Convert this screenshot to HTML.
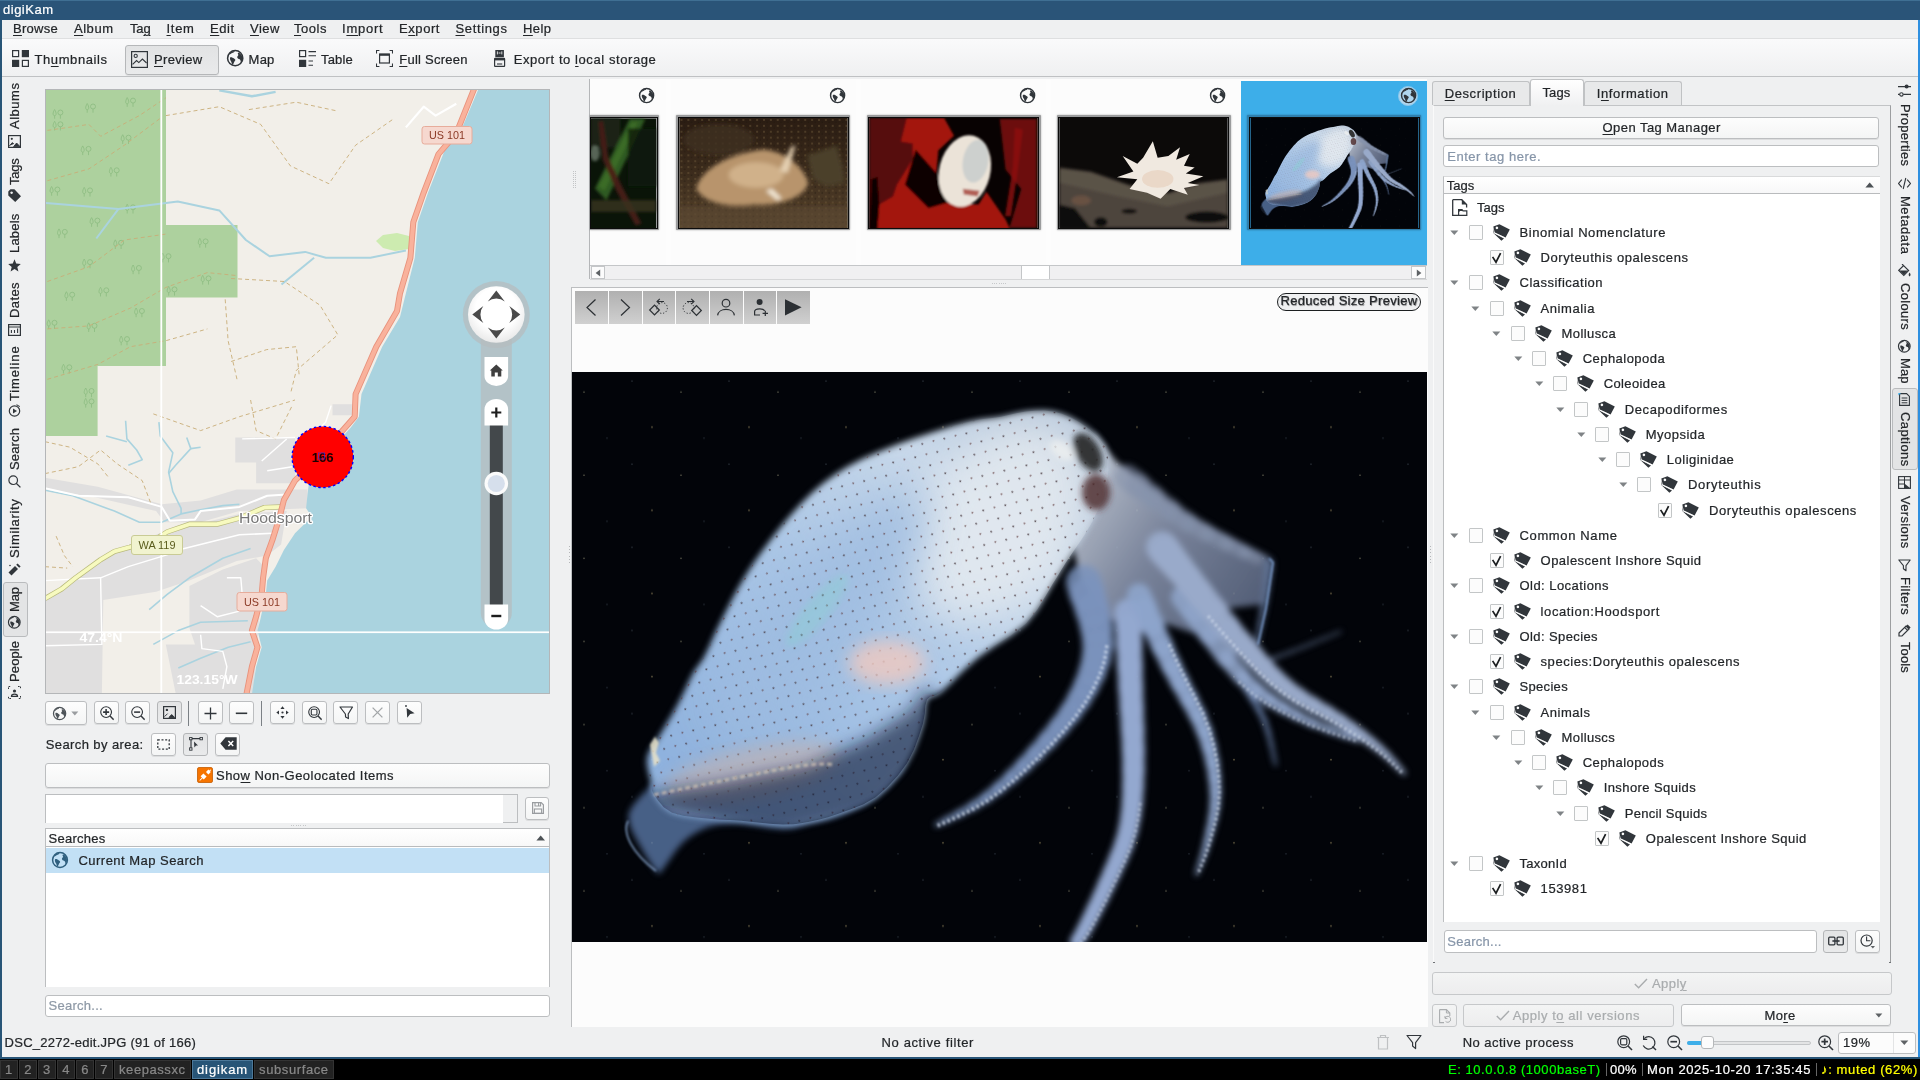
<!DOCTYPE html>
<html><head><meta charset="utf-8"><title>digiKam</title>
<style>
html,body{margin:0;padding:0;}
body{width:1920px;height:1080px;overflow:hidden;background:#eff0f1;position:relative;font-family:"Liberation Sans", sans-serif;}
.a{position:absolute;display:block;}
.t{position:absolute;white-space:pre;font-family:"Liberation Sans", sans-serif;-webkit-text-stroke:0.22px currentColor;}
#root{position:absolute;left:0;top:0;width:1920px;height:1080px;will-change:transform;transform:translateZ(0);}
u{text-decoration:underline;text-underline-offset:1.5px;text-decoration-thickness:1px;}
</style></head><body><div id="root">
<div class="a" style="left:0px;top:0px;width:1920px;height:20px;background:#2a5478;"></div>
<div class="a" style="left:0px;top:0px;width:1920px;height:1px;background:#3f6f93;"></div>
<div class="t" style="left:3.00px;top:1.00px;font-size:13px;line-height:17.000px;letter-spacing:0.504px;color:#ffffff;">digiKam</div>
<div class="a" style="left:0px;top:20px;width:2px;height:1039px;background:#285577;"></div>
<div class="a" style="left:1918px;top:20px;width:2px;height:1039px;background:#2e8fe0;"></div>
<div class="a" style="left:0px;top:1057px;width:1920px;height:2px;background:#285577;"></div>
<div class="a" style="left:2px;top:20px;width:1916px;height:18.5px;background:#eff0f1;"></div>
<div class="t" style="left:13.00px;top:20.00px;font-size:13px;line-height:17.000px;letter-spacing:0.273px;color:#232629;"><u>B</u>rowse</div>
<div class="t" style="left:74.00px;top:20.00px;font-size:13px;line-height:17.000px;letter-spacing:0.528px;color:#232629;"><u>A</u>lbum</div>
<div class="t" style="left:130.00px;top:20.00px;font-size:13px;line-height:17.000px;letter-spacing:-0.156px;color:#232629;">Ta<u>g</u></div>
<div class="t" style="left:166.50px;top:20.00px;font-size:13px;line-height:17.000px;letter-spacing:0.701px;color:#232629;"><u>I</u>tem</div>
<div class="t" style="left:210.00px;top:20.00px;font-size:13px;line-height:17.000px;letter-spacing:0.598px;color:#232629;"><u>E</u>dit</div>
<div class="t" style="left:250.00px;top:20.00px;font-size:13px;line-height:17.000px;letter-spacing:0.512px;color:#232629;"><u>V</u>iew</div>
<div class="t" style="left:294.00px;top:20.00px;font-size:13px;line-height:17.000px;letter-spacing:0.528px;color:#232629;"><u>T</u>ools</div>
<div class="t" style="left:342.00px;top:20.00px;font-size:13px;line-height:17.000px;letter-spacing:0.776px;color:#232629;">I<u>m</u>port</div>
<div class="t" style="left:399.00px;top:20.00px;font-size:13px;line-height:17.000px;letter-spacing:0.570px;color:#232629;">E<u>x</u>port</div>
<div class="t" style="left:455.50px;top:20.00px;font-size:13px;line-height:17.000px;letter-spacing:0.627px;color:#232629;"><u>S</u>ettings</div>
<div class="t" style="left:523.00px;top:20.00px;font-size:13px;line-height:17.000px;letter-spacing:0.438px;color:#232629;"><u>H</u>elp</div>
<div class="a" style="left:2px;top:38.5px;width:1916px;height:38px;background:linear-gradient(#fafafb,#eff0f1);"></div>
<div class="a" style="left:2px;top:38px;width:1916px;height:1px;background:#dedfe0;"></div>
<div class="a" style="left:2px;top:76px;width:1916px;height:1px;background:#bfc1c3;"></div>
<svg class="a" style="left:12px;top:50px;" width="17" height="17" viewBox="0 0 17 17"><rect x="0.6" y="0.6" width="6" height="6" fill="none" stroke="#31363b" stroke-width="1.2"/>
<rect x="9.8" y="0" width="7.2" height="7.2" fill="#31363b"/>
<rect x="0" y="9.8" width="7.2" height="7.2" fill="#31363b"/>
<rect x="10.4" y="10.4" width="6" height="6" fill="none" stroke="#31363b" stroke-width="1.2"/></svg>
<div class="t" style="left:34.50px;top:51.00px;font-size:13px;line-height:17.000px;letter-spacing:0.580px;color:#232629;">Th<u>u</u>mbnails</div>
<div class="a" style="left:125px;top:44.5px;width:93.5px;height:30px;box-sizing:border-box;border:1px solid #b5b7b9;border-radius:3px;background:linear-gradient(#e2e3e4,#e9eaeb);box-shadow:0 1px 0 rgba(0,0,0,0.06);"></div>
<svg class="a" style="left:131px;top:50.5px;" width="17" height="17" viewBox="0 0 17 17"><g transform="scale(1.0)"><rect x="0.6" y="0.6" width="15.8" height="15.8" fill="none" stroke="#31363b" stroke-width="1.2"/>
<circle cx="4.7" cy="4.9" r="1.6" fill="none" stroke="#31363b" stroke-width="1.1"/>
<path d="M1.6,13.4 L5.6,9.6 L7.8,11.6 L11.4,8 L15.6,12" fill="none" stroke="#31363b" stroke-width="1.1"/></g></svg>
<div class="t" style="left:154.00px;top:51.00px;font-size:13px;line-height:17.000px;letter-spacing:0.321px;color:#232629;"><u>P</u>review</div>
<svg class="a" style="left:224.5px;top:48.2px;" width="20.4" height="20.4" viewBox="0 0 20.4 20.4"><g transform="translate(10.2,10.2) scale(0.9879518072289155)"><circle cx="0" cy="0" r="7.7" fill="none" stroke="#31363b" stroke-width="1.55"/>
<path d="M-5.2,-0.6 C-4.2,-1.4 -2.6,-0.6 -1.2,0.4 C0.4,1.2 0.6,2.2 -0.6,3.2 C-1.4,4.4 -1.6,6 -2.6,7 C-3.4,6.4 -3.4,4.8 -4,3.6 C-4.8,2.6 -5.6,1.2 -5.2,-0.6 Z" fill="#31363b"/>
<path d="M3,-5.6 C4.4,-5.8 5.4,-4.4 6.8,-2.6 C7.8,0.4 7.2,3.4 5.6,5.4 C5.8,3.6 5.6,2 4.6,1 C3.2,0.8 2,0 2,-1.2 C2.2,-2.4 3.4,-2.6 3.2,-3.6 C2.6,-4.4 2.4,-5 3,-5.6 Z" fill="#31363b"/>
<path d="M-5.8,-4.6 C-4.4,-6.4 -2.4,-7.4 -0.4,-7.4 L-1.2,-6 C-2.8,-5.6 -4.4,-4.6 -5.8,-3.4 Z" fill="#31363b"/></g></svg>
<div class="t" style="left:248.60px;top:51.00px;font-size:13px;line-height:17.000px;letter-spacing:0.234px;color:#232629;">Map</div>
<svg class="a" style="left:299px;top:50px;" width="17" height="17" viewBox="0 0 17 17"><rect x="0.6" y="0.6" width="6" height="6" fill="none" stroke="#31363b" stroke-width="1.2"/>
<rect x="0" y="9.8" width="7.2" height="7.2" fill="#31363b"/>
<path d="M9.5,1.6 H17 M9.5,5.7 H17 M9.5,11 H14 M9.5,15.2 H14" stroke="#31363b" stroke-width="1.1"/></svg>
<div class="t" style="left:321.00px;top:51.00px;font-size:13px;line-height:17.000px;letter-spacing:0.184px;color:#232629;">Table</div>
<svg class="a" style="left:376px;top:50px;" width="17" height="17" viewBox="0 0 17 17"><path d="M0.5,3.4 V0.5 H3.4 M13.6,0.5 H16.5 V3.4 M16.5,13.6 V16.5 H13.6 M3.4,16.5 H0.5 V13.6" fill="none" stroke="#31363b" stroke-width="1.1"/>
<rect x="3.6" y="4.2" width="9.8" height="8.8" fill="none" stroke="#31363b" stroke-width="1.2"/>
<rect x="3.2" y="3.6" width="10.6" height="2.2" fill="#31363b"/></svg>
<div class="t" style="left:399.20px;top:51.00px;font-size:13px;line-height:17.000px;letter-spacing:0.259px;color:#232629;"><u>F</u>ull Screen</div>
<svg class="a" style="left:493.6px;top:50px;" width="12" height="17" viewBox="0 0 12 17"><rect x="1.3" y="0" width="8.6" height="7.2" fill="#31363b"/>
<path d="M3.4,1.4 V4.4 M7.8,1.4 V4.4 M4.6,3 H6.6" stroke="#eff0f1" stroke-width="0.9"/>
<rect x="0.6" y="8.4" width="10" height="8" fill="none" stroke="#31363b" stroke-width="1.2" rx="0.5"/>
<rect x="0.6" y="8.4" width="10" height="2" fill="#31363b"/>
<path d="M3,14 H8.2" stroke="#31363b" stroke-width="1.1"/></svg>
<div class="t" style="left:513.70px;top:51.00px;font-size:13px;line-height:17.000px;letter-spacing:0.576px;color:#232629;">Export to <u>l</u>ocal storage</div>
<div class="t" style="left:4.60px;top:1034.00px;font-size:13px;line-height:17.000px;letter-spacing:0.245px;color:#232629;">DSC_2272-edit.JPG (91 of 166)</div>
<div class="t" style="left:881.50px;top:1034.00px;font-size:13px;line-height:17.000px;letter-spacing:0.633px;color:#232629;">No active filter</div>
<div class="t" style="left:1462.70px;top:1034.00px;font-size:13px;line-height:17.000px;letter-spacing:0.469px;color:#232629;">No active process</div>
<svg class="a" style="left:1376px;top:1034px;" width="14" height="16" viewBox="0 0 14 16"><path d="M1,3.5 H13 M4.5,3.5 V1.5 H9.5 V3.5 M2.5,3.5 V15 H11.5 V3.5" fill="none" stroke="#bfc1c3" stroke-width="1.2"/></svg>
<svg class="a" style="left:1406px;top:1034px;" width="16" height="16" viewBox="0 0 16 16"><path d="M1,1.5 H15 L9.6,8.6 V14.6 L6.6,12 V8.6 Z" fill="none" stroke="#31363b" stroke-width="1.2" stroke-linejoin="round"/></svg>
<svg class="a" style="left:1616.5px;top:1035px;" width="16" height="16" viewBox="0 0 16 16"><circle cx="6.7" cy="6.7" r="5.9" fill="none" stroke="#31363b" stroke-width="1.2"/><path d="M11,11 L15,15" stroke="#31363b" stroke-width="1.6"/><rect x="3.6" y="3.6" width="6.2" height="6.2" rx="1.2" fill="none" stroke="#31363b" stroke-width="1.2"/></svg>
<svg class="a" style="left:1641px;top:1035px;" width="16" height="16" viewBox="0 0 16 16"><path d="M3.2,3.6 A6.2,6.2 0 1,1 2.2,10.6" fill="none" stroke="#31363b" stroke-width="1.2"/><path d="M2.6,0.8 V4.4 H6.2" fill="none" stroke="#31363b" stroke-width="1.2"/><path d="M11.4,11.4 L15,15" stroke="#31363b" stroke-width="1.4"/></svg>
<svg class="a" style="left:1667px;top:1035px;" width="16" height="16" viewBox="0 0 16 16"><circle cx="6.7" cy="6.7" r="5.9" fill="none" stroke="#31363b" stroke-width="1.2"/><path d="M11,11 L15,15" stroke="#31363b" stroke-width="1.6"/><path d="M3.4,6.7 H10" stroke="#31363b" stroke-width="1.7"/></svg>
<div class="a" style="left:1687px;top:1040.5px;width:124px;height:4px;box-sizing:border-box;border:1px solid #c3c5c7;border-radius:2px;background:#e3e4e5;"></div>
<div class="a" style="left:1687px;top:1040.5px;width:16px;height:4px;border-radius:2px;background:#3daee9;"></div>
<div class="a" style="left:1701px;top:1036px;width:13px;height:13px;box-sizing:border-box;border:1px solid #b6b8ba;border-radius:3px;background:#fcfcfc;"></div>
<svg class="a" style="left:1818px;top:1035px;" width="16" height="16" viewBox="0 0 16 16"><circle cx="6.7" cy="6.7" r="5.9" fill="none" stroke="#31363b" stroke-width="1.2"/><path d="M11,11 L15,15" stroke="#31363b" stroke-width="1.6"/><path d="M3.4,6.7 H10 M6.7,3.4 V10" stroke="#31363b" stroke-width="1.7"/></svg>
<div class="a" style="left:1838px;top:1031.5px;width:78px;height:22px;box-sizing:border-box;border:1px solid #bcbec0;border-radius:3px;background:#fcfcfc;"></div>
<div class="a" style="left:1893px;top:1032.5px;width:1px;height:20px;background:#e3e4e5;"></div>
<div class="t" style="left:1843.00px;top:1034.00px;font-size:13px;line-height:17.000px;letter-spacing:0.490px;color:#232629;">19%</div>
<svg class="a" style="left:1900px;top:1040px;" width="9" height="6" viewBox="0 0 9 6"><path d="M0.3,0.4 L8.3,0.4 L4.3,5 Z" fill="#5e6265"/></svg>
<div class="a" style="left:0px;top:1059px;width:1920px;height:21px;background:#000000;"></div>
<div class="a" style="left:0px;top:1060px;width:17.7px;height:19px;box-sizing:border-box;border:1px solid #333333;background:#222222;"></div>
<div class="t" style="left:5.03px;top:1061.00px;font-size:13px;line-height:17.000px;letter-spacing:0.000px;color:#888888;">1</div>
<div class="a" style="left:19px;top:1060px;width:17.9px;height:19px;box-sizing:border-box;border:1px solid #333333;background:#222222;"></div>
<div class="t" style="left:24.13px;top:1061.00px;font-size:13px;line-height:17.000px;letter-spacing:0.000px;color:#888888;">2</div>
<div class="a" style="left:38px;top:1060px;width:17.8px;height:19px;box-sizing:border-box;border:1px solid #333333;background:#222222;"></div>
<div class="t" style="left:43.08px;top:1061.00px;font-size:13px;line-height:17.000px;letter-spacing:0.000px;color:#888888;">3</div>
<div class="a" style="left:57.3px;top:1060px;width:17.5px;height:19px;box-sizing:border-box;border:1px solid #333333;background:#222222;"></div>
<div class="t" style="left:62.23px;top:1061.00px;font-size:13px;line-height:17.000px;letter-spacing:0.000px;color:#888888;">4</div>
<div class="a" style="left:76.25px;top:1060px;width:17.5px;height:19px;box-sizing:border-box;border:1px solid #333333;background:#222222;"></div>
<div class="t" style="left:81.18px;top:1061.00px;font-size:13px;line-height:17.000px;letter-spacing:0.000px;color:#888888;">6</div>
<div class="a" style="left:95px;top:1060px;width:18px;height:19px;box-sizing:border-box;border:1px solid #333333;background:#222222;"></div>
<div class="t" style="left:100.18px;top:1061.00px;font-size:13px;line-height:17.000px;letter-spacing:0.000px;color:#888888;">7</div>
<div class="a" style="left:114px;top:1060px;width:76.6px;height:19px;box-sizing:border-box;border:1px solid #333333;background:#222222;"></div>
<div class="t" style="left:119.05px;top:1061.00px;font-size:13px;line-height:17.000px;letter-spacing:0.564px;color:#888888;">keepassxc</div>
<div class="a" style="left:192px;top:1060px;width:61px;height:19px;box-sizing:border-box;border:1px solid #4c7899;background:#285577;"></div>
<div class="t" style="left:197.00px;top:1061.00px;font-size:13px;line-height:17.000px;letter-spacing:0.886px;color:#ffffff;">digikam</div>
<div class="a" style="left:254px;top:1060px;width:79.75px;height:19px;box-sizing:border-box;border:1px solid #333333;background:#222222;"></div>
<div class="t" style="left:259.12px;top:1061.00px;font-size:13px;line-height:17.000px;letter-spacing:0.591px;color:#888888;">subsurface</div>
<div class="t" style="left:1448.00px;top:1061.00px;font-size:13px;line-height:17.000px;letter-spacing:0.539px;color:#00ff00;">E: 10.0.0.8 (1000baseT)</div>
<div class="a" style="left:1605.5px;top:1063px;width:1px;height:13px;background:#666666;"></div>
<div class="t" style="left:1610.00px;top:1061.00px;font-size:13px;line-height:17.000px;letter-spacing:0.323px;color:#ffffff;">00%</div>
<div class="a" style="left:1642px;top:1063px;width:1px;height:13px;background:#666666;"></div>
<div class="t" style="left:1647.00px;top:1061.00px;font-size:13px;line-height:17.000px;letter-spacing:0.625px;color:#ffffff;">Mon 2025-10-20 17:35:45</div>
<div class="a" style="left:1816.3px;top:1063px;width:1px;height:13px;background:#666666;"></div>
<div class="t" style="left:1821.00px;top:1061.00px;font-size:13px;line-height:17.000px;letter-spacing:0.632px;color:#ffff00;">♪: muted (62%)</div>
<div class="a" style="left:3px;top:582px;width:25px;height:54.5px;box-sizing:border-box;border:1px solid #b9bbbd;border-radius:3px;background:#e3e4e5;"></div>
<div class="t" style="left:7.73px;top:128.50px;transform-origin:0 0;transform:rotate(-90deg);font-size:13px;line-height:14.937px;letter-spacing:0.523px;color:#232629">Albums</div>
<svg class="a" style="left:7.5px;top:135px;" width="13" height="13" viewBox="0 0 13 13"><rect x="0.6" y="0.6" width="11.8" height="11.8" fill="none" stroke="#31363b" stroke-width="1.2"/><circle cx="3.8" cy="3.8" r="1.1" fill="#31363b"/><path d="M1.4,10.8 L4.4,7.6 L5.8,9 M5.6,11.6 L8.6,8 L12,11.6 Z" fill="#31363b" stroke="#31363b" stroke-width="0.9"/></svg>
<div class="t" style="left:7.73px;top:184.60px;transform-origin:0 0;transform:rotate(-90deg);font-size:13px;line-height:14.937px;letter-spacing:-0.217px;color:#232629">Tags</div>
<svg class="a" style="left:7.5px;top:189px;" width="13" height="13" viewBox="0 0 13 13"><path d="M0.3,6.4 L0.3,2.4 L2.4,0.3 L6.4,0.3 L13,7.2 L7.2,13 Z M3.6,2.4 a1.3,1.3 0 1,0 0.01,0Z" fill="#31363b" fill-rule="evenodd"/></svg>
<div class="t" style="left:7.73px;top:253.00px;transform-origin:0 0;transform:rotate(-90deg);font-size:13px;line-height:14.937px;letter-spacing:0.198px;color:#232629">Labels</div>
<svg class="a" style="left:7.5px;top:258.5px;" width="13" height="13" viewBox="0 0 13 13"><path d="M6.5,0.3 L8.2,4.6 L12.8,4.9 L9.3,7.9 L10.4,12.4 L6.5,10 L2.6,12.4 L3.7,7.9 L0.2,4.9 L4.8,4.6 Z" fill="#31363b"/></svg>
<div class="t" style="left:7.73px;top:317.60px;transform-origin:0 0;transform:rotate(-90deg);font-size:13px;line-height:14.937px;letter-spacing:0.406px;color:#232629">Dates</div>
<svg class="a" style="left:7.5px;top:322.5px;" width="13" height="13" viewBox="0 0 13 13"><rect x="0.6" y="1.6" width="11.8" height="10.8" fill="none" stroke="#31363b" stroke-width="1.2"/><path d="M0.6,4 H12.4 M3.4,7 V10 M6.5,7 V10 M9.6,5.6 V10" stroke="#31363b" stroke-width="1.1"/></svg>
<div class="t" style="left:7.73px;top:400.50px;transform-origin:0 0;transform:rotate(-90deg);font-size:13px;line-height:14.937px;letter-spacing:0.855px;color:#232629">Timeline</div>
<svg class="a" style="left:7.5px;top:404px;" width="13" height="13" viewBox="0 0 13 13"><circle cx="6.5" cy="7" r="5.2" fill="none" stroke="#31363b" stroke-width="1.2"/><path d="M5,4.6 L9,7 L5,9.4 Z" fill="#31363b"/><path d="M8.5,0.6 L11.8,2.6" stroke="#31363b" stroke-width="1.1"/></svg>
<div class="t" style="left:7.73px;top:469.60px;transform-origin:0 0;transform:rotate(-90deg);font-size:13px;line-height:14.937px;letter-spacing:0.149px;color:#232629">Search</div>
<svg class="a" style="left:7.5px;top:474.5px;" width="13" height="13" viewBox="0 0 13 13"><circle cx="5.2" cy="5.2" r="4.3" fill="none" stroke="#31363b" stroke-width="1.2"/><path d="M8.2,8.2 L12.4,12.4" stroke="#31363b" stroke-width="1.3"/></svg>
<div class="t" style="left:7.73px;top:557.50px;transform-origin:0 0;transform:rotate(-90deg);font-size:13px;line-height:14.937px;letter-spacing:0.677px;color:#232629">Similarity</div>
<svg class="a" style="left:7.5px;top:562.5px;" width="13" height="13" viewBox="0 0 13 13"><path d="M0.5,9.5 L7,3 L10,6 L3.5,12.5 Z" fill="#31363b"/><path d="M8.2,1.8 L9.6,0.4 L12.6,3.4 L11.2,4.8 Z" fill="#31363b"/><circle cx="2" cy="2.5" r="0.8" fill="#31363b"/></svg>
<div class="t" style="left:7.73px;top:611.60px;transform-origin:0 0;transform:rotate(-90deg);font-size:13px;line-height:14.937px;letter-spacing:-0.099px;color:#232629">Map</div>
<svg class="a" style="left:5.9px;top:614.2px;" width="16.6" height="16.6" viewBox="0 0 16.6 16.6"><g transform="translate(8.3,8.3) scale(0.7590361445783131)"><circle cx="0" cy="0" r="7.7" fill="none" stroke="#31363b" stroke-width="1.55"/>
<path d="M-5.2,-0.6 C-4.2,-1.4 -2.6,-0.6 -1.2,0.4 C0.4,1.2 0.6,2.2 -0.6,3.2 C-1.4,4.4 -1.6,6 -2.6,7 C-3.4,6.4 -3.4,4.8 -4,3.6 C-4.8,2.6 -5.6,1.2 -5.2,-0.6 Z" fill="#31363b"/>
<path d="M3,-5.6 C4.4,-5.8 5.4,-4.4 6.8,-2.6 C7.8,0.4 7.2,3.4 5.6,5.4 C5.8,3.6 5.6,2 4.6,1 C3.2,0.8 2,0 2,-1.2 C2.2,-2.4 3.4,-2.6 3.2,-3.6 C2.6,-4.4 2.4,-5 3,-5.6 Z" fill="#31363b"/>
<path d="M-5.8,-4.6 C-4.4,-6.4 -2.4,-7.4 -0.4,-7.4 L-1.2,-6 C-2.8,-5.6 -4.4,-4.6 -5.8,-3.4 Z" fill="#31363b"/></g></svg>
<div class="t" style="left:7.73px;top:681.80px;transform-origin:0 0;transform:rotate(-90deg);font-size:13px;line-height:14.937px;letter-spacing:0.119px;color:#232629">People</div>
<svg class="a" style="left:7.5px;top:686px;" width="13" height="13" viewBox="0 0 13 13"><path d="M0.5,3 V0.5 H3 M10,0.5 H12.5 V3 M12.5,10 V12.5 H10 M3,12.5 H0.5 V10" fill="none" stroke="#31363b" stroke-width="1" stroke-dasharray="1.6 1"/><circle cx="6.5" cy="5" r="1.6" fill="#31363b"/><path d="M3.4,10.4 C3.4,7.4 9.6,7.4 9.6,10.4 Z" fill="none" stroke="#31363b" stroke-width="1.1"/></svg>
<svg class="a" style="left:45px;top:89px;" width="504" height="604" viewBox="0 0 504 604"><rect x="0" y="0" width="505" height="605" fill="#f2efe9"/><path d="M0,0 H121 V277 H52.6 V347 H0 Z" fill="#add19e"/><rect x="117" y="136" width="75.5" height="72.5" fill="#add19e"/><path d="M331,152 L338,146 L352,144 L364,147 L364,160 L350,162 L338,159 Z" fill="#cdebb0"/><g transform="translate(45.4,19.1)" fill="none" stroke="#8fbd83" stroke-width="0.9"><path d="M-3.2,-4.6 C-5.4,-1 -5,1.6 -3.2,1.6 C-1.4,1.6 -1,-1 -3.2,-4.6 Z M-3.2,1.6 V4.6"/><circle cx="2.6" cy="-1.6" r="2.5"/><path d="M2.6,0.9 V4.6"/></g><g transform="translate(85.4,13.2)" fill="none" stroke="#8fbd83" stroke-width="0.9"><path d="M-3.2,-4.6 C-5.4,-1 -5,1.6 -3.2,1.6 C-1.4,1.6 -1,-1 -3.2,-4.6 Z M-3.2,1.6 V4.6"/><circle cx="2.6" cy="-1.6" r="2.5"/><path d="M2.6,0.9 V4.6"/></g><g transform="translate(12.8,36.9)" fill="none" stroke="#8fbd83" stroke-width="0.9"><path d="M-3.2,-4.6 C-5.4,-1 -5,1.6 -3.2,1.6 C-1.4,1.6 -1,-1 -3.2,-4.6 Z M-3.2,1.6 V4.6"/><circle cx="2.6" cy="-1.6" r="2.5"/><path d="M2.6,0.9 V4.6"/></g><g transform="translate(80.9,50.3)" fill="none" stroke="#8fbd83" stroke-width="0.9"><path d="M-3.2,-4.6 C-5.4,-1 -5,1.6 -3.2,1.6 C-1.4,1.6 -1,-1 -3.2,-4.6 Z M-3.2,1.6 V4.6"/><circle cx="2.6" cy="-1.6" r="2.5"/><path d="M2.6,0.9 V4.6"/></g><g transform="translate(40.9,61.5)" fill="none" stroke="#8fbd83" stroke-width="0.9"><path d="M-3.2,-4.6 C-5.4,-1 -5,1.6 -3.2,1.6 C-1.4,1.6 -1,-1 -3.2,-4.6 Z M-3.2,1.6 V4.6"/><circle cx="2.6" cy="-1.6" r="2.5"/><path d="M2.6,0.9 V4.6"/></g><g transform="translate(69.1,82.9)" fill="none" stroke="#8fbd83" stroke-width="0.9"><path d="M-3.2,-4.6 C-5.4,-1 -5,1.6 -3.2,1.6 C-1.4,1.6 -1,-1 -3.2,-4.6 Z M-3.2,1.6 V4.6"/><circle cx="2.6" cy="-1.6" r="2.5"/><path d="M2.6,0.9 V4.6"/></g><g transform="translate(9.8,102.1)" fill="none" stroke="#8fbd83" stroke-width="0.9"><path d="M-3.2,-4.6 C-5.4,-1 -5,1.6 -3.2,1.6 C-1.4,1.6 -1,-1 -3.2,-4.6 Z M-3.2,1.6 V4.6"/><circle cx="2.6" cy="-1.6" r="2.5"/><path d="M2.6,0.9 V4.6"/></g><g transform="translate(42.4,103.0)" fill="none" stroke="#8fbd83" stroke-width="0.9"><path d="M-3.2,-4.6 C-5.4,-1 -5,1.6 -3.2,1.6 C-1.4,1.6 -1,-1 -3.2,-4.6 Z M-3.2,1.6 V4.6"/><circle cx="2.6" cy="-1.6" r="2.5"/><path d="M2.6,0.9 V4.6"/></g><g transform="translate(85.4,119.9)" fill="none" stroke="#8fbd83" stroke-width="0.9"><path d="M-3.2,-4.6 C-5.4,-1 -5,1.6 -3.2,1.6 C-1.4,1.6 -1,-1 -3.2,-4.6 Z M-3.2,1.6 V4.6"/><circle cx="2.6" cy="-1.6" r="2.5"/><path d="M2.6,0.9 V4.6"/></g><g transform="translate(49.8,133.2)" fill="none" stroke="#8fbd83" stroke-width="0.9"><path d="M-3.2,-4.6 C-5.4,-1 -5,1.6 -3.2,1.6 C-1.4,1.6 -1,-1 -3.2,-4.6 Z M-3.2,1.6 V4.6"/><circle cx="2.6" cy="-1.6" r="2.5"/><path d="M2.6,0.9 V4.6"/></g><g transform="translate(17.2,144.5)" fill="none" stroke="#8fbd83" stroke-width="0.9"><path d="M-3.2,-4.6 C-5.4,-1 -5,1.6 -3.2,1.6 C-1.4,1.6 -1,-1 -3.2,-4.6 Z M-3.2,1.6 V4.6"/><circle cx="2.6" cy="-1.6" r="2.5"/><path d="M2.6,0.9 V4.6"/></g><g transform="translate(73.5,155.4)" fill="none" stroke="#8fbd83" stroke-width="0.9"><path d="M-3.2,-4.6 C-5.4,-1 -5,1.6 -3.2,1.6 C-1.4,1.6 -1,-1 -3.2,-4.6 Z M-3.2,1.6 V4.6"/><circle cx="2.6" cy="-1.6" r="2.5"/><path d="M2.6,0.9 V4.6"/></g><g transform="translate(158.0,154.0)" fill="none" stroke="#8fbd83" stroke-width="0.9"><path d="M-3.2,-4.6 C-5.4,-1 -5,1.6 -3.2,1.6 C-1.4,1.6 -1,-1 -3.2,-4.6 Z M-3.2,1.6 V4.6"/><circle cx="2.6" cy="-1.6" r="2.5"/><path d="M2.6,0.9 V4.6"/></g><g transform="translate(120.9,168.8)" fill="none" stroke="#8fbd83" stroke-width="0.9"><path d="M-3.2,-4.6 C-5.4,-1 -5,1.6 -3.2,1.6 C-1.4,1.6 -1,-1 -3.2,-4.6 Z M-3.2,1.6 V4.6"/><circle cx="2.6" cy="-1.6" r="2.5"/><path d="M2.6,0.9 V4.6"/></g><g transform="translate(42.4,174.7)" fill="none" stroke="#8fbd83" stroke-width="0.9"><path d="M-3.2,-4.6 C-5.4,-1 -5,1.6 -3.2,1.6 C-1.4,1.6 -1,-1 -3.2,-4.6 Z M-3.2,1.6 V4.6"/><circle cx="2.6" cy="-1.6" r="2.5"/><path d="M2.6,0.9 V4.6"/></g><g transform="translate(91.3,180.6)" fill="none" stroke="#8fbd83" stroke-width="0.9"><path d="M-3.2,-4.6 C-5.4,-1 -5,1.6 -3.2,1.6 C-1.4,1.6 -1,-1 -3.2,-4.6 Z M-3.2,1.6 V4.6"/><circle cx="2.6" cy="-1.6" r="2.5"/><path d="M2.6,0.9 V4.6"/></g><g transform="translate(160.9,191.0)" fill="none" stroke="#8fbd83" stroke-width="0.9"><path d="M-3.2,-4.6 C-5.4,-1 -5,1.6 -3.2,1.6 C-1.4,1.6 -1,-1 -3.2,-4.6 Z M-3.2,1.6 V4.6"/><circle cx="2.6" cy="-1.6" r="2.5"/><path d="M2.6,0.9 V4.6"/></g><g transform="translate(24.6,207.3)" fill="none" stroke="#8fbd83" stroke-width="0.9"><path d="M-3.2,-4.6 C-5.4,-1 -5,1.6 -3.2,1.6 C-1.4,1.6 -1,-1 -3.2,-4.6 Z M-3.2,1.6 V4.6"/><circle cx="2.6" cy="-1.6" r="2.5"/><path d="M2.6,0.9 V4.6"/></g><g transform="translate(58.7,202.9)" fill="none" stroke="#8fbd83" stroke-width="0.9"><path d="M-3.2,-4.6 C-5.4,-1 -5,1.6 -3.2,1.6 C-1.4,1.6 -1,-1 -3.2,-4.6 Z M-3.2,1.6 V4.6"/><circle cx="2.6" cy="-1.6" r="2.5"/><path d="M2.6,0.9 V4.6"/></g><g transform="translate(126.9,202.0)" fill="none" stroke="#8fbd83" stroke-width="0.9"><path d="M-3.2,-4.6 C-5.4,-1 -5,1.6 -3.2,1.6 C-1.4,1.6 -1,-1 -3.2,-4.6 Z M-3.2,1.6 V4.6"/><circle cx="2.6" cy="-1.6" r="2.5"/><path d="M2.6,0.9 V4.6"/></g><g transform="translate(94.3,223.6)" fill="none" stroke="#8fbd83" stroke-width="0.9"><path d="M-3.2,-4.6 C-5.4,-1 -5,1.6 -3.2,1.6 C-1.4,1.6 -1,-1 -3.2,-4.6 Z M-3.2,1.6 V4.6"/><circle cx="2.6" cy="-1.6" r="2.5"/><path d="M2.6,0.9 V4.6"/></g><g transform="translate(6.9,235.4)" fill="none" stroke="#8fbd83" stroke-width="0.9"><path d="M-3.2,-4.6 C-5.4,-1 -5,1.6 -3.2,1.6 C-1.4,1.6 -1,-1 -3.2,-4.6 Z M-3.2,1.6 V4.6"/><circle cx="2.6" cy="-1.6" r="2.5"/><path d="M2.6,0.9 V4.6"/></g><g transform="translate(46.9,238.4)" fill="none" stroke="#8fbd83" stroke-width="0.9"><path d="M-3.2,-4.6 C-5.4,-1 -5,1.6 -3.2,1.6 C-1.4,1.6 -1,-1 -3.2,-4.6 Z M-3.2,1.6 V4.6"/><circle cx="2.6" cy="-1.6" r="2.5"/><path d="M2.6,0.9 V4.6"/></g><g transform="translate(79.4,251.7)" fill="none" stroke="#8fbd83" stroke-width="0.9"><path d="M-3.2,-4.6 C-5.4,-1 -5,1.6 -3.2,1.6 C-1.4,1.6 -1,-1 -3.2,-4.6 Z M-3.2,1.6 V4.6"/><circle cx="2.6" cy="-1.6" r="2.5"/><path d="M2.6,0.9 V4.6"/></g><g transform="translate(21.7,279.9)" fill="none" stroke="#8fbd83" stroke-width="0.9"><path d="M-3.2,-4.6 C-5.4,-1 -5,1.6 -3.2,1.6 C-1.4,1.6 -1,-1 -3.2,-4.6 Z M-3.2,1.6 V4.6"/><circle cx="2.6" cy="-1.6" r="2.5"/><path d="M2.6,0.9 V4.6"/></g><g transform="translate(43.9,303.6)" fill="none" stroke="#8fbd83" stroke-width="0.9"><path d="M-3.2,-4.6 C-5.4,-1 -5,1.6 -3.2,1.6 C-1.4,1.6 -1,-1 -3.2,-4.6 Z M-3.2,1.6 V4.6"/><circle cx="2.6" cy="-1.6" r="2.5"/><path d="M2.6,0.9 V4.6"/></g><g transform="translate(12.8,25.1)" fill="none" stroke="#8fbd83" stroke-width="0.9"><path d="M-3.2,-4.6 C-5.4,-1 -5,1.6 -3.2,1.6 C-1.4,1.6 -1,-1 -3.2,-4.6 Z M-3.2,1.6 V4.6"/><circle cx="2.6" cy="-1.6" r="2.5"/><path d="M2.6,0.9 V4.6"/></g><g transform="translate(43.9,314.0)" fill="none" stroke="#8fbd83" stroke-width="0.9"><path d="M-3.2,-4.6 C-5.4,-1 -5,1.6 -3.2,1.6 C-1.4,1.6 -1,-1 -3.2,-4.6 Z M-3.2,1.6 V4.6"/><circle cx="2.6" cy="-1.6" r="2.5"/><path d="M2.6,0.9 V4.6"/></g><polygon points="190.3,348.5 250.0,348.5 250.0,394.3 211.1,394.3 211.1,373.5 190.3,373.5" fill="#e0dfdf"/><polygon points="287.5,315.2 306.9,315.2 306.9,326.3 287.5,326.3" fill="#e0dfdf"/><polygon points="0.0,388.8 52.8,397.7 116.7,415.2 155.6,411.6 191.7,400.4 262.5,400.4 262.5,419.3 194.4,422.1 155.6,433.2 119.4,433.2 111.1,422.1 50.0,408.2 0.0,400.4" fill="#e0dfdf"/><polygon points="84.7,455.4 122.2,441.6 155.6,434.6 194.4,424.9 241.7,422.1 236.1,455.4 222.2,466.6 191.7,472.1 144.4,491.6 111.1,502.7 58.3,511.0 56.9,604.1 0.0,604.1 0.0,511.0 30.6,491.6 55.6,472.1" fill="#e0dfdf"/><polygon points="144.4,497.1 177.8,480.4 211.1,469.3 219.4,477.7 213.9,533.2 208.3,604.1 130.6,604.1 120.8,555.4 150.0,555.4 144.4,538.8" fill="#e0dfdf"/><polygon points="433.5,-0.1 417.2,38.4 399.4,62.1 383.1,103.6 372.8,133.2 369.8,168.8 360.9,204.3 355.0,228.0 337.2,257.7 316.5,305.1 313.9,327.7 305.6,338.8 280.6,366.6 263.9,394.3 262.5,405.4 261.1,419.3 266.7,427.7 250.0,444.3 238.9,461.0 230.6,477.7 222.2,491.6 220.8,505.4 215.3,530.4 212.5,541.6 216.7,558.2 211.1,577.7 206.9,605.4 505,605 505,0" fill="#aad3df"/><polyline points="0.9,114.0 73.5,119.9 132.8,112.5 174.3,121.4 200.9,151.0 224.6,167.3 260.2,162.9 280.9,168.8 325.4,168.8 360.9,161.4" fill="none" stroke="#aad3df" stroke-width="2" stroke-linejoin="round"/><polyline points="73.5,119.9 51.3,149.5" fill="none" stroke="#aad3df" stroke-width="2" stroke-linejoin="round"/><polyline points="269.1,168.8 236.5,195.4" fill="none" stroke="#aad3df" stroke-width="2" stroke-linejoin="round"/><polyline points="174.3,1.4 206.9,7.3 230.6,2.9" fill="none" stroke="#aad3df" stroke-width="2.4" stroke-linejoin="round"/><polyline points="0.0,401.3 27.8,406.8 69.4,422.1 94.4,433.2 116.7,433.2" fill="none" stroke="#aad3df" stroke-width="1.6" stroke-linejoin="round"/><polyline points="80.6,331.8 81.9,349.9 91.7,361.0 97.2,370.7 83.3,376.3" fill="none" stroke="#aad3df" stroke-width="1.6" stroke-linejoin="round"/><polyline points="61.1,347.1 81.9,352.7" fill="none" stroke="#aad3df" stroke-width="1.6" stroke-linejoin="round"/><polyline points="113.9,333.2 115.3,347.1 127.8,363.8 123.6,383.2 127.8,402.7 136.1,419.3 136.1,424.9" fill="none" stroke="#aad3df" stroke-width="1.6" stroke-linejoin="round"/><polyline points="141.7,348.5 145.8,359.6 130.6,376.3 123.6,384.6" fill="none" stroke="#aad3df" stroke-width="1.6" stroke-linejoin="round"/><polyline points="145.8,359.6 155.6,358.2" fill="none" stroke="#aad3df" stroke-width="1.6" stroke-linejoin="round"/><polyline points="116.7,433.2 136.1,424.9 155.6,420.7 177.8,416.6 194.4,415.2" fill="none" stroke="#aad3df" stroke-width="1.6" stroke-linejoin="round"/><polyline points="104.2,520.7 122.2,505.4 144.4,488.8 177.8,469.3 205.6,459.6" fill="none" stroke="#aad3df" stroke-width="1.6" stroke-linejoin="round"/><polyline points="108.3,555.4 133.3,541.6 155.6,533.2 202.8,531.8" fill="none" stroke="#aad3df" stroke-width="1.6" stroke-linejoin="round"/><polyline points="133.3,579.1 155.6,569.3 183.3,558.2 205.6,552.7" fill="none" stroke="#aad3df" stroke-width="1.6" stroke-linejoin="round"/><polyline points="2.4,41.4 43.9,35.4 55.7,47.3 94.3,26.6 120.9,8.8" fill="none" stroke="#c9ad78" stroke-width="1" stroke-dasharray="4 3" stroke-linejoin="round" opacity="0.9"/><polyline points="2.4,91.7 43.9,79.9 79.4,56.2 115.0,29.5" fill="none" stroke="#c9ad78" stroke-width="1" stroke-dasharray="4 3" stroke-linejoin="round" opacity="0.9"/><polyline points="2.4,192.5 43.9,177.7 79.4,151.0 120.9,145.1" fill="none" stroke="#c9ad78" stroke-width="1" stroke-dasharray="4 3" stroke-linejoin="round" opacity="0.9"/><polyline points="2.4,239.9 43.9,236.9 85.4,219.1 120.9,198.4 162.4,183.6 192.0,186.6" fill="none" stroke="#c9ad78" stroke-width="1" stroke-dasharray="4 3" stroke-linejoin="round" opacity="0.9"/><polyline points="2.4,290.3 52.8,275.4 85.4,257.7 120.9,251.7 162.4,239.9" fill="none" stroke="#c9ad78" stroke-width="1" stroke-dasharray="4 3" stroke-linejoin="round" opacity="0.9"/><polyline points="120.9,26.6 174.3,17.7 215.7,35.4 245.4,76.9 283.9,94.7 310.6,56.2 349.1,29.5" fill="none" stroke="#c9ad78" stroke-width="1" stroke-dasharray="4 3" stroke-linejoin="round" opacity="0.9"/><polyline points="203.9,20.6 251.3,13.2 292.8,22.1" fill="none" stroke="#c9ad78" stroke-width="1" stroke-dasharray="4 3" stroke-linejoin="round" opacity="0.9"/><polyline points="186.1,189.5 239.4,192.5 275.0,216.2 292.8,245.8 251.3,281.4 245.4,305.1" fill="none" stroke="#c9ad78" stroke-width="1" stroke-dasharray="4 3" stroke-linejoin="round" opacity="0.9"/><polyline points="180.2,210.3 183.1,251.7 192.0,290.3" fill="none" stroke="#c9ad78" stroke-width="1" stroke-dasharray="4 3" stroke-linejoin="round" opacity="0.9"/><polyline points="186.1,272.5 221.7,260.6 251.3,257.7 254.3,287.3" fill="none" stroke="#c9ad78" stroke-width="1" stroke-dasharray="4 3" stroke-linejoin="round" opacity="0.9"/><polyline points="108.3,324.9 155.6,341.6 194.4,327.7 250.0,311.0" fill="none" stroke="#c9ad78" stroke-width="1" stroke-dasharray="4 3" stroke-linejoin="round" opacity="0.9"/><polyline points="0.0,384.6 33.3,377.7 55.6,361.0 72.2,374.9 97.2,391.6 105.6,413.8" fill="none" stroke="#c9ad78" stroke-width="1" stroke-dasharray="4 3" stroke-linejoin="round" opacity="0.9"/><polyline points="0.0,352.7 25.0,358.2 52.8,374.9 63.9,388.8" fill="none" stroke="#c9ad78" stroke-width="1" stroke-dasharray="4 3" stroke-linejoin="round" opacity="0.9"/><polyline points="205.6,311.0 211.1,341.6 230.6,349.9 247.2,316.6" fill="none" stroke="#c9ad78" stroke-width="1" stroke-dasharray="4 3" stroke-linejoin="round" opacity="0.9"/><polyline points="11.1,447.1 19.4,466.6 27.8,477.7" fill="none" stroke="#c9ad78" stroke-width="1" stroke-dasharray="4 3" stroke-linejoin="round" opacity="0.9"/><polyline points="0.0,477.7 22.2,479.1" fill="none" stroke="#c9ad78" stroke-width="1" stroke-dasharray="4 3" stroke-linejoin="round" opacity="0.9"/><polyline points="0.0,399.3 33.3,406.8 83.3,408.2 116.7,417.9 125.0,431.8 150.0,430.4 155.6,422.1 194.4,417.9 222.2,406.8 241.7,405.4" fill="none" stroke="#ffffff" stroke-width="2" stroke-linejoin="round"/><polyline points="133.3,461.0 194.4,445.7 227.8,444.3" fill="none" stroke="#ffffff" stroke-width="1.6" stroke-linejoin="round"/><polyline points="0.0,491.6 55.6,488.8 83.3,477.7 133.3,462.4" fill="none" stroke="#ffffff" stroke-width="1.4" stroke-linejoin="round"/><polyline points="55.6,488.8 56.9,555.4 0.0,556.8" fill="none" stroke="#ffffff" stroke-width="1.4" stroke-linejoin="round"/><polyline points="197.2,349.9 250.0,348.5" fill="none" stroke="#ffffff" stroke-width="1.4" stroke-linejoin="round"/><polyline points="216.7,372.1 241.7,349.9" fill="none" stroke="#ffffff" stroke-width="1.4" stroke-linejoin="round"/><polyline points="222.2,381.8 247.2,377.7" fill="none" stroke="#ffffff" stroke-width="1.4" stroke-linejoin="round"/><polyline points="181.9,488.8 195.8,488.8 197.2,505.4" fill="none" stroke="#ffffff" stroke-width="1.4" stroke-linejoin="round"/><polyline points="155.6,516.6 172.2,527.7 194.4,522.1" fill="none" stroke="#ffffff" stroke-width="1.4" stroke-linejoin="round"/><polyline points="155.6,545.7 156.9,559.6 177.8,562.4 181.9,577.7 177.8,599.9" fill="none" stroke="#ffffff" stroke-width="1.4" stroke-linejoin="round"/><polyline points="286.1,316.6 280.6,333.2 266.7,347.1" fill="none" stroke="#ffffff" stroke-width="1.4" stroke-linejoin="round"/><polyline points="360.9,38.4 378.7,17.7 390.6,26.6 411.3,14.7" fill="none" stroke="#ffffff" stroke-width="2.2" stroke-linejoin="round"/><polyline points="0.0,509.6 16.7,499.9 30.6,488.8 55.6,470.7 69.4,462.4 84.7,458.2 111.1,449.9 122.2,442.9 144.4,435.2 172.2,435.2 194.4,429.1 219.4,418.5 236.1,417.9" fill="none" stroke="#b9ba7c" stroke-width="5.2" stroke-linejoin="round"/><polyline points="0.0,509.6 16.7,499.9 30.6,488.8 55.6,470.7 69.4,462.4 84.7,458.2 111.1,449.9 122.2,442.9 144.4,435.2 172.2,435.2 194.4,429.1 219.4,418.5 236.1,417.9" fill="none" stroke="#f7fabf" stroke-width="3.8" stroke-linejoin="round"/><polyline points="429.1,-0.1 411.3,44.3 393.5,65.1 378.7,103.6 368.3,133.2 365.4,168.8 355.0,204.3 352.0,222.1 331.3,257.7 310.6,305.1 309.7,327.7 300.0,338.8 277.8,363.8 250.0,391.6 238.9,411.0 234.7,427.7 227.8,449.9 220.8,469.3 218.1,488.8 216.7,505.4 211.1,527.7 206.9,541.6 212.5,558.2 206.9,577.7 201.4,605.4" fill="none" stroke="#e8927c" stroke-width="6" stroke-linejoin="round"/><polyline points="429.1,-0.1 411.3,44.3 393.5,65.1 378.7,103.6 368.3,133.2 365.4,168.8 355.0,204.3 352.0,222.1 331.3,257.7 310.6,305.1 309.7,327.7 300.0,338.8 277.8,363.8 250.0,391.6 238.9,411.0 234.7,427.7 227.8,449.9 220.8,469.3 218.1,488.8 216.7,505.4 211.1,527.7 206.9,541.6 212.5,558.2 206.9,577.7 201.4,605.4" fill="none" stroke="#f9b29c" stroke-width="4.2" stroke-linejoin="round"/><rect x="115.4" y="0" width="1.8" height="605" fill="#ffffff"/><rect x="0" y="542.4" width="505" height="1.7" fill="#ffffff"/><rect x="377" y="37.5" width="50" height="17.5" rx="2.5" fill="#f6d8cf" stroke="#e7ac9b" stroke-width="1"/><text x="402.0" y="50.25" text-anchor="middle" font-family="Liberation Sans" font-size="11.5" fill="#8c3a26" textLength="36" lengthAdjust="spacingAndGlyphs">US 101</text><rect x="192" y="503.5" width="50" height="18.5" rx="2.5" fill="#f6d8cf" stroke="#e7ac9b" stroke-width="1"/><text x="217.0" y="516.75" text-anchor="middle" font-family="Liberation Sans" font-size="11.5" fill="#8c3a26" textLength="36" lengthAdjust="spacingAndGlyphs">US 101</text><rect x="86.5" y="446.5" width="51" height="19" rx="2.5" fill="#f1f3cf" stroke="#c9cb95" stroke-width="1"/><text x="112.0" y="460.0" text-anchor="middle" font-family="Liberation Sans" font-size="11.5" fill="#5a5c1c" textLength="37" lengthAdjust="spacingAndGlyphs">WA 119</text><text x="194" y="433.5" font-family="Liberation Sans" font-size="15.5" fill="#777777" stroke="#ffffff" stroke-width="2.6" paint-order="stroke" stroke-linejoin="round" textLength="73" lengthAdjust="spacingAndGlyphs">Hoodsport</text><text x="34.5" y="552.5" font-family="Liberation Sans" font-weight="bold" font-size="12" fill="#ffffff" textLength="43" lengthAdjust="spacingAndGlyphs">47.4°N</text><text x="131.5" y="594.5" font-family="Liberation Sans" font-weight="bold" font-size="12" fill="#ffffff" textLength="61" lengthAdjust="spacingAndGlyphs">123.15°W</text><circle cx="277.7" cy="368" r="30.6" fill="#ff0000" stroke="#0000ff" stroke-width="1.4" stroke-dasharray="2.5 2.5"/><text x="277.7" y="372.5" text-anchor="middle" font-family="Liberation Sans" font-weight="bold" font-size="13" fill="#1a0000" textLength="22" lengthAdjust="spacingAndGlyphs">166</text><rect x="273.5" y="364" width="6" height="6" fill="none" stroke="#3030e0" stroke-width="1" opacity="0.7"/><rect x="435.8" y="225" width="31" height="313" rx="14" fill="#b5bcbf" opacity="0.75"/><circle cx="451.3" cy="225.5" r="33.5" fill="#b5bcbf" opacity="0.75"/><defs><radialGradient id="cg" cx="0.5" cy="0.4" r="0.6"><stop offset="0.6" stop-color="#ffffff"/><stop offset="1" stop-color="#e9e9e9"/></radialGradient></defs><circle cx="451.3" cy="225.5" r="28.3" fill="url(#cg)"/><path d="M451.3,201.5 l-8.5,11 a14,14 0 0,1 17,0 Z" fill="#4a4a4a"/><path d="M451.3,249.5 l-8.5,-11 a14,14 0 0,0 17,0 Z" fill="#4a4a4a"/><path d="M427.3,225.5 l11,-8.5 a14,14 0 0,0 0,17 Z" fill="#4a4a4a"/><path d="M475.3,225.5 l-11,-8.5 a14,14 0 0,1 0,17 Z" fill="#4a4a4a"/><path d="M439.5,268 h23.6 v19 a11.8,10 0 0,1 -23.6,0 Z" fill="#ffffff"/><path d="M444.8,281.5 L451.3,275.5 L457.8,281.5 L456.3,281.5 L456.3,287.5 L452.8,287.5 L452.8,283.5 L449.8,283.5 L449.8,287.5 L446.3,287.5 L446.3,281.5 Z" fill="#3f3f3f"/><rect x="444.8" y="333" width="13" height="186" fill="#43484b"/><path d="M439.5,336.5 v-16 a11.8,10.5 0 0,1 23.6,0 v16 Z" fill="#ffffff"/><path d="M446.3,323.5 h10 M451.3,318.5 v10" stroke="#1d1d1d" stroke-width="2.2"/><path d="M439.5,515.5 h23.6 v14.5 a11.8,10.5 0 0,1 -23.6,0 Z" fill="#ffffff"/><path d="M446.3,527 h10" stroke="#1d1d1d" stroke-width="2.4"/><circle cx="451.3" cy="394.5" r="11.8" fill="#fbfbfb"/><circle cx="451.3" cy="394.5" r="8.6" fill="#d6dfec"/></svg>
<div class="a" style="left:44.5px;top:88.5px;width:505px;height:605px;box-sizing:border-box;border:1px solid #b4b6b8;"></div>
<div class="a" style="left:45.2px;top:701.4px;width:41.5px;height:24px;border:1px solid #bcbec0;border-radius:3px;background:linear-gradient(#fdfdfd,#f4f5f5);box-shadow:0 1px 0 rgba(0,0,0,0.08);box-sizing:border-box;"></div>
<svg class="a" style="left:51.2px;top:704.6px;" width="17.2" height="17.2" viewBox="0 0 17.2 17.2"><g transform="translate(8.6,8.6) scale(0.7951807228915662)"><circle cx="0" cy="0" r="7.7" fill="none" stroke="#4d5358" stroke-width="1.55"/>
<path d="M-5.2,-0.6 C-4.2,-1.4 -2.6,-0.6 -1.2,0.4 C0.4,1.2 0.6,2.2 -0.6,3.2 C-1.4,4.4 -1.6,6 -2.6,7 C-3.4,6.4 -3.4,4.8 -4,3.6 C-4.8,2.6 -5.6,1.2 -5.2,-0.6 Z" fill="#4d5358"/>
<path d="M3,-5.6 C4.4,-5.8 5.4,-4.4 6.8,-2.6 C7.8,0.4 7.2,3.4 5.6,5.4 C5.8,3.6 5.6,2 4.6,1 C3.2,0.8 2,0 2,-1.2 C2.2,-2.4 3.4,-2.6 3.2,-3.6 C2.6,-4.4 2.4,-5 3,-5.6 Z" fill="#4d5358"/>
<path d="M-5.8,-4.6 C-4.4,-6.4 -2.4,-7.4 -0.4,-7.4 L-1.2,-6 C-2.8,-5.6 -4.4,-4.6 -5.8,-3.4 Z" fill="#4d5358"/></g></svg>
<svg class="a" style="left:70.5px;top:710.5px;" width="8" height="6" viewBox="0 0 8 6"><path d="M0.3,0.6 L7.3,0.6 L3.8,4.6 Z" fill="#9a9da0"/></svg>
<div class="a" style="left:94.2px;top:701.4px;width:24.6px;height:23px;border:1px solid #bcbec0;border-radius:3px;background:linear-gradient(#fdfdfd,#f4f5f5);box-shadow:0 1px 0 rgba(0,0,0,0.08);box-sizing:border-box;"></div>
<svg class="a" style="left:99.5px;top:706px;" width="14.6" height="14.6" viewBox="0 0 16 16"><circle cx="6.7" cy="6.7" r="5.9" fill="none" stroke="#31363b" stroke-width="1.2"/><path d="M11,11 L15,15" stroke="#31363b" stroke-width="1.6"/><path d="M3.4,6.7 H10 M6.7,3.4 V10" stroke="#31363b" stroke-width="1.7"/></svg>
<div class="a" style="left:125.2px;top:701.4px;width:24.6px;height:23px;border:1px solid #bcbec0;border-radius:3px;background:linear-gradient(#fdfdfd,#f4f5f5);box-shadow:0 1px 0 rgba(0,0,0,0.08);box-sizing:border-box;"></div>
<svg class="a" style="left:130.5px;top:706px;" width="14.6" height="14.6" viewBox="0 0 16 16"><circle cx="6.7" cy="6.7" r="5.9" fill="none" stroke="#31363b" stroke-width="1.2"/><path d="M11,11 L15,15" stroke="#31363b" stroke-width="1.6"/><path d="M3.4,6.7 H10" stroke="#31363b" stroke-width="1.7"/></svg>
<div class="a" style="left:157.2px;top:701.4px;width:24.6px;height:23px;border:1px solid #b3b5b7;border-radius:3px;background:linear-gradient(#e3e4e5,#e9eaeb);box-sizing:border-box;"></div>
<svg class="a" style="left:163px;top:706.3px;" width="13" height="13" viewBox="0 0 13 13"><rect x="0.6" y="0.6" width="11.8" height="11.8" fill="none" stroke="#31363b" stroke-width="1.2"/><circle cx="3.9" cy="3.9" r="1.2" fill="#31363b"/><path d="M1.6,10.6 L4.6,7.6 M6,11.4 L8.6,8.6 L11.6,11.4 Z" fill="#31363b" stroke="#31363b" stroke-width="1"/></svg>
<div class="a" style="left:188.2px;top:701px;width:1px;height:24.7px;background:#7b8085;"></div>
<div class="a" style="left:198.1px;top:701.4px;width:24.6px;height:23px;border:1px solid #bcbec0;border-radius:3px;background:linear-gradient(#fdfdfd,#f4f5f5);box-shadow:0 1px 0 rgba(0,0,0,0.08);box-sizing:border-box;"></div>
<svg class="a" style="left:204px;top:706.5px;" width="13" height="13" viewBox="0 0 13 13"><path d="M0.5,6.5 H12.5 M6.5,0.5 V12.5" stroke="#31363b" stroke-width="1.3"/></svg>
<div class="a" style="left:229.4px;top:701.4px;width:24.6px;height:23px;border:1px solid #bcbec0;border-radius:3px;background:linear-gradient(#fdfdfd,#f4f5f5);box-shadow:0 1px 0 rgba(0,0,0,0.08);box-sizing:border-box;"></div>
<svg class="a" style="left:235.3px;top:706.5px;" width="13" height="13" viewBox="0 0 13 13"><path d="M0.8,6.3 H12.2" stroke="#31363b" stroke-width="1.6"/></svg>
<div class="a" style="left:261.1px;top:701px;width:1px;height:24.7px;background:#7b8085;"></div>
<div class="a" style="left:270.2px;top:701.4px;width:24.6px;height:23px;border:1px solid #bcbec0;border-radius:3px;background:linear-gradient(#fdfdfd,#f4f5f5);box-shadow:0 1px 0 rgba(0,0,0,0.08);box-sizing:border-box;"></div>
<svg class="a" style="left:276px;top:706.2px;" width="13" height="13" viewBox="0 0 13 13"><path d="M6.5,0.3 L8.6,3 H4.4 Z M6.5,12.7 L8.6,10 H4.4 Z M0.3,6.5 L3,4.4 V8.6 Z M12.7,6.5 L10,4.4 V8.6 Z" fill="#31363b"/><circle cx="6.5" cy="6.5" r="1.1" fill="#31363b"/></svg>
<div class="a" style="left:302.2px;top:701.4px;width:24.6px;height:23px;border:1px solid #bcbec0;border-radius:3px;background:linear-gradient(#fdfdfd,#f4f5f5);box-shadow:0 1px 0 rgba(0,0,0,0.08);box-sizing:border-box;"></div>
<svg class="a" style="left:307.5px;top:706px;" width="14.6" height="14.6" viewBox="0 0 16 16"><circle cx="6.7" cy="6.7" r="5.9" fill="none" stroke="#31363b" stroke-width="1.2"/><path d="M11,11 L15,15" stroke="#31363b" stroke-width="1.6"/><rect x="3.6" y="3.6" width="6.2" height="6.2" rx="1.2" fill="none" stroke="#31363b" stroke-width="1.2"/></svg>
<div class="a" style="left:333.2px;top:701.4px;width:24.6px;height:23px;border:1px solid #bcbec0;border-radius:3px;background:linear-gradient(#fdfdfd,#f4f5f5);box-shadow:0 1px 0 rgba(0,0,0,0.08);box-sizing:border-box;"></div>
<svg class="a" style="left:338.5px;top:705.5px;" width="15" height="14" viewBox="0 0 15 14"><path d="M1,1 H13.5 L9.2,8 L9.4,12.6 L6.6,11 L6.4,8 Z" fill="none" stroke="#31363b" stroke-width="1.2" stroke-linejoin="round"/></svg>
<div class="a" style="left:365.3px;top:701.4px;width:24.6px;height:23px;border:1px solid #bcbec0;border-radius:3px;background:linear-gradient(#fdfdfd,#f4f5f5);box-shadow:0 1px 0 rgba(0,0,0,0.08);box-sizing:border-box;"></div>
<svg class="a" style="left:372px;top:707px;" width="11" height="11" viewBox="0 0 11 11"><path d="M0.6,0.6 L10.4,10.4 M10.4,0.6 L0.6,10.4" stroke="#a3a6a8" stroke-width="1.3"/></svg>
<div class="a" style="left:397.3px;top:701.4px;width:24.6px;height:23px;border:1px solid #bcbec0;border-radius:3px;background:linear-gradient(#fdfdfd,#f4f5f5);box-shadow:0 1px 0 rgba(0,0,0,0.08);box-sizing:border-box;"></div>
<svg class="a" style="left:405px;top:705px;" width="11" height="14" viewBox="0 0 11 14"><path d="M1.6,3 L9.6,8.2 L5.2,9 L2.2,12.8 Z" fill="#31363b"/><circle cx="1" cy="1" r="0.9" fill="#31363b"/></svg>
<div class="t" style="left:45.70px;top:736.00px;font-size:13px;line-height:17.000px;letter-spacing:0.408px;color:#232629;">Search by area:</div>
<div class="a" style="left:151.3px;top:732.5px;width:24.5px;height:23px;border:1px solid #bcbec0;border-radius:3px;background:linear-gradient(#fdfdfd,#f4f5f5);box-shadow:0 1px 0 rgba(0,0,0,0.08);box-sizing:border-box;"></div>
<svg class="a" style="left:157px;top:738.5px;" width="13" height="11" viewBox="0 0 13 11"><rect x="0.8" y="0.8" width="11.4" height="9.4" fill="none" stroke="#31363b" stroke-width="1.3" stroke-dasharray="2 1.7"/></svg>
<div class="a" style="left:183.2px;top:732.5px;width:24.5px;height:23px;border:1px solid #b3b5b7;border-radius:3px;background:linear-gradient(#e3e4e5,#e9eaeb);box-sizing:border-box;"></div>
<svg class="a" style="left:188.5px;top:737px;" width="14" height="14" viewBox="0 0 14 14"><path d="M2,1.6 H12 M2,1.6 V12" stroke="#31363b" stroke-width="1.1" fill="none"/><rect x="0.6" y="0.4" width="2.4" height="2.4" fill="#e6e7e8" stroke="#31363b" stroke-width="0.9"/><rect x="11" y="0.4" width="2.4" height="2.4" fill="#e6e7e8" stroke="#31363b" stroke-width="0.9"/><rect x="0.6" y="10.8" width="2.4" height="2.4" fill="#e6e7e8" stroke="#31363b" stroke-width="0.9"/><path d="M5,4.4 L9,8.4 L7,8.6 L5.4,10.4 Z" fill="#31363b"/></svg>
<div class="a" style="left:215.3px;top:732.5px;width:24.5px;height:23px;border:1px solid #bcbec0;border-radius:3px;background:linear-gradient(#fdfdfd,#f4f5f5);box-shadow:0 1px 0 rgba(0,0,0,0.08);box-sizing:border-box;"></div>
<svg class="a" style="left:219.5px;top:737.3px;" width="17" height="13" viewBox="0 0 17 13"><path d="M0.3,6.5 L5.6,0.3 H16.7 V12.7 H5.6 Z" fill="#31363b"/><path d="M8.4,4 L13.2,9 M13.2,4 L8.4,9" stroke="#ffffff" stroke-width="1.5"/></svg>
<div class="a" style="left:45px;top:763px;width:504.5px;height:24.5px;border:1px solid #bcbec0;border-radius:3px;background:linear-gradient(#fdfdfd,#f4f5f5);box-shadow:0 1px 0 rgba(0,0,0,0.08);box-sizing:border-box;"></div>
<svg class="a" style="left:197.2px;top:767.3px;" width="16" height="16" viewBox="0 0 16 16"><rect x="0.5" y="0.5" width="15" height="15" rx="1.5" fill="#f67400" stroke="#c45c00" stroke-width="0.8"/><path d="M2.4,13.2 L5,10.6 L3.6,9.2 L6.4,6.4 L9.6,9.6 L6.8,12.4 L5.6,11.2 L3,13.8 Z M9,5 L11.4,2.6 L12.4,3.6 L13.6,2.4 L14.2,3 L13,4.2 L13.8,5 L11.4,7.4 Z" fill="#ffffff"/></svg>
<div class="t" style="left:216.00px;top:767.00px;font-size:13px;line-height:17.000px;letter-spacing:0.472px;color:#232629;">Sho<u>w</u> Non-Geolocated Items</div>
<div class="a" style="left:45px;top:794.3px;width:473px;height:29px;box-sizing:border-box;border:1px solid #bcbec0;border-bottom:none;background:#ffffff;"></div>
<div class="a" style="left:503px;top:795.3px;width:14px;height:27.5px;background:#eff0f1;"></div>
<div class="a" style="left:503px;top:822.3px;width:15px;height:1px;background:#bcbec0;"></div>
<div class="a" style="left:525.4px;top:796.5px;width:24.1px;height:23.3px;border:1px solid #bcbec0;border-radius:3px;background:linear-gradient(#fdfdfd,#f4f5f5);box-shadow:0 1px 0 rgba(0,0,0,0.08);box-sizing:border-box;"></div>
<svg class="a" style="left:531.5px;top:802px;" width="12" height="12" viewBox="0 0 12 12"><path d="M0.6,0.6 H9.2 L11.4,2.8 V11.4 H0.6 Z" fill="none" stroke="#9a9da0" stroke-width="1.2"/><path d="M3,0.6 V4 H8.6 V0.6 M6.6,1 V3.4" fill="none" stroke="#9a9da0" stroke-width="1.1"/><rect x="2.4" y="7" width="7.2" height="4.4" fill="none" stroke="#9a9da0" stroke-width="1.1"/></svg>
<div class="a" style="left:290.5px;top:825.4px;width:1px;height:1px;background:#c6c8ca;"></div>
<div class="a" style="left:292.7px;top:825.4px;width:1px;height:1px;background:#c6c8ca;"></div>
<div class="a" style="left:296.0px;top:825.4px;width:1px;height:1px;background:#c6c8ca;"></div>
<div class="a" style="left:298.2px;top:825.4px;width:1px;height:1px;background:#c6c8ca;"></div>
<div class="a" style="left:300.4px;top:825.4px;width:1px;height:1px;background:#c6c8ca;"></div>
<div class="a" style="left:302.6px;top:825.4px;width:1px;height:1px;background:#c6c8ca;"></div>
<div class="a" style="left:304.8px;top:825.4px;width:1px;height:1px;background:#c6c8ca;"></div>
<div class="a" style="left:45px;top:828.4px;width:504.5px;height:158.6px;box-sizing:border-box;border:1px solid #bcbec0;border-bottom:none;background:#ffffff;"></div>
<div class="a" style="left:46px;top:829.4px;width:502.5px;height:17px;background:linear-gradient(#ffffff,#f8f8f8);"></div>
<div class="a" style="left:46px;top:846.3px;width:502.5px;height:1px;background:#b9bbbd;"></div>
<div class="t" style="left:48.50px;top:830.00px;font-size:13px;line-height:17.000px;letter-spacing:0.260px;color:#232629;">Searches</div>
<svg class="a" style="left:536px;top:834.5px;" width="10" height="6" viewBox="0 0 10 6"><path d="M0.4,5.4 L4.7,0.6 L9,5.4 Z" fill="#4d5256"/></svg>
<div class="a" style="left:46px;top:848px;width:502.5px;height:25px;background:#c2e0f5;"></div>
<svg class="a" style="left:50.3px;top:850.3px;" width="20" height="20" viewBox="0 0 20 20"><g transform="translate(10,10) scale(0.9638554216867469)"><circle cx="0" cy="0" r="7.7" fill="none" stroke="#2f5f7e" stroke-width="1.55"/>
<path d="M-5.2,-0.6 C-4.2,-1.4 -2.6,-0.6 -1.2,0.4 C0.4,1.2 0.6,2.2 -0.6,3.2 C-1.4,4.4 -1.6,6 -2.6,7 C-3.4,6.4 -3.4,4.8 -4,3.6 C-4.8,2.6 -5.6,1.2 -5.2,-0.6 Z" fill="#2f5f7e"/>
<path d="M3,-5.6 C4.4,-5.8 5.4,-4.4 6.8,-2.6 C7.8,0.4 7.2,3.4 5.6,5.4 C5.8,3.6 5.6,2 4.6,1 C3.2,0.8 2,0 2,-1.2 C2.2,-2.4 3.4,-2.6 3.2,-3.6 C2.6,-4.4 2.4,-5 3,-5.6 Z" fill="#2f5f7e"/>
<path d="M-5.8,-4.6 C-4.4,-6.4 -2.4,-7.4 -0.4,-7.4 L-1.2,-6 C-2.8,-5.6 -4.4,-4.6 -5.8,-3.4 Z" fill="#2f5f7e"/></g></svg>
<div class="t" style="left:78.50px;top:852.00px;font-size:13px;line-height:17.000px;letter-spacing:0.469px;color:#232629;">Current Map Search</div>
<div class="a" style="left:45px;top:994.8px;width:504.5px;height:22px;box-sizing:border-box;border:1px solid #bcbec0;border-radius:3px;background:#ffffff;"></div>
<div class="t" style="left:48.50px;top:997.00px;font-size:13px;line-height:17.000px;letter-spacing:0.274px;color:#8e99a6;">Search...</div>
<div class="a" style="left:589px;top:79.3px;width:838px;height:199.7px;box-sizing:border-box;border-left:1px solid #b4b6b8;background:#fcfcfc;"></div>
<div class="a" style="left:666px;top:80px;width:5px;height:185.5px;background:#fdfdfd;"></div>
<div class="a" style="left:856px;top:80px;width:5px;height:185.5px;background:#fdfdfd;"></div>
<div class="a" style="left:1046px;top:80px;width:5px;height:185.5px;background:#fdfdfd;"></div>
<div class="a" style="left:1241.4px;top:80.8px;width:185.2px;height:184.6px;background:#3daee9;"></div>
<div class="a" style="left:590px;top:115.2px;width:69.2px;height:115.2px;background:#9b9c9d;box-shadow:0 0 2px rgba(0,0,0,0.35);border-radius:0 1px 1px 0;"></div>
<svg class="a" style="left:590px;top:116.7px;border:1px solid #0c0c0c;box-sizing:border-box;" width="67.7" height="112.2" viewBox="0 0 67.7 112.2"><defs><filter id="t1b"><feGaussianBlur stdDeviation="1.8"/></filter></defs><rect width="67" height="113" fill="#0a1408"/><g filter="url(#t1b)"><rect x="0" y="0" width="30" height="30" fill="#1a2414"/><path d="M4,72 L40,0 L56,0 L16,84 Z" fill="#2f5a20"/><path d="M8,70 L42,4 L48,4 L14,74 Z" fill="#3f7028" opacity="0.8"/><path d="M8,4 L12,2 L18,40 L32,70 L52,108 L46,110 L26,74 L12,42 Z" fill="#4a1c16" opacity="0.9"/><rect x="0" y="84" width="67" height="12" fill="#3a3420" opacity="0.8"/><rect x="38" y="10" width="29" height="60" fill="#0c1c0c" opacity="0.8"/><ellipse cx="4" cy="36" rx="5" ry="8" fill="#8a9a8a" opacity="0.6"/></g></svg>
<div class="a" style="left:676.2px;top:115.2px;width:174px;height:115.2px;background:#9b9c9d;box-shadow:0 0 2px rgba(0,0,0,0.35);border-radius:1px;"></div>
<svg class="a" style="left:677.7px;top:116.7px;border:1px solid #0c0c0c;box-sizing:border-box;" width="171" height="112.2" viewBox="0 0 171 112.2"><defs><filter id="t2b"><feGaussianBlur stdDeviation="2.2"/></filter><linearGradient id="t2g" x1="0" y1="0" x2="0" y2="1"><stop offset="0" stop-color="#2a1c12"/><stop offset="0.45" stop-color="#3a2a1b"/><stop offset="1" stop-color="#56432c"/></linearGradient><pattern id="t2n" width="7" height="6" patternUnits="userSpaceOnUse"><rect x="1" y="1" width="2" height="2" fill="#6a5638" opacity="0.5"/><rect x="4.5" y="3.5" width="1.6" height="1.6" fill="#20160e" opacity="0.5"/></pattern></defs><rect width="171" height="113" fill="url(#t2g)"/><rect width="171" height="113" fill="url(#t2n)"/><g filter="url(#t2b)"><ellipse cx="40" cy="22" rx="36" ry="16" fill="#3d2f1e" opacity="0.8"/><path d="M17,72 C22,52 50,36 86,32 C106,34 126,48 131,66 C128,80 104,90 76,88 C50,92 24,86 17,72 Z" fill="#b8946c"/><ellipse cx="78" cy="58" rx="28" ry="13" fill="#d6b892" opacity="0.8"/><path d="M102,54 L114,29 L118,28 L110,56 Z" fill="#e6d2b4"/><path d="M88,74 L100,84 L104,82 L94,72 Z" fill="#f4ead8"/><path d="M130,38 L142,34 L160,28 L166,50 L168,66 L150,70 L136,62 Z" fill="#4b4129"/><rect x="0" y="90" width="171" height="23" fill="#5a4730" opacity="0.6"/></g></svg>
<div class="a" style="left:866.5px;top:115.2px;width:174px;height:115.2px;background:#9b9c9d;box-shadow:0 0 2px rgba(0,0,0,0.35);border-radius:1px;"></div>
<svg class="a" style="left:868.0px;top:116.7px;border:1px solid #0c0c0c;box-sizing:border-box;" width="171" height="112.2" viewBox="0 0 171 112.2"><defs><filter id="t3b"><feGaussianBlur stdDeviation="1.3"/></filter></defs><rect width="171" height="113" fill="#080202"/><g filter="url(#t3b)"><rect x="0" y="0" width="60" height="113" fill="#560b08"/><polygon points="132.6,1.0 170.2,1.0 170.2,111.8 142.5,111.8 154.4,72.2 138.5,52.4" fill="#6c0e0a"/><path d="M38,0 L76,0 L86,18 L70,33 L68,58 L80,86 L111,88 L119,75 L139,104 L143,113 L8,113 L10,88 L24,80 L28,68 L44,42 L44,26 L32,24 Z" fill="#a3150b"/><path d="M47,32 L70,58 L80,86 L60,92 L36,68 Z" fill="#0a0202"/><path d="M2,62 L8,60 L10,88 L8,113 L0,113 Z" fill="#0a0202"/><path d="M148,10 L156,12 L150,60 L144,100 L138,100 L146,50 Z" fill="#8f120c" opacity="0.8"/><ellipse cx="97" cy="54" rx="26" ry="37" fill="#ebe3d8" transform="rotate(14 97 54)"/><ellipse cx="108" cy="44" rx="13" ry="22" fill="#cdd0ce" transform="rotate(10 108 44)"/><path d="M95,72 L112,74 L110,80 L96,78 Z" fill="#9a2a20" opacity="0.7"/></g></svg>
<div class="a" style="left:1056.8px;top:115.2px;width:174px;height:115.2px;background:#9b9c9d;box-shadow:0 0 2px rgba(0,0,0,0.35);border-radius:1px;"></div>
<svg class="a" style="left:1058.3px;top:116.7px;border:1px solid #0c0c0c;box-sizing:border-box;" width="171" height="112.2" viewBox="0 0 171 112.2"><defs><filter id="t4b"><feGaussianBlur stdDeviation="1.4"/></filter><filter id="t4c"><feGaussianBlur stdDeviation="0.8"/></filter></defs><rect width="171" height="113" fill="#0c0a09"/><g filter="url(#t4b)"><polygon points="0.0,50.5 31.7,54.4 71.3,68.3 110.8,76.2 140.5,66.3 171.2,62.3 171.2,111.8 0.0,111.8" fill="#4d453c"/><path d="M0,52 L32,56 L72,70 L112,78 L142,68 L171,64 L171,76 L110,90 L60,80 L0,66 Z" fill="#5e554a" opacity="0.8"/><polygon points="0.0,88.1 15.8,92.0 31.7,111.8 0.0,111.8" fill="#0e0b09"/><ellipse cx="150" cy="101" rx="22" ry="6" fill="#0f0c0a"/><ellipse cx="71" cy="95" rx="8" ry="2.6" fill="#0f0c0a"/><ellipse cx="42" cy="106" rx="7" ry="5" fill="#0f0c0a"/><ellipse cx="22" cy="84" rx="10" ry="5" fill="#7a5a48" opacity="0.6"/></g><g filter="url(#t4c)"><polygon points="58.4,60.4 75.2,54.4 64.3,38.6 79.2,46.5 85.1,40.6 95.0,23.8 99.9,40.6 110.8,38.6 122.7,29.7 118.8,42.6 132.6,36.6 126.7,48.5 137.6,50.5 128.6,56.4 146.5,59.4 130.6,66.3 142.5,68.3 126.7,71.3 130.6,78.2 112.8,72.2 102.9,82.1 89.1,76.2 71.3,72.2 79.2,62.3" fill="#f0e9e0"/><ellipse cx="100" cy="62" rx="16" ry="9" fill="#ead8c8"/></g></svg>
<div class="a" style="left:1247.1px;top:115.2px;width:174px;height:115.2px;background:#2f7fae;box-shadow:0 0 2px rgba(0,0,0,0.35);border-radius:1px;"></div>
<svg class="a" style="left:1248.6px;top:116.7px;border:1px solid #0c0c0c;box-sizing:border-box;" width="171" height="112.2" viewBox="0 0 171 112.2"><svg x="0" y="0" width="171" height="113" viewBox="0 0 855 569" preserveAspectRatio="none">
<defs>
<filter id="b1t" x="-10%" y="-10%" width="120%" height="120%"><feGaussianBlur stdDeviation="0.9"/></filter>
<filter id="b3t" x="-10%" y="-10%" width="120%" height="120%"><feGaussianBlur stdDeviation="3"/></filter>
<filter id="b8t" x="-20%" y="-20%" width="140%" height="140%"><feGaussianBlur stdDeviation="8"/></filter>
<filter id="b20t" x="-30%" y="-30%" width="160%" height="160%"><feGaussianBlur stdDeviation="20"/></filter>
<linearGradient id="mgt" x1="0.1" y1="0.9" x2="0.9" y2="0.1"><stop offset="0" stop-color="#8fb2de"/><stop offset="0.45" stop-color="#aac6e6"/><stop offset="0.8" stop-color="#c9d9ea"/><stop offset="1" stop-color="#b9c9dc"/></linearGradient>
<linearGradient id="cgrt" gradientUnits="userSpaceOnUse" x1="515" y1="120" x2="700" y2="240"><stop offset="0" stop-color="#cdd6e5"/><stop offset="0.4" stop-color="#8e9ab4"/><stop offset="1" stop-color="#5d6a86"/></linearGradient>
<pattern id="dotst" width="17" height="15" patternUnits="userSpaceOnUse" patternTransform="rotate(28)"><circle cx="3" cy="4" r="1" fill="#3a2a30" opacity="0.75"/><circle cx="11.5" cy="11" r="0.9" fill="#5a3030" opacity="0.7"/></pattern>
<pattern id="starst" width="97" height="83" patternUnits="userSpaceOnUse"><circle cx="12" cy="20" r="0.8" fill="#8c8a70" opacity="0.7"/><circle cx="60" cy="9" r="0.6" fill="#7a8a9a" opacity="0.6"/><circle cx="80" cy="55" r="0.9" fill="#9a8a60" opacity="0.6"/><circle cx="35" cy="66" r="0.6" fill="#6a7a8a" opacity="0.6"/></pattern>
<clipPath id="mct"><polygon points="428.0,45.0 420.5,45.9 409.4,47.3 396.0,50.0 379.9,54.3 361.4,59.9 343.0,66.0 324.8,72.5 306.6,79.6 290.0,87.0 275.7,94.5 263.0,102.3 251.0,111.0 239.7,120.8 229.2,131.4 219.0,142.5 208.8,154.5 199.0,167.0 190.0,179.0 182.4,189.7 175.7,199.9 169.0,211.0 161.8,224.0 154.6,237.8 148.0,251.0 142.1,263.4 136.8,275.2 132.0,285.0 128.1,291.1 124.8,295.2 121.0,301.0 116.3,310.4 111.1,321.4 105.5,332.5 99.3,343.4 92.8,354.3 87.0,364.0 81.9,371.7 77.6,378.2 75.0,385.0 75.2,393.2 77.1,401.7 79.0,409.0 79.5,414.0 79.9,417.7 82.0,422.0 86.2,428.1 92.0,434.7 100.0,440.0 111.1,443.0 124.3,444.7 137.0,446.0 147.7,446.9 157.8,447.3 169.0,448.0 182.8,449.4 197.8,451.1 211.0,452.0 220.9,451.7 229.1,450.6 237.5,449.0 246.7,447.0 256.2,444.5 266.5,441.0 278.4,436.9 291.2,431.8 303.4,424.8 314.9,414.9 325.8,403.0 335.0,390.5 341.9,377.1 347.1,363.2 351.0,351.0 352.8,341.2 353.3,333.2 355.0,327.0 358.2,324.2 362.6,323.2 369.4,319.3 379.5,309.8 392.1,297.4 406.0,285.0 421.9,273.9 439.1,262.8 454.0,251.0 465.1,237.4 473.8,223.1 481.0,211.0 485.9,203.3 489.2,197.7 494.0,190.0 502.1,178.1 511.7,164.0 520.0,150.0 526.4,136.5 531.7,123.0 535.0,110.0 536.5,97.3 536.1,85.0 533.0,74.0 526.1,64.6 516.6,56.5 507.0,50.0 498.4,45.1 489.7,41.8 481.0,39.6 472.0,38.6 463.0,38.8 454.0,39.6 444.3,41.2 434.7,43.4 428.0,45.0"/></clipPath>
</defs>
<rect width="855" height="569" fill="#020409"/><rect width="855" height="569" fill="url(#starst)"/>
<g filter="url(#b3t)">
<polygon points="520.0,60.0 545.0,90.0 617.0,143.0 697.0,184.0 700.0,192.0 692.0,232.0 655.0,236.0 625.0,262.0 590.0,250.0 565.0,262.0 535.0,245.0 508.0,205.0 500.0,170.0 515.0,120.0" fill="url(#cgrt)" opacity="0.85"/>
<line x1="555.0" y1="105.0" x2="565.8" y2="113.3" stroke="#8693ad" stroke-width="26.0" stroke-linecap="round" opacity="0.55"/><line x1="565.8" y1="113.3" x2="581.2" y2="125.2" stroke="#8693ad" stroke-width="24.0" stroke-linecap="round" opacity="0.55"/><line x1="581.2" y1="125.2" x2="598.8" y2="138.3" stroke="#8693ad" stroke-width="22.0" stroke-linecap="round" opacity="0.55"/><line x1="598.8" y1="138.3" x2="616.0" y2="150.0" stroke="#8693ad" stroke-width="20.0" stroke-linecap="round" opacity="0.55"/><line x1="616.0" y1="150.0" x2="634.3" y2="160.5" stroke="#8693ad" stroke-width="18.0" stroke-linecap="round" opacity="0.55"/><line x1="634.3" y1="160.5" x2="654.3" y2="170.8" stroke="#8693ad" stroke-width="16.0" stroke-linecap="round" opacity="0.55"/><line x1="654.3" y1="170.8" x2="672.4" y2="179.7" stroke="#8693ad" stroke-width="14.0" stroke-linecap="round" opacity="0.55"/><line x1="672.4" y1="179.7" x2="685" y2="186" stroke="#8693ad" stroke-width="12.0" stroke-linecap="round" opacity="0.55"/><line x1="697.0" y1="190.0" x2="696.3" y2="196.8" stroke="#5f7396" stroke-width="9.0" stroke-linecap="round" opacity="0.8"/><line x1="696.3" y1="196.8" x2="695.3" y2="206.4" stroke="#5f7396" stroke-width="8.2" stroke-linecap="round" opacity="0.8"/><line x1="695.3" y1="206.4" x2="694.1" y2="217.4" stroke="#5f7396" stroke-width="7.5" stroke-linecap="round" opacity="0.8"/><line x1="694.1" y1="217.4" x2="692.6" y2="228.3" stroke="#5f7396" stroke-width="6.8" stroke-linecap="round" opacity="0.8"/><line x1="692.6" y1="228.3" x2="690.6" y2="239.9" stroke="#5f7396" stroke-width="6.0" stroke-linecap="round" opacity="0.8"/><line x1="690.6" y1="239.9" x2="688.2" y2="252.5" stroke="#5f7396" stroke-width="5.2" stroke-linecap="round" opacity="0.8"/><line x1="688.2" y1="252.5" x2="686.0" y2="264.0" stroke="#5f7396" stroke-width="4.5" stroke-linecap="round" opacity="0.8"/><line x1="686.0" y1="264.0" x2="684.4" y2="272" stroke="#5f7396" stroke-width="3.8" stroke-linecap="round" opacity="0.8"/><line x1="688.4" y1="290.7" x2="695.9" y2="287.9" stroke="#7f93b8" stroke-width="2.5" stroke-linecap="round" opacity="0.8"/><line x1="695.9" y1="287.9" x2="706.8" y2="283.8" stroke="#7f93b8" stroke-width="2.4" stroke-linecap="round" opacity="0.8"/><line x1="706.8" y1="283.8" x2="718.8" y2="279.3" stroke="#7f93b8" stroke-width="2.2" stroke-linecap="round" opacity="0.8"/><line x1="718.8" y1="279.3" x2="730.0" y2="275.0" stroke="#7f93b8" stroke-width="2.1" stroke-linecap="round" opacity="0.8"/><line x1="730.0" y1="275.0" x2="740.8" y2="270.6" stroke="#7f93b8" stroke-width="2.0" stroke-linecap="round" opacity="0.8"/><line x1="740.8" y1="270.6" x2="752.1" y2="266.0" stroke="#7f93b8" stroke-width="1.9" stroke-linecap="round" opacity="0.8"/><line x1="752.1" y1="266.0" x2="762.1" y2="261.9" stroke="#7f93b8" stroke-width="1.8" stroke-linecap="round" opacity="0.8"/><line x1="762.1" y1="261.9" x2="769" y2="259" stroke="#7f93b8" stroke-width="1.6" stroke-linecap="round" opacity="0.8"/>
<line x1="512.0" y1="210.0" x2="515.3" y2="221.3" stroke="#7b93bd" stroke-width="36.0" stroke-linecap="round" opacity="0.85"/><line x1="515.3" y1="221.3" x2="520.2" y2="237.6" stroke="#7b93bd" stroke-width="34.4" stroke-linecap="round" opacity="0.85"/><line x1="520.2" y1="237.6" x2="524.5" y2="255.6" stroke="#7b93bd" stroke-width="32.7" stroke-linecap="round" opacity="0.85"/><line x1="524.5" y1="255.6" x2="526.0" y2="272.0" stroke="#7b93bd" stroke-width="31.1" stroke-linecap="round" opacity="0.85"/><line x1="526.0" y1="272.0" x2="524.2" y2="286.2" stroke="#7b93bd" stroke-width="29.4" stroke-linecap="round" opacity="0.85"/><line x1="524.2" y1="286.2" x2="520.1" y2="299.8" stroke="#7b93bd" stroke-width="27.8" stroke-linecap="round" opacity="0.85"/><line x1="520.1" y1="299.8" x2="514.3" y2="313.2" stroke="#7b93bd" stroke-width="26.1" stroke-linecap="round" opacity="0.85"/><line x1="514.3" y1="313.2" x2="507.0" y2="326.7" stroke="#7b93bd" stroke-width="24.5" stroke-linecap="round" opacity="0.85"/><line x1="507.0" y1="326.7" x2="497.9" y2="340.5" stroke="#7b93bd" stroke-width="22.8" stroke-linecap="round" opacity="0.85"/><line x1="497.9" y1="340.5" x2="486.9" y2="354.5" stroke="#7b93bd" stroke-width="21.1" stroke-linecap="round" opacity="0.85"/><line x1="486.9" y1="354.5" x2="474.9" y2="368.2" stroke="#7b93bd" stroke-width="19.5" stroke-linecap="round" opacity="0.85"/><line x1="474.9" y1="368.2" x2="463.0" y2="381.0" stroke="#7b93bd" stroke-width="17.8" stroke-linecap="round" opacity="0.85"/><line x1="463.0" y1="381.0" x2="451.1" y2="393.1" stroke="#7b93bd" stroke-width="16.2" stroke-linecap="round" opacity="0.85"/><line x1="451.1" y1="393.1" x2="438.8" y2="404.7" stroke="#7b93bd" stroke-width="14.6" stroke-linecap="round" opacity="0.85"/><line x1="438.8" y1="404.7" x2="426.4" y2="415.4" stroke="#7b93bd" stroke-width="12.9" stroke-linecap="round" opacity="0.85"/><line x1="426.4" y1="415.4" x2="414.0" y2="425.0" stroke="#7b93bd" stroke-width="11.2" stroke-linecap="round" opacity="0.85"/><line x1="414.0" y1="425.0" x2="400.6" y2="433.6" stroke="#7b93bd" stroke-width="9.6" stroke-linecap="round" opacity="0.85"/><line x1="400.6" y1="433.6" x2="386.4" y2="441.2" stroke="#7b93bd" stroke-width="7.9" stroke-linecap="round" opacity="0.85"/><line x1="386.4" y1="441.2" x2="373.8" y2="447.5" stroke="#7b93bd" stroke-width="6.3" stroke-linecap="round" opacity="0.85"/><line x1="373.8" y1="447.5" x2="365" y2="452" stroke="#7b93bd" stroke-width="4.7" stroke-linecap="round" opacity="0.85"/><line x1="556.0" y1="240.0" x2="556.5" y2="253.5" stroke="#94a9d0" stroke-width="27.0" stroke-linecap="round" opacity="0.95"/><line x1="556.5" y1="253.5" x2="557.2" y2="272.7" stroke="#94a9d0" stroke-width="26.4" stroke-linecap="round" opacity="0.95"/><line x1="557.2" y1="272.7" x2="558.0" y2="294.6" stroke="#94a9d0" stroke-width="25.8" stroke-linecap="round" opacity="0.95"/><line x1="558.0" y1="294.6" x2="558.8" y2="315.7" stroke="#94a9d0" stroke-width="25.1" stroke-linecap="round" opacity="0.95"/><line x1="558.8" y1="315.7" x2="559.7" y2="336.3" stroke="#94a9d0" stroke-width="24.5" stroke-linecap="round" opacity="0.95"/><line x1="559.7" y1="336.3" x2="560.7" y2="357.7" stroke="#94a9d0" stroke-width="23.9" stroke-linecap="round" opacity="0.95"/><line x1="560.7" y1="357.7" x2="561.4" y2="378.6" stroke="#94a9d0" stroke-width="23.2" stroke-linecap="round" opacity="0.95"/><line x1="561.4" y1="378.6" x2="561.5" y2="397.7" stroke="#94a9d0" stroke-width="22.6" stroke-linecap="round" opacity="0.95"/><line x1="561.5" y1="397.7" x2="561.1" y2="414.4" stroke="#94a9d0" stroke-width="22.0" stroke-linecap="round" opacity="0.95"/><line x1="561.1" y1="414.4" x2="560.3" y2="429.5" stroke="#94a9d0" stroke-width="21.4" stroke-linecap="round" opacity="0.95"/><line x1="560.3" y1="429.5" x2="558.7" y2="443.7" stroke="#94a9d0" stroke-width="20.8" stroke-linecap="round" opacity="0.95"/><line x1="558.7" y1="443.7" x2="556.0" y2="457.8" stroke="#94a9d0" stroke-width="20.1" stroke-linecap="round" opacity="0.95"/><line x1="556.0" y1="457.8" x2="551.7" y2="472.1" stroke="#94a9d0" stroke-width="19.5" stroke-linecap="round" opacity="0.95"/><line x1="551.7" y1="472.1" x2="546.0" y2="486.1" stroke="#94a9d0" stroke-width="18.9" stroke-linecap="round" opacity="0.95"/><line x1="546.0" y1="486.1" x2="539.9" y2="499.7" stroke="#94a9d0" stroke-width="18.2" stroke-linecap="round" opacity="0.95"/><line x1="539.9" y1="499.7" x2="534.0" y2="512.4" stroke="#94a9d0" stroke-width="17.6" stroke-linecap="round" opacity="0.95"/><line x1="534.0" y1="512.4" x2="528.3" y2="524.8" stroke="#94a9d0" stroke-width="17.0" stroke-linecap="round" opacity="0.95"/><line x1="528.3" y1="524.8" x2="522.3" y2="536.8" stroke="#94a9d0" stroke-width="16.4" stroke-linecap="round" opacity="0.95"/><line x1="522.3" y1="536.8" x2="516.9" y2="547.5" stroke="#94a9d0" stroke-width="15.8" stroke-linecap="round" opacity="0.95"/><line x1="516.9" y1="547.5" x2="512.4" y2="556.0" stroke="#94a9d0" stroke-width="15.1" stroke-linecap="round" opacity="0.95"/><line x1="512.4" y1="556.0" x2="509.2" y2="561.7" stroke="#94a9d0" stroke-width="14.5" stroke-linecap="round" opacity="0.95"/><line x1="509.2" y1="561.7" x2="506.8" y2="565.2" stroke="#94a9d0" stroke-width="13.9" stroke-linecap="round" opacity="0.95"/><line x1="506.8" y1="565.2" x2="505.2" y2="567.4" stroke="#94a9d0" stroke-width="13.2" stroke-linecap="round" opacity="0.95"/><line x1="505.2" y1="567.4" x2="504" y2="569" stroke="#94a9d0" stroke-width="12.6" stroke-linecap="round" opacity="0.95"/><line x1="567.0" y1="223.0" x2="572.9" y2="235.9" stroke="#8ea5cc" stroke-width="24.0" stroke-linecap="round" opacity="0.9"/><line x1="572.9" y1="235.9" x2="581.4" y2="254.4" stroke="#8ea5cc" stroke-width="22.9" stroke-linecap="round" opacity="0.9"/><line x1="581.4" y1="254.4" x2="590.8" y2="275.0" stroke="#8ea5cc" stroke-width="21.8" stroke-linecap="round" opacity="0.9"/><line x1="590.8" y1="275.0" x2="599.8" y2="294.0" stroke="#8ea5cc" stroke-width="20.7" stroke-linecap="round" opacity="0.9"/><line x1="599.8" y1="294.0" x2="608.5" y2="310.9" stroke="#8ea5cc" stroke-width="19.6" stroke-linecap="round" opacity="0.9"/><line x1="608.5" y1="310.9" x2="617.5" y2="327.4" stroke="#8ea5cc" stroke-width="18.5" stroke-linecap="round" opacity="0.9"/><line x1="617.5" y1="327.4" x2="625.9" y2="343.6" stroke="#8ea5cc" stroke-width="17.4" stroke-linecap="round" opacity="0.9"/><line x1="625.9" y1="343.6" x2="632.5" y2="359.4" stroke="#8ea5cc" stroke-width="16.3" stroke-linecap="round" opacity="0.9"/><line x1="632.5" y1="359.4" x2="637.2" y2="375.1" stroke="#8ea5cc" stroke-width="15.2" stroke-linecap="round" opacity="0.9"/><line x1="637.2" y1="375.1" x2="640.6" y2="390.5" stroke="#8ea5cc" stroke-width="14.1" stroke-linecap="round" opacity="0.9"/><line x1="640.6" y1="390.5" x2="642.6" y2="405.4" stroke="#8ea5cc" stroke-width="13.0" stroke-linecap="round" opacity="0.9"/><line x1="642.6" y1="405.4" x2="643.5" y2="419.5" stroke="#8ea5cc" stroke-width="11.9" stroke-linecap="round" opacity="0.9"/><line x1="643.5" y1="419.5" x2="642.9" y2="433.0" stroke="#8ea5cc" stroke-width="10.8" stroke-linecap="round" opacity="0.9"/><line x1="642.9" y1="433.0" x2="640.8" y2="445.8" stroke="#8ea5cc" stroke-width="9.7" stroke-linecap="round" opacity="0.9"/><line x1="640.8" y1="445.8" x2="638.0" y2="457.8" stroke="#8ea5cc" stroke-width="8.6" stroke-linecap="round" opacity="0.9"/><line x1="638.0" y1="457.8" x2="635.3" y2="468.7" stroke="#8ea5cc" stroke-width="7.5" stroke-linecap="round" opacity="0.9"/><line x1="635.3" y1="468.7" x2="632.5" y2="478.8" stroke="#8ea5cc" stroke-width="6.4" stroke-linecap="round" opacity="0.9"/><line x1="632.5" y1="478.8" x2="629.3" y2="488.2" stroke="#8ea5cc" stroke-width="5.3" stroke-linecap="round" opacity="0.9"/><line x1="629.3" y1="488.2" x2="626.4" y2="496.0" stroke="#8ea5cc" stroke-width="4.2" stroke-linecap="round" opacity="0.9"/><line x1="626.4" y1="496.0" x2="624.4" y2="501.5" stroke="#8ea5cc" stroke-width="3.1" stroke-linecap="round" opacity="0.9"/><line x1="670.8" y1="310.0" x2="675.0" y2="316.8" stroke="#6f88b4" stroke-width="7.0" stroke-linecap="round" opacity="0.85"/><line x1="675.0" y1="316.8" x2="681.0" y2="326.5" stroke="#6f88b4" stroke-width="6.4" stroke-linecap="round" opacity="0.85"/><line x1="681.0" y1="326.5" x2="687.4" y2="337.6" stroke="#6f88b4" stroke-width="5.8" stroke-linecap="round" opacity="0.85"/><line x1="687.4" y1="337.6" x2="692.6" y2="348.5" stroke="#6f88b4" stroke-width="5.1" stroke-linecap="round" opacity="0.85"/><line x1="692.6" y1="348.5" x2="696.4" y2="360.1" stroke="#6f88b4" stroke-width="4.5" stroke-linecap="round" opacity="0.85"/><line x1="696.4" y1="360.1" x2="699.5" y2="372.8" stroke="#6f88b4" stroke-width="3.9" stroke-linecap="round" opacity="0.85"/><line x1="699.5" y1="372.8" x2="701.9" y2="384.2" stroke="#6f88b4" stroke-width="3.2" stroke-linecap="round" opacity="0.85"/><line x1="701.9" y1="384.2" x2="703.6" y2="392.2" stroke="#6f88b4" stroke-width="2.6" stroke-linecap="round" opacity="0.85"/><line x1="610.0" y1="225.0" x2="621.1" y2="240.3" stroke="#8ea3c8" stroke-width="22.0" stroke-linecap="round" opacity="0.9"/><line x1="621.1" y1="240.3" x2="637.0" y2="262.5" stroke="#8ea3c8" stroke-width="20.4" stroke-linecap="round" opacity="0.9"/><line x1="637.0" y1="262.5" x2="654.6" y2="285.9" stroke="#8ea3c8" stroke-width="18.8" stroke-linecap="round" opacity="0.9"/><line x1="654.6" y1="285.9" x2="670.8" y2="304.8" stroke="#8ea3c8" stroke-width="17.2" stroke-linecap="round" opacity="0.9"/><line x1="670.8" y1="304.8" x2="684.8" y2="317.6" stroke="#8ea3c8" stroke-width="15.7" stroke-linecap="round" opacity="0.9"/><line x1="684.8" y1="317.6" x2="698.1" y2="327.4" stroke="#8ea3c8" stroke-width="14.1" stroke-linecap="round" opacity="0.9"/><line x1="698.1" y1="327.4" x2="711.5" y2="335.4" stroke="#8ea3c8" stroke-width="12.5" stroke-linecap="round" opacity="0.9"/><line x1="711.5" y1="335.4" x2="725.4" y2="343.0" stroke="#8ea3c8" stroke-width="10.9" stroke-linecap="round" opacity="0.9"/><line x1="725.4" y1="343.0" x2="741.4" y2="350.7" stroke="#8ea3c8" stroke-width="9.3" stroke-linecap="round" opacity="0.9"/><line x1="741.4" y1="350.7" x2="758.9" y2="357.7" stroke="#8ea3c8" stroke-width="7.8" stroke-linecap="round" opacity="0.9"/><line x1="758.9" y1="357.7" x2="774.6" y2="363.5" stroke="#8ea3c8" stroke-width="6.2" stroke-linecap="round" opacity="0.9"/><line x1="774.6" y1="363.5" x2="785.5" y2="367.6" stroke="#8ea3c8" stroke-width="4.6" stroke-linecap="round" opacity="0.9"/><line x1="590.0" y1="175.0" x2="594.0" y2="179.9" stroke="#9aabcb" stroke-width="32.0" stroke-linecap="round" opacity="0.92"/><line x1="594.0" y1="179.9" x2="599.6" y2="186.7" stroke="#9aabcb" stroke-width="30.8" stroke-linecap="round" opacity="0.92"/><line x1="599.6" y1="186.7" x2="606.9" y2="195.5" stroke="#9aabcb" stroke-width="29.6" stroke-linecap="round" opacity="0.92"/><line x1="606.9" y1="195.5" x2="616.0" y2="206.5" stroke="#9aabcb" stroke-width="28.4" stroke-linecap="round" opacity="0.92"/><line x1="616.0" y1="206.5" x2="627.9" y2="221.0" stroke="#9aabcb" stroke-width="27.2" stroke-linecap="round" opacity="0.92"/><line x1="627.9" y1="221.0" x2="642.3" y2="238.5" stroke="#9aabcb" stroke-width="26.0" stroke-linecap="round" opacity="0.92"/><line x1="642.3" y1="238.5" x2="657.2" y2="256.4" stroke="#9aabcb" stroke-width="24.8" stroke-linecap="round" opacity="0.92"/><line x1="657.2" y1="256.4" x2="670.8" y2="272.0" stroke="#9aabcb" stroke-width="23.5" stroke-linecap="round" opacity="0.92"/><line x1="670.8" y1="272.0" x2="682.3" y2="284.7" stroke="#9aabcb" stroke-width="22.3" stroke-linecap="round" opacity="0.92"/><line x1="682.3" y1="284.7" x2="692.7" y2="295.9" stroke="#9aabcb" stroke-width="21.1" stroke-linecap="round" opacity="0.92"/><line x1="692.7" y1="295.9" x2="703.1" y2="306.1" stroke="#9aabcb" stroke-width="19.9" stroke-linecap="round" opacity="0.92"/><line x1="703.1" y1="306.1" x2="714.5" y2="315.7" stroke="#9aabcb" stroke-width="18.7" stroke-linecap="round" opacity="0.92"/><line x1="714.5" y1="315.7" x2="727.7" y2="324.8" stroke="#9aabcb" stroke-width="17.5" stroke-linecap="round" opacity="0.92"/><line x1="727.7" y1="324.8" x2="742.1" y2="333.1" stroke="#9aabcb" stroke-width="16.3" stroke-linecap="round" opacity="0.92"/><line x1="742.1" y1="333.1" x2="756.3" y2="340.9" stroke="#9aabcb" stroke-width="15.1" stroke-linecap="round" opacity="0.92"/><line x1="756.3" y1="340.9" x2="769.0" y2="348.5" stroke="#9aabcb" stroke-width="13.9" stroke-linecap="round" opacity="0.92"/><line x1="769.0" y1="348.5" x2="780.1" y2="355.8" stroke="#9aabcb" stroke-width="12.7" stroke-linecap="round" opacity="0.92"/><line x1="780.1" y1="355.8" x2="790.1" y2="362.7" stroke="#9aabcb" stroke-width="11.5" stroke-linecap="round" opacity="0.92"/><line x1="790.1" y1="362.7" x2="799.1" y2="369.3" stroke="#9aabcb" stroke-width="10.2" stroke-linecap="round" opacity="0.92"/><line x1="799.1" y1="369.3" x2="807.4" y2="375.8" stroke="#9aabcb" stroke-width="9.0" stroke-linecap="round" opacity="0.92"/><line x1="807.4" y1="375.8" x2="815.1" y2="382.7" stroke="#9aabcb" stroke-width="7.8" stroke-linecap="round" opacity="0.92"/><line x1="815.1" y1="382.7" x2="822.1" y2="389.8" stroke="#9aabcb" stroke-width="6.6" stroke-linecap="round" opacity="0.92"/><line x1="822.1" y1="389.8" x2="827.9" y2="396.0" stroke="#9aabcb" stroke-width="5.4" stroke-linecap="round" opacity="0.92"/><line x1="827.9" y1="396.0" x2="832" y2="400.4" stroke="#9aabcb" stroke-width="4.2" stroke-linecap="round" opacity="0.92"/>
<polygon points="82.0,410.0 75.8,416.2 67.3,424.9 60.7,432.8 57.6,438.4 56.4,443.2 56.7,448.6 58.5,454.9 61.7,461.9 66.0,469.7 71.9,480.0 78.8,491.1 84.4,498.7 87.0,501.0 88.3,499.8 91.0,496.0 96.4,488.6 103.2,478.6 110.8,469.7 118.8,463.2 127.6,457.8 137.0,453.9 146.9,451.7 157.4,450.9 169.0,451.0 182.8,452.6 197.8,455.2 211.0,456.5 220.9,455.6 229.1,453.4 237.5,451.0 246.7,449.0 256.2,446.7 266.5,443.3 278.4,438.5 291.2,432.5 303.4,424.8 316.8,412.4 329.6,398.2 335.0,390.5 329.2,394.6 316.0,405.2 300.0,415.0 282.2,421.7 261.7,427.6 240.0,432.0 216.7,434.6 192.2,435.7 170.0,436.0 151.4,435.9 135.0,435.0 120.0,432.0 105.0,425.2 91.4,416.4 82.0,410.0" fill="#5f7fb0" opacity="0.75"/>
</g>
<g filter="url(#b1t)"><polyline points="534.9,273.1 532.5,288.0 527.6,302.6 521.0,316.5 513.0,330.3 503.2,344.3 491.5,358.3 479.0,371.9 466.6,384.5 454.2,396.3 441.5,407.7 428.6,418.1 415.7,427.5 401.9,435.8 387.3,443.0 374.5,448.8 365.5,452.9" fill="none" stroke="#dbe5f4" stroke-width="3.4" stroke-dasharray="2.2 3.2" opacity="0.9"/><polyline points="597.1,272.0 605.8,291.1 614.1,308.0 622.7,324.6 631.0,341.2 637.4,357.6 641.9,373.9 645.1,389.7 646.8,405.0 647.3,419.5 646.4,433.4 643.9,446.4 640.7,458.4 637.6,469.3 634.5,479.4 630.9,488.8 627.7,496.5 625.3,501.8" fill="none" stroke="#dbe5f4" stroke-width="3" stroke-dasharray="2.2 3.2" opacity="0.9"/><polyline points="568.2,430.4 566.3,444.9 563.2,459.6 558.4,474.5 552.3,488.8 545.9,502.4 539.7,515.0 533.7,527.4 527.4,539.4 521.7,550.0 516.9,558.5 513.3,564.2 510.5,567.8 508.7,569.9 507.2,571.4" fill="none" stroke="#dbe5f4" stroke-width="2.6" stroke-dasharray="2.2 3.2" opacity="0.7"/><polyline points="636.2,243.6 651.4,261.3 665.4,276.8 677.3,289.3 688.1,300.4 699.0,310.6 711.1,320.2 724.9,329.3 739.7,337.4 754.1,344.8 766.8,352.0 778.0,358.9 788.2,365.4 797.3,371.6 805.8,377.8 813.6,384.3 820.8,391.0 826.9,396.9 831.3,401.1" fill="none" stroke="#dbe5f4" stroke-width="3" stroke-dasharray="2.2 3.2" opacity="0.8"/><polyline points="666.8,309.2 681.4,321.7 695.5,331.4 709.5,339.0 723.8,346.1 740.2,353.3 758.1,359.8 774.0,365.0 785.1,368.5" fill="none" stroke="#dbe5f4" stroke-width="2.6" stroke-dasharray="2.2 3.2" opacity="0.7"/></g>
<g filter="url(#b3t)"><polygon points="428.0,45.0 420.5,45.9 409.4,47.3 396.0,50.0 379.9,54.3 361.4,59.9 343.0,66.0 324.8,72.5 306.6,79.6 290.0,87.0 275.7,94.5 263.0,102.3 251.0,111.0 239.7,120.8 229.2,131.4 219.0,142.5 208.8,154.5 199.0,167.0 190.0,179.0 182.4,189.7 175.7,199.9 169.0,211.0 161.8,224.0 154.6,237.8 148.0,251.0 142.1,263.4 136.8,275.2 132.0,285.0 128.1,291.1 124.8,295.2 121.0,301.0 116.3,310.4 111.1,321.4 105.5,332.5 99.3,343.4 92.8,354.3 87.0,364.0 81.9,371.7 77.6,378.2 75.0,385.0 75.2,393.2 77.1,401.7 79.0,409.0 79.5,414.0 79.9,417.7 82.0,422.0 86.2,428.1 92.0,434.7 100.0,440.0 111.1,443.0 124.3,444.7 137.0,446.0 147.7,446.9 157.8,447.3 169.0,448.0 182.8,449.4 197.8,451.1 211.0,452.0 220.9,451.7 229.1,450.6 237.5,449.0 246.7,447.0 256.2,444.5 266.5,441.0 278.4,436.9 291.2,431.8 303.4,424.8 314.9,414.9 325.8,403.0 335.0,390.5 341.9,377.1 347.1,363.2 351.0,351.0 352.8,341.2 353.3,333.2 355.0,327.0 358.2,324.2 362.6,323.2 369.4,319.3 379.5,309.8 392.1,297.4 406.0,285.0 421.9,273.9 439.1,262.8 454.0,251.0 465.1,237.4 473.8,223.1 481.0,211.0 485.9,203.3 489.2,197.7 494.0,190.0 502.1,178.1 511.7,164.0 520.0,150.0 526.4,136.5 531.7,123.0 535.0,110.0 536.5,97.3 536.1,85.0 533.0,74.0 526.1,64.6 516.6,56.5 507.0,50.0 498.4,45.1 489.7,41.8 481.0,39.6 472.0,38.6 463.0,38.8 454.0,39.6 444.3,41.2 434.7,43.4 428.0,45.0" fill="url(#mgt)"/></g>
<g clip-path="url(#mct)">
<ellipse cx="430" cy="150" rx="75" ry="110" fill="#e4eaf0" opacity="0.85" filter="url(#b20t)" transform="rotate(35 430 150)"/>
<ellipse cx="250" cy="240" rx="50" ry="150" fill="#9dbbe0" opacity="0.7" filter="url(#b20t)" transform="rotate(40 250 240)"/>
<rect x="60" y="30" width="480" height="440" fill="url(#dotst)"/>
<ellipse cx="245" cy="238" rx="12" ry="46" fill="#79e2c6" opacity="0.22" filter="url(#b3t)" transform="rotate(40 245 238)"/>
<ellipse cx="315" cy="290" rx="38" ry="22" fill="#f0c9c0" opacity="0.8" filter="url(#b8t)"/>
<ellipse cx="180" cy="400" rx="90" ry="25" fill="#c9b0a8" opacity="0.55" filter="url(#b8t)" transform="rotate(-12 180 400)"/>
<polygon points="75,421 152,410 234,394 294,367 337.6,339 354,316 372,330 350,395 300,440 206,462 80,436" fill="#0b1730" opacity="0.6" filter="url(#b8t)"/>
</g>
<g filter="url(#b3t)">
<ellipse cx="516" cy="80" rx="12" ry="21" fill="#262322" opacity="0.9" transform="rotate(-30 516 80)"/>
<ellipse cx="524" cy="120" rx="14" ry="18" fill="#4a2526" opacity="0.8"/>
<ellipse cx="490" cy="78" rx="14" ry="8" fill="#eef0f0" opacity="0.8" transform="rotate(35 490 78)"/>
</g>
<g filter="url(#b1t)"><path d="M78,372 l5,-8 l4,6 l-3,10 l4,8 l-6,6 Z" fill="#e8e2c8" opacity="0.85"/><path d="M82,422 C110,416 150,408 200,398 C230,392 250,390 262,392" fill="none" stroke="#d9c9b8" stroke-width="3" stroke-dasharray="5 3" opacity="0.7"/><path d="M56,448 C50,460 60,480 84,498" fill="none" stroke="#9fc0ee" stroke-width="1.6" opacity="0.8"/><path d="M697,186 L701,190 L694,236 L686,272" fill="none" stroke="#8fb6ee" stroke-width="1.6" opacity="0.9"/></g></svg></svg>
<svg class="a" style="left:637.4px;top:86.0px;" width="19.2" height="19.2" viewBox="0 0 19.2 19.2"><g transform="translate(9.6,9.6) scale(0.9156626506024095)"><circle cx="0" cy="0" r="7.7" fill="none" stroke="#31363b" stroke-width="1.55"/>
<path d="M-5.2,-0.6 C-4.2,-1.4 -2.6,-0.6 -1.2,0.4 C0.4,1.2 0.6,2.2 -0.6,3.2 C-1.4,4.4 -1.6,6 -2.6,7 C-3.4,6.4 -3.4,4.8 -4,3.6 C-4.8,2.6 -5.6,1.2 -5.2,-0.6 Z" fill="#31363b"/>
<path d="M3,-5.6 C4.4,-5.8 5.4,-4.4 6.8,-2.6 C7.8,0.4 7.2,3.4 5.6,5.4 C5.8,3.6 5.6,2 4.6,1 C3.2,0.8 2,0 2,-1.2 C2.2,-2.4 3.4,-2.6 3.2,-3.6 C2.6,-4.4 2.4,-5 3,-5.6 Z" fill="#31363b"/>
<path d="M-5.8,-4.6 C-4.4,-6.4 -2.4,-7.4 -0.4,-7.4 L-1.2,-6 C-2.8,-5.6 -4.4,-4.6 -5.8,-3.4 Z" fill="#31363b"/></g></svg>
<svg class="a" style="left:827.7px;top:86.0px;" width="19.2" height="19.2" viewBox="0 0 19.2 19.2"><g transform="translate(9.6,9.6) scale(0.9156626506024095)"><circle cx="0" cy="0" r="7.7" fill="none" stroke="#31363b" stroke-width="1.55"/>
<path d="M-5.2,-0.6 C-4.2,-1.4 -2.6,-0.6 -1.2,0.4 C0.4,1.2 0.6,2.2 -0.6,3.2 C-1.4,4.4 -1.6,6 -2.6,7 C-3.4,6.4 -3.4,4.8 -4,3.6 C-4.8,2.6 -5.6,1.2 -5.2,-0.6 Z" fill="#31363b"/>
<path d="M3,-5.6 C4.4,-5.8 5.4,-4.4 6.8,-2.6 C7.8,0.4 7.2,3.4 5.6,5.4 C5.8,3.6 5.6,2 4.6,1 C3.2,0.8 2,0 2,-1.2 C2.2,-2.4 3.4,-2.6 3.2,-3.6 C2.6,-4.4 2.4,-5 3,-5.6 Z" fill="#31363b"/>
<path d="M-5.8,-4.6 C-4.4,-6.4 -2.4,-7.4 -0.4,-7.4 L-1.2,-6 C-2.8,-5.6 -4.4,-4.6 -5.8,-3.4 Z" fill="#31363b"/></g></svg>
<svg class="a" style="left:1018.0px;top:86.0px;" width="19.2" height="19.2" viewBox="0 0 19.2 19.2"><g transform="translate(9.6,9.6) scale(0.9156626506024095)"><circle cx="0" cy="0" r="7.7" fill="none" stroke="#31363b" stroke-width="1.55"/>
<path d="M-5.2,-0.6 C-4.2,-1.4 -2.6,-0.6 -1.2,0.4 C0.4,1.2 0.6,2.2 -0.6,3.2 C-1.4,4.4 -1.6,6 -2.6,7 C-3.4,6.4 -3.4,4.8 -4,3.6 C-4.8,2.6 -5.6,1.2 -5.2,-0.6 Z" fill="#31363b"/>
<path d="M3,-5.6 C4.4,-5.8 5.4,-4.4 6.8,-2.6 C7.8,0.4 7.2,3.4 5.6,5.4 C5.8,3.6 5.6,2 4.6,1 C3.2,0.8 2,0 2,-1.2 C2.2,-2.4 3.4,-2.6 3.2,-3.6 C2.6,-4.4 2.4,-5 3,-5.6 Z" fill="#31363b"/>
<path d="M-5.8,-4.6 C-4.4,-6.4 -2.4,-7.4 -0.4,-7.4 L-1.2,-6 C-2.8,-5.6 -4.4,-4.6 -5.8,-3.4 Z" fill="#31363b"/></g></svg>
<svg class="a" style="left:1208.3px;top:86.0px;" width="19.2" height="19.2" viewBox="0 0 19.2 19.2"><g transform="translate(9.6,9.6) scale(0.9156626506024095)"><circle cx="0" cy="0" r="7.7" fill="none" stroke="#31363b" stroke-width="1.55"/>
<path d="M-5.2,-0.6 C-4.2,-1.4 -2.6,-0.6 -1.2,0.4 C0.4,1.2 0.6,2.2 -0.6,3.2 C-1.4,4.4 -1.6,6 -2.6,7 C-3.4,6.4 -3.4,4.8 -4,3.6 C-4.8,2.6 -5.6,1.2 -5.2,-0.6 Z" fill="#31363b"/>
<path d="M3,-5.6 C4.4,-5.8 5.4,-4.4 6.8,-2.6 C7.8,0.4 7.2,3.4 5.6,5.4 C5.8,3.6 5.6,2 4.6,1 C3.2,0.8 2,0 2,-1.2 C2.2,-2.4 3.4,-2.6 3.2,-3.6 C2.6,-4.4 2.4,-5 3,-5.6 Z" fill="#31363b"/>
<path d="M-5.8,-4.6 C-4.4,-6.4 -2.4,-7.4 -0.4,-7.4 L-1.2,-6 C-2.8,-5.6 -4.4,-4.6 -5.8,-3.4 Z" fill="#31363b"/></g></svg>
<div class="a" style="left:1398.1999999999998px;top:85.6px;width:20px;height:20px;border-radius:50%;background:#b0d6ee;border:1px solid #8cc6ea;box-sizing:border-box;"></div>
<svg class="a" style="left:1398.6px;top:86.0px;" width="19.2" height="19.2" viewBox="0 0 19.2 19.2"><g transform="translate(9.6,9.6) scale(0.9156626506024095)"><circle cx="0" cy="0" r="7.7" fill="none" stroke="#31363b" stroke-width="1.55"/>
<path d="M-5.2,-0.6 C-4.2,-1.4 -2.6,-0.6 -1.2,0.4 C0.4,1.2 0.6,2.2 -0.6,3.2 C-1.4,4.4 -1.6,6 -2.6,7 C-3.4,6.4 -3.4,4.8 -4,3.6 C-4.8,2.6 -5.6,1.2 -5.2,-0.6 Z" fill="#31363b"/>
<path d="M3,-5.6 C4.4,-5.8 5.4,-4.4 6.8,-2.6 C7.8,0.4 7.2,3.4 5.6,5.4 C5.8,3.6 5.6,2 4.6,1 C3.2,0.8 2,0 2,-1.2 C2.2,-2.4 3.4,-2.6 3.2,-3.6 C2.6,-4.4 2.4,-5 3,-5.6 Z" fill="#31363b"/>
<path d="M-5.8,-4.6 C-4.4,-6.4 -2.4,-7.4 -0.4,-7.4 L-1.2,-6 C-2.8,-5.6 -4.4,-4.6 -5.8,-3.4 Z" fill="#31363b"/></g></svg>
<div class="a" style="left:590px;top:265.4px;width:836.5px;height:1px;background:#c4c6c8;"></div>
<div class="a" style="left:590px;top:266.4px;width:836.5px;height:12.6px;background:#f0f0f1;"></div>
<div class="a" style="left:590px;top:278.6px;width:836.5px;height:1px;background:#d6d7d8;"></div>
<div class="a" style="left:590.5px;top:266.4px;width:14.5px;height:12.6px;box-sizing:border-box;border:1px solid #c4c6c8;background:#fcfcfc;"></div>
<svg class="a" style="left:594.5px;top:268.7px;" width="6" height="8" viewBox="0 0 6 8"><path d="M5.2,0.4 L5.2,7.6 L0.6,4 Z" fill="#5e6265"/></svg>
<div class="a" style="left:1410.5px;top:266.4px;width:15.5px;height:12.6px;box-sizing:border-box;border:1px solid #c4c6c8;background:#fcfcfc;"></div>
<svg class="a" style="left:1415.5px;top:268.7px;" width="6" height="8" viewBox="0 0 6 8"><path d="M0.8,0.4 L0.8,7.6 L5.4,4 Z" fill="#5e6265"/></svg>
<div class="a" style="left:1021px;top:266.4px;width:28.5px;height:12.6px;box-sizing:border-box;border-left:1px solid #c4c6c8;border-right:1px solid #c4c6c8;background:#ffffff;"></div>
<div class="a" style="left:572.6px;top:170.5px;width:1px;height:1px;background:#c2c4c6;"></div>
<div class="a" style="left:575px;top:170.5px;width:1px;height:1px;background:#c2c4c6;"></div>
<div class="a" style="left:572.6px;top:172.5px;width:1px;height:1px;background:#c2c4c6;"></div>
<div class="a" style="left:575px;top:172.5px;width:1px;height:1px;background:#c2c4c6;"></div>
<div class="a" style="left:572.6px;top:174.5px;width:1px;height:1px;background:#c2c4c6;"></div>
<div class="a" style="left:575px;top:174.5px;width:1px;height:1px;background:#c2c4c6;"></div>
<div class="a" style="left:572.6px;top:176.5px;width:1px;height:1px;background:#c2c4c6;"></div>
<div class="a" style="left:575px;top:176.5px;width:1px;height:1px;background:#c2c4c6;"></div>
<div class="a" style="left:572.6px;top:178.5px;width:1px;height:1px;background:#c2c4c6;"></div>
<div class="a" style="left:575px;top:178.5px;width:1px;height:1px;background:#c2c4c6;"></div>
<div class="a" style="left:572.6px;top:180.5px;width:1px;height:1px;background:#c2c4c6;"></div>
<div class="a" style="left:575px;top:180.5px;width:1px;height:1px;background:#c2c4c6;"></div>
<div class="a" style="left:572.6px;top:182.5px;width:1px;height:1px;background:#c2c4c6;"></div>
<div class="a" style="left:575px;top:182.5px;width:1px;height:1px;background:#c2c4c6;"></div>
<div class="a" style="left:572.6px;top:184.5px;width:1px;height:1px;background:#c2c4c6;"></div>
<div class="a" style="left:575px;top:184.5px;width:1px;height:1px;background:#c2c4c6;"></div>
<div class="a" style="left:572.6px;top:186.5px;width:1px;height:1px;background:#c2c4c6;"></div>
<div class="a" style="left:575px;top:186.5px;width:1px;height:1px;background:#c2c4c6;"></div>
<div class="a" style="left:992px;top:283.2px;width:1px;height:1px;background:#c6c8ca;"></div>
<div class="a" style="left:994.2px;top:283.2px;width:1px;height:1px;background:#c6c8ca;"></div>
<div class="a" style="left:996.4px;top:283.2px;width:1px;height:1px;background:#c6c8ca;"></div>
<div class="a" style="left:998.6px;top:283.2px;width:1px;height:1px;background:#c6c8ca;"></div>
<div class="a" style="left:1000.8px;top:283.2px;width:1px;height:1px;background:#c6c8ca;"></div>
<div class="a" style="left:1003px;top:283.2px;width:1px;height:1px;background:#c6c8ca;"></div>
<div class="a" style="left:1005.2px;top:283.2px;width:1px;height:1px;background:#c6c8ca;"></div>
<div class="a" style="left:571px;top:287px;width:856.5px;height:740px;box-sizing:border-box;border:1px solid #bcbec0;border-right:none;border-bottom:none;background:#fcfcfc;"></div>
<div class="a" style="left:575px;top:291.2px;width:32.8px;height:32.6px;background:linear-gradient(#b0b0b0,#d0d0d0);"></div>
<div class="a" style="left:609.2px;top:291.2px;width:32.6px;height:32.6px;background:linear-gradient(#b0b0b0,#d0d0d0);"></div>
<div class="a" style="left:643.2px;top:291.2px;width:31.6px;height:32.6px;background:linear-gradient(#b0b0b0,#d0d0d0);"></div>
<div class="a" style="left:676.2px;top:291.2px;width:32.6px;height:32.6px;background:linear-gradient(#b0b0b0,#d0d0d0);"></div>
<div class="a" style="left:710px;top:291.2px;width:32.8px;height:32.6px;background:linear-gradient(#b0b0b0,#d0d0d0);"></div>
<div class="a" style="left:744.2px;top:291.2px;width:31.7px;height:32.6px;background:linear-gradient(#b0b0b0,#d0d0d0);"></div>
<div class="a" style="left:777px;top:291.2px;width:32.8px;height:32.6px;background:linear-gradient(#b0b0b0,#d0d0d0);"></div>
<svg class="a" style="left:575px;top:291.2px;" width="33" height="33" viewBox="0 0 33 33"><path d="M20.5,8.5 L12,16.5 L20.5,24.5" fill="none" stroke="#2c3034" stroke-width="1.2"/></svg>
<svg class="a" style="left:609.2px;top:291.2px;" width="33" height="33" viewBox="0 0 33 33"><path d="M12,8.5 L20.5,16.5 L12,24.5" fill="none" stroke="#2c3034" stroke-width="1.2"/></svg>
<svg class="a" style="left:643.2px;top:291.2px;" width="32" height="33" viewBox="0 0 32 33"><rect x="-3.4" y="-3.4" width="6.8" height="6.8" fill="none" stroke="#2c3034" stroke-width="1.2" transform="translate(11.5,19) rotate(45)"/><circle cx="19" cy="17" r="5.4" fill="none" stroke="#2c3034" stroke-width="1" stroke-dasharray="1.2 1.8"/><path d="M14,10.5 H21 M16.8,7.8 L14,10.5 L16.8,13.2" fill="none" stroke="#2c3034" stroke-width="1.1"/></svg>
<svg class="a" style="left:676.2px;top:291.2px;" width="33" height="33" viewBox="0 0 33 33"><rect x="-3.4" y="-3.4" width="6.8" height="6.8" fill="none" stroke="#2c3034" stroke-width="1.2" transform="translate(20.5,19.5) rotate(45)"/><circle cx="12.5" cy="17" r="5.4" fill="none" stroke="#2c3034" stroke-width="1" stroke-dasharray="1.2 1.8"/><path d="M11,10.5 H18 M15.2,7.8 L18,10.5 L15.2,13.2" fill="none" stroke="#2c3034" stroke-width="1.1"/></svg>
<svg class="a" style="left:710px;top:291.2px;" width="33" height="33" viewBox="0 0 33 33"><circle cx="16" cy="12.2" r="3.8" fill="none" stroke="#2c3034" stroke-width="1.2"/><path d="M7.6,24.4 C8.6,16.4 23.4,16.4 24.4,24.4" fill="none" stroke="#2c3034" stroke-width="1.2"/></svg>
<svg class="a" style="left:744.2px;top:291.2px;" width="32" height="33" viewBox="0 0 32 33"><circle cx="15.6" cy="11" r="3" fill="#2c3034"/><path d="M16,24 H10.6 V20.6 C10.6,17 20.4,17 20.4,20" fill="none" stroke="#2c3034" stroke-width="1.2"/><path d="M18.6,22.4 H24 M21.3,19.7 V25.1" stroke="#2c3034" stroke-width="1.2"/></svg>
<svg class="a" style="left:777px;top:291.2px;" width="33" height="33" viewBox="0 0 33 33"><path d="M8,8.2 L24.6,16.3 L8,24.6 Z" fill="#2c3034"/></svg>
<div class="a" style="left:1276.6px;top:293px;width:144.4px;height:17.8px;box-sizing:border-box;border:1.2px solid #1c1f21;border-radius:9px;background:#eff0f1;"></div>
<div class="t" style="left:1280.50px;top:292.00px;font-size:13px;line-height:17.000px;letter-spacing:0.310px;color:#232629;text-shadow:0.6px 0.6px 0.8px rgba(0,0,0,0.45);">Reduced Size Preview</div>
<svg class="a" style="left:572px;top:372px;" width="855" height="570" viewBox="0 0 855 570"><svg x="0" y="0" width="855" height="570" viewBox="0 0 855 569" preserveAspectRatio="none">
<defs>
<filter id="b1m" x="-10%" y="-10%" width="120%" height="120%"><feGaussianBlur stdDeviation="0.9"/></filter>
<filter id="b3m" x="-10%" y="-10%" width="120%" height="120%"><feGaussianBlur stdDeviation="3"/></filter>
<filter id="b8m" x="-20%" y="-20%" width="140%" height="140%"><feGaussianBlur stdDeviation="8"/></filter>
<filter id="b20m" x="-30%" y="-30%" width="160%" height="160%"><feGaussianBlur stdDeviation="20"/></filter>
<linearGradient id="mgm" x1="0.1" y1="0.9" x2="0.9" y2="0.1"><stop offset="0" stop-color="#8fb2de"/><stop offset="0.45" stop-color="#aac6e6"/><stop offset="0.8" stop-color="#c9d9ea"/><stop offset="1" stop-color="#b9c9dc"/></linearGradient>
<linearGradient id="cgrm" gradientUnits="userSpaceOnUse" x1="515" y1="120" x2="700" y2="240"><stop offset="0" stop-color="#cdd6e5"/><stop offset="0.4" stop-color="#8e9ab4"/><stop offset="1" stop-color="#5d6a86"/></linearGradient>
<pattern id="dotsm" width="17" height="15" patternUnits="userSpaceOnUse" patternTransform="rotate(28)"><circle cx="3" cy="4" r="1" fill="#3a2a30" opacity="0.75"/><circle cx="11.5" cy="11" r="0.9" fill="#5a3030" opacity="0.7"/></pattern>
<pattern id="starsm" width="97" height="83" patternUnits="userSpaceOnUse"><circle cx="12" cy="20" r="0.8" fill="#8c8a70" opacity="0.7"/><circle cx="60" cy="9" r="0.6" fill="#7a8a9a" opacity="0.6"/><circle cx="80" cy="55" r="0.9" fill="#9a8a60" opacity="0.6"/><circle cx="35" cy="66" r="0.6" fill="#6a7a8a" opacity="0.6"/></pattern>
<clipPath id="mcm"><polygon points="428.0,45.0 420.5,45.9 409.4,47.3 396.0,50.0 379.9,54.3 361.4,59.9 343.0,66.0 324.8,72.5 306.6,79.6 290.0,87.0 275.7,94.5 263.0,102.3 251.0,111.0 239.7,120.8 229.2,131.4 219.0,142.5 208.8,154.5 199.0,167.0 190.0,179.0 182.4,189.7 175.7,199.9 169.0,211.0 161.8,224.0 154.6,237.8 148.0,251.0 142.1,263.4 136.8,275.2 132.0,285.0 128.1,291.1 124.8,295.2 121.0,301.0 116.3,310.4 111.1,321.4 105.5,332.5 99.3,343.4 92.8,354.3 87.0,364.0 81.9,371.7 77.6,378.2 75.0,385.0 75.2,393.2 77.1,401.7 79.0,409.0 79.5,414.0 79.9,417.7 82.0,422.0 86.2,428.1 92.0,434.7 100.0,440.0 111.1,443.0 124.3,444.7 137.0,446.0 147.7,446.9 157.8,447.3 169.0,448.0 182.8,449.4 197.8,451.1 211.0,452.0 220.9,451.7 229.1,450.6 237.5,449.0 246.7,447.0 256.2,444.5 266.5,441.0 278.4,436.9 291.2,431.8 303.4,424.8 314.9,414.9 325.8,403.0 335.0,390.5 341.9,377.1 347.1,363.2 351.0,351.0 352.8,341.2 353.3,333.2 355.0,327.0 358.2,324.2 362.6,323.2 369.4,319.3 379.5,309.8 392.1,297.4 406.0,285.0 421.9,273.9 439.1,262.8 454.0,251.0 465.1,237.4 473.8,223.1 481.0,211.0 485.9,203.3 489.2,197.7 494.0,190.0 502.1,178.1 511.7,164.0 520.0,150.0 526.4,136.5 531.7,123.0 535.0,110.0 536.5,97.3 536.1,85.0 533.0,74.0 526.1,64.6 516.6,56.5 507.0,50.0 498.4,45.1 489.7,41.8 481.0,39.6 472.0,38.6 463.0,38.8 454.0,39.6 444.3,41.2 434.7,43.4 428.0,45.0"/></clipPath>
</defs>
<rect width="855" height="569" fill="#020409"/><rect width="855" height="569" fill="url(#starsm)"/>
<g filter="url(#b3m)">
<polygon points="520.0,60.0 545.0,90.0 617.0,143.0 697.0,184.0 700.0,192.0 692.0,232.0 655.0,236.0 625.0,262.0 590.0,250.0 565.0,262.0 535.0,245.0 508.0,205.0 500.0,170.0 515.0,120.0" fill="url(#cgrm)" opacity="0.85"/>
<line x1="555.0" y1="105.0" x2="565.8" y2="113.3" stroke="#8693ad" stroke-width="26.0" stroke-linecap="round" opacity="0.55"/><line x1="565.8" y1="113.3" x2="581.2" y2="125.2" stroke="#8693ad" stroke-width="24.0" stroke-linecap="round" opacity="0.55"/><line x1="581.2" y1="125.2" x2="598.8" y2="138.3" stroke="#8693ad" stroke-width="22.0" stroke-linecap="round" opacity="0.55"/><line x1="598.8" y1="138.3" x2="616.0" y2="150.0" stroke="#8693ad" stroke-width="20.0" stroke-linecap="round" opacity="0.55"/><line x1="616.0" y1="150.0" x2="634.3" y2="160.5" stroke="#8693ad" stroke-width="18.0" stroke-linecap="round" opacity="0.55"/><line x1="634.3" y1="160.5" x2="654.3" y2="170.8" stroke="#8693ad" stroke-width="16.0" stroke-linecap="round" opacity="0.55"/><line x1="654.3" y1="170.8" x2="672.4" y2="179.7" stroke="#8693ad" stroke-width="14.0" stroke-linecap="round" opacity="0.55"/><line x1="672.4" y1="179.7" x2="685" y2="186" stroke="#8693ad" stroke-width="12.0" stroke-linecap="round" opacity="0.55"/><line x1="697.0" y1="190.0" x2="696.3" y2="196.8" stroke="#5f7396" stroke-width="9.0" stroke-linecap="round" opacity="0.8"/><line x1="696.3" y1="196.8" x2="695.3" y2="206.4" stroke="#5f7396" stroke-width="8.2" stroke-linecap="round" opacity="0.8"/><line x1="695.3" y1="206.4" x2="694.1" y2="217.4" stroke="#5f7396" stroke-width="7.5" stroke-linecap="round" opacity="0.8"/><line x1="694.1" y1="217.4" x2="692.6" y2="228.3" stroke="#5f7396" stroke-width="6.8" stroke-linecap="round" opacity="0.8"/><line x1="692.6" y1="228.3" x2="690.6" y2="239.9" stroke="#5f7396" stroke-width="6.0" stroke-linecap="round" opacity="0.8"/><line x1="690.6" y1="239.9" x2="688.2" y2="252.5" stroke="#5f7396" stroke-width="5.2" stroke-linecap="round" opacity="0.8"/><line x1="688.2" y1="252.5" x2="686.0" y2="264.0" stroke="#5f7396" stroke-width="4.5" stroke-linecap="round" opacity="0.8"/><line x1="686.0" y1="264.0" x2="684.4" y2="272" stroke="#5f7396" stroke-width="3.8" stroke-linecap="round" opacity="0.8"/><line x1="688.4" y1="290.7" x2="695.9" y2="287.9" stroke="#7f93b8" stroke-width="2.5" stroke-linecap="round" opacity="0.8"/><line x1="695.9" y1="287.9" x2="706.8" y2="283.8" stroke="#7f93b8" stroke-width="2.4" stroke-linecap="round" opacity="0.8"/><line x1="706.8" y1="283.8" x2="718.8" y2="279.3" stroke="#7f93b8" stroke-width="2.2" stroke-linecap="round" opacity="0.8"/><line x1="718.8" y1="279.3" x2="730.0" y2="275.0" stroke="#7f93b8" stroke-width="2.1" stroke-linecap="round" opacity="0.8"/><line x1="730.0" y1="275.0" x2="740.8" y2="270.6" stroke="#7f93b8" stroke-width="2.0" stroke-linecap="round" opacity="0.8"/><line x1="740.8" y1="270.6" x2="752.1" y2="266.0" stroke="#7f93b8" stroke-width="1.9" stroke-linecap="round" opacity="0.8"/><line x1="752.1" y1="266.0" x2="762.1" y2="261.9" stroke="#7f93b8" stroke-width="1.8" stroke-linecap="round" opacity="0.8"/><line x1="762.1" y1="261.9" x2="769" y2="259" stroke="#7f93b8" stroke-width="1.6" stroke-linecap="round" opacity="0.8"/>
<line x1="512.0" y1="210.0" x2="515.3" y2="221.3" stroke="#7b93bd" stroke-width="36.0" stroke-linecap="round" opacity="0.85"/><line x1="515.3" y1="221.3" x2="520.2" y2="237.6" stroke="#7b93bd" stroke-width="34.4" stroke-linecap="round" opacity="0.85"/><line x1="520.2" y1="237.6" x2="524.5" y2="255.6" stroke="#7b93bd" stroke-width="32.7" stroke-linecap="round" opacity="0.85"/><line x1="524.5" y1="255.6" x2="526.0" y2="272.0" stroke="#7b93bd" stroke-width="31.1" stroke-linecap="round" opacity="0.85"/><line x1="526.0" y1="272.0" x2="524.2" y2="286.2" stroke="#7b93bd" stroke-width="29.4" stroke-linecap="round" opacity="0.85"/><line x1="524.2" y1="286.2" x2="520.1" y2="299.8" stroke="#7b93bd" stroke-width="27.8" stroke-linecap="round" opacity="0.85"/><line x1="520.1" y1="299.8" x2="514.3" y2="313.2" stroke="#7b93bd" stroke-width="26.1" stroke-linecap="round" opacity="0.85"/><line x1="514.3" y1="313.2" x2="507.0" y2="326.7" stroke="#7b93bd" stroke-width="24.5" stroke-linecap="round" opacity="0.85"/><line x1="507.0" y1="326.7" x2="497.9" y2="340.5" stroke="#7b93bd" stroke-width="22.8" stroke-linecap="round" opacity="0.85"/><line x1="497.9" y1="340.5" x2="486.9" y2="354.5" stroke="#7b93bd" stroke-width="21.1" stroke-linecap="round" opacity="0.85"/><line x1="486.9" y1="354.5" x2="474.9" y2="368.2" stroke="#7b93bd" stroke-width="19.5" stroke-linecap="round" opacity="0.85"/><line x1="474.9" y1="368.2" x2="463.0" y2="381.0" stroke="#7b93bd" stroke-width="17.8" stroke-linecap="round" opacity="0.85"/><line x1="463.0" y1="381.0" x2="451.1" y2="393.1" stroke="#7b93bd" stroke-width="16.2" stroke-linecap="round" opacity="0.85"/><line x1="451.1" y1="393.1" x2="438.8" y2="404.7" stroke="#7b93bd" stroke-width="14.6" stroke-linecap="round" opacity="0.85"/><line x1="438.8" y1="404.7" x2="426.4" y2="415.4" stroke="#7b93bd" stroke-width="12.9" stroke-linecap="round" opacity="0.85"/><line x1="426.4" y1="415.4" x2="414.0" y2="425.0" stroke="#7b93bd" stroke-width="11.2" stroke-linecap="round" opacity="0.85"/><line x1="414.0" y1="425.0" x2="400.6" y2="433.6" stroke="#7b93bd" stroke-width="9.6" stroke-linecap="round" opacity="0.85"/><line x1="400.6" y1="433.6" x2="386.4" y2="441.2" stroke="#7b93bd" stroke-width="7.9" stroke-linecap="round" opacity="0.85"/><line x1="386.4" y1="441.2" x2="373.8" y2="447.5" stroke="#7b93bd" stroke-width="6.3" stroke-linecap="round" opacity="0.85"/><line x1="373.8" y1="447.5" x2="365" y2="452" stroke="#7b93bd" stroke-width="4.7" stroke-linecap="round" opacity="0.85"/><line x1="556.0" y1="240.0" x2="556.5" y2="253.5" stroke="#94a9d0" stroke-width="27.0" stroke-linecap="round" opacity="0.95"/><line x1="556.5" y1="253.5" x2="557.2" y2="272.7" stroke="#94a9d0" stroke-width="26.4" stroke-linecap="round" opacity="0.95"/><line x1="557.2" y1="272.7" x2="558.0" y2="294.6" stroke="#94a9d0" stroke-width="25.8" stroke-linecap="round" opacity="0.95"/><line x1="558.0" y1="294.6" x2="558.8" y2="315.7" stroke="#94a9d0" stroke-width="25.1" stroke-linecap="round" opacity="0.95"/><line x1="558.8" y1="315.7" x2="559.7" y2="336.3" stroke="#94a9d0" stroke-width="24.5" stroke-linecap="round" opacity="0.95"/><line x1="559.7" y1="336.3" x2="560.7" y2="357.7" stroke="#94a9d0" stroke-width="23.9" stroke-linecap="round" opacity="0.95"/><line x1="560.7" y1="357.7" x2="561.4" y2="378.6" stroke="#94a9d0" stroke-width="23.2" stroke-linecap="round" opacity="0.95"/><line x1="561.4" y1="378.6" x2="561.5" y2="397.7" stroke="#94a9d0" stroke-width="22.6" stroke-linecap="round" opacity="0.95"/><line x1="561.5" y1="397.7" x2="561.1" y2="414.4" stroke="#94a9d0" stroke-width="22.0" stroke-linecap="round" opacity="0.95"/><line x1="561.1" y1="414.4" x2="560.3" y2="429.5" stroke="#94a9d0" stroke-width="21.4" stroke-linecap="round" opacity="0.95"/><line x1="560.3" y1="429.5" x2="558.7" y2="443.7" stroke="#94a9d0" stroke-width="20.8" stroke-linecap="round" opacity="0.95"/><line x1="558.7" y1="443.7" x2="556.0" y2="457.8" stroke="#94a9d0" stroke-width="20.1" stroke-linecap="round" opacity="0.95"/><line x1="556.0" y1="457.8" x2="551.7" y2="472.1" stroke="#94a9d0" stroke-width="19.5" stroke-linecap="round" opacity="0.95"/><line x1="551.7" y1="472.1" x2="546.0" y2="486.1" stroke="#94a9d0" stroke-width="18.9" stroke-linecap="round" opacity="0.95"/><line x1="546.0" y1="486.1" x2="539.9" y2="499.7" stroke="#94a9d0" stroke-width="18.2" stroke-linecap="round" opacity="0.95"/><line x1="539.9" y1="499.7" x2="534.0" y2="512.4" stroke="#94a9d0" stroke-width="17.6" stroke-linecap="round" opacity="0.95"/><line x1="534.0" y1="512.4" x2="528.3" y2="524.8" stroke="#94a9d0" stroke-width="17.0" stroke-linecap="round" opacity="0.95"/><line x1="528.3" y1="524.8" x2="522.3" y2="536.8" stroke="#94a9d0" stroke-width="16.4" stroke-linecap="round" opacity="0.95"/><line x1="522.3" y1="536.8" x2="516.9" y2="547.5" stroke="#94a9d0" stroke-width="15.8" stroke-linecap="round" opacity="0.95"/><line x1="516.9" y1="547.5" x2="512.4" y2="556.0" stroke="#94a9d0" stroke-width="15.1" stroke-linecap="round" opacity="0.95"/><line x1="512.4" y1="556.0" x2="509.2" y2="561.7" stroke="#94a9d0" stroke-width="14.5" stroke-linecap="round" opacity="0.95"/><line x1="509.2" y1="561.7" x2="506.8" y2="565.2" stroke="#94a9d0" stroke-width="13.9" stroke-linecap="round" opacity="0.95"/><line x1="506.8" y1="565.2" x2="505.2" y2="567.4" stroke="#94a9d0" stroke-width="13.2" stroke-linecap="round" opacity="0.95"/><line x1="505.2" y1="567.4" x2="504" y2="569" stroke="#94a9d0" stroke-width="12.6" stroke-linecap="round" opacity="0.95"/><line x1="567.0" y1="223.0" x2="572.9" y2="235.9" stroke="#8ea5cc" stroke-width="24.0" stroke-linecap="round" opacity="0.9"/><line x1="572.9" y1="235.9" x2="581.4" y2="254.4" stroke="#8ea5cc" stroke-width="22.9" stroke-linecap="round" opacity="0.9"/><line x1="581.4" y1="254.4" x2="590.8" y2="275.0" stroke="#8ea5cc" stroke-width="21.8" stroke-linecap="round" opacity="0.9"/><line x1="590.8" y1="275.0" x2="599.8" y2="294.0" stroke="#8ea5cc" stroke-width="20.7" stroke-linecap="round" opacity="0.9"/><line x1="599.8" y1="294.0" x2="608.5" y2="310.9" stroke="#8ea5cc" stroke-width="19.6" stroke-linecap="round" opacity="0.9"/><line x1="608.5" y1="310.9" x2="617.5" y2="327.4" stroke="#8ea5cc" stroke-width="18.5" stroke-linecap="round" opacity="0.9"/><line x1="617.5" y1="327.4" x2="625.9" y2="343.6" stroke="#8ea5cc" stroke-width="17.4" stroke-linecap="round" opacity="0.9"/><line x1="625.9" y1="343.6" x2="632.5" y2="359.4" stroke="#8ea5cc" stroke-width="16.3" stroke-linecap="round" opacity="0.9"/><line x1="632.5" y1="359.4" x2="637.2" y2="375.1" stroke="#8ea5cc" stroke-width="15.2" stroke-linecap="round" opacity="0.9"/><line x1="637.2" y1="375.1" x2="640.6" y2="390.5" stroke="#8ea5cc" stroke-width="14.1" stroke-linecap="round" opacity="0.9"/><line x1="640.6" y1="390.5" x2="642.6" y2="405.4" stroke="#8ea5cc" stroke-width="13.0" stroke-linecap="round" opacity="0.9"/><line x1="642.6" y1="405.4" x2="643.5" y2="419.5" stroke="#8ea5cc" stroke-width="11.9" stroke-linecap="round" opacity="0.9"/><line x1="643.5" y1="419.5" x2="642.9" y2="433.0" stroke="#8ea5cc" stroke-width="10.8" stroke-linecap="round" opacity="0.9"/><line x1="642.9" y1="433.0" x2="640.8" y2="445.8" stroke="#8ea5cc" stroke-width="9.7" stroke-linecap="round" opacity="0.9"/><line x1="640.8" y1="445.8" x2="638.0" y2="457.8" stroke="#8ea5cc" stroke-width="8.6" stroke-linecap="round" opacity="0.9"/><line x1="638.0" y1="457.8" x2="635.3" y2="468.7" stroke="#8ea5cc" stroke-width="7.5" stroke-linecap="round" opacity="0.9"/><line x1="635.3" y1="468.7" x2="632.5" y2="478.8" stroke="#8ea5cc" stroke-width="6.4" stroke-linecap="round" opacity="0.9"/><line x1="632.5" y1="478.8" x2="629.3" y2="488.2" stroke="#8ea5cc" stroke-width="5.3" stroke-linecap="round" opacity="0.9"/><line x1="629.3" y1="488.2" x2="626.4" y2="496.0" stroke="#8ea5cc" stroke-width="4.2" stroke-linecap="round" opacity="0.9"/><line x1="626.4" y1="496.0" x2="624.4" y2="501.5" stroke="#8ea5cc" stroke-width="3.1" stroke-linecap="round" opacity="0.9"/><line x1="670.8" y1="310.0" x2="675.0" y2="316.8" stroke="#6f88b4" stroke-width="7.0" stroke-linecap="round" opacity="0.85"/><line x1="675.0" y1="316.8" x2="681.0" y2="326.5" stroke="#6f88b4" stroke-width="6.4" stroke-linecap="round" opacity="0.85"/><line x1="681.0" y1="326.5" x2="687.4" y2="337.6" stroke="#6f88b4" stroke-width="5.8" stroke-linecap="round" opacity="0.85"/><line x1="687.4" y1="337.6" x2="692.6" y2="348.5" stroke="#6f88b4" stroke-width="5.1" stroke-linecap="round" opacity="0.85"/><line x1="692.6" y1="348.5" x2="696.4" y2="360.1" stroke="#6f88b4" stroke-width="4.5" stroke-linecap="round" opacity="0.85"/><line x1="696.4" y1="360.1" x2="699.5" y2="372.8" stroke="#6f88b4" stroke-width="3.9" stroke-linecap="round" opacity="0.85"/><line x1="699.5" y1="372.8" x2="701.9" y2="384.2" stroke="#6f88b4" stroke-width="3.2" stroke-linecap="round" opacity="0.85"/><line x1="701.9" y1="384.2" x2="703.6" y2="392.2" stroke="#6f88b4" stroke-width="2.6" stroke-linecap="round" opacity="0.85"/><line x1="610.0" y1="225.0" x2="621.1" y2="240.3" stroke="#8ea3c8" stroke-width="22.0" stroke-linecap="round" opacity="0.9"/><line x1="621.1" y1="240.3" x2="637.0" y2="262.5" stroke="#8ea3c8" stroke-width="20.4" stroke-linecap="round" opacity="0.9"/><line x1="637.0" y1="262.5" x2="654.6" y2="285.9" stroke="#8ea3c8" stroke-width="18.8" stroke-linecap="round" opacity="0.9"/><line x1="654.6" y1="285.9" x2="670.8" y2="304.8" stroke="#8ea3c8" stroke-width="17.2" stroke-linecap="round" opacity="0.9"/><line x1="670.8" y1="304.8" x2="684.8" y2="317.6" stroke="#8ea3c8" stroke-width="15.7" stroke-linecap="round" opacity="0.9"/><line x1="684.8" y1="317.6" x2="698.1" y2="327.4" stroke="#8ea3c8" stroke-width="14.1" stroke-linecap="round" opacity="0.9"/><line x1="698.1" y1="327.4" x2="711.5" y2="335.4" stroke="#8ea3c8" stroke-width="12.5" stroke-linecap="round" opacity="0.9"/><line x1="711.5" y1="335.4" x2="725.4" y2="343.0" stroke="#8ea3c8" stroke-width="10.9" stroke-linecap="round" opacity="0.9"/><line x1="725.4" y1="343.0" x2="741.4" y2="350.7" stroke="#8ea3c8" stroke-width="9.3" stroke-linecap="round" opacity="0.9"/><line x1="741.4" y1="350.7" x2="758.9" y2="357.7" stroke="#8ea3c8" stroke-width="7.8" stroke-linecap="round" opacity="0.9"/><line x1="758.9" y1="357.7" x2="774.6" y2="363.5" stroke="#8ea3c8" stroke-width="6.2" stroke-linecap="round" opacity="0.9"/><line x1="774.6" y1="363.5" x2="785.5" y2="367.6" stroke="#8ea3c8" stroke-width="4.6" stroke-linecap="round" opacity="0.9"/><line x1="590.0" y1="175.0" x2="594.0" y2="179.9" stroke="#9aabcb" stroke-width="32.0" stroke-linecap="round" opacity="0.92"/><line x1="594.0" y1="179.9" x2="599.6" y2="186.7" stroke="#9aabcb" stroke-width="30.8" stroke-linecap="round" opacity="0.92"/><line x1="599.6" y1="186.7" x2="606.9" y2="195.5" stroke="#9aabcb" stroke-width="29.6" stroke-linecap="round" opacity="0.92"/><line x1="606.9" y1="195.5" x2="616.0" y2="206.5" stroke="#9aabcb" stroke-width="28.4" stroke-linecap="round" opacity="0.92"/><line x1="616.0" y1="206.5" x2="627.9" y2="221.0" stroke="#9aabcb" stroke-width="27.2" stroke-linecap="round" opacity="0.92"/><line x1="627.9" y1="221.0" x2="642.3" y2="238.5" stroke="#9aabcb" stroke-width="26.0" stroke-linecap="round" opacity="0.92"/><line x1="642.3" y1="238.5" x2="657.2" y2="256.4" stroke="#9aabcb" stroke-width="24.8" stroke-linecap="round" opacity="0.92"/><line x1="657.2" y1="256.4" x2="670.8" y2="272.0" stroke="#9aabcb" stroke-width="23.5" stroke-linecap="round" opacity="0.92"/><line x1="670.8" y1="272.0" x2="682.3" y2="284.7" stroke="#9aabcb" stroke-width="22.3" stroke-linecap="round" opacity="0.92"/><line x1="682.3" y1="284.7" x2="692.7" y2="295.9" stroke="#9aabcb" stroke-width="21.1" stroke-linecap="round" opacity="0.92"/><line x1="692.7" y1="295.9" x2="703.1" y2="306.1" stroke="#9aabcb" stroke-width="19.9" stroke-linecap="round" opacity="0.92"/><line x1="703.1" y1="306.1" x2="714.5" y2="315.7" stroke="#9aabcb" stroke-width="18.7" stroke-linecap="round" opacity="0.92"/><line x1="714.5" y1="315.7" x2="727.7" y2="324.8" stroke="#9aabcb" stroke-width="17.5" stroke-linecap="round" opacity="0.92"/><line x1="727.7" y1="324.8" x2="742.1" y2="333.1" stroke="#9aabcb" stroke-width="16.3" stroke-linecap="round" opacity="0.92"/><line x1="742.1" y1="333.1" x2="756.3" y2="340.9" stroke="#9aabcb" stroke-width="15.1" stroke-linecap="round" opacity="0.92"/><line x1="756.3" y1="340.9" x2="769.0" y2="348.5" stroke="#9aabcb" stroke-width="13.9" stroke-linecap="round" opacity="0.92"/><line x1="769.0" y1="348.5" x2="780.1" y2="355.8" stroke="#9aabcb" stroke-width="12.7" stroke-linecap="round" opacity="0.92"/><line x1="780.1" y1="355.8" x2="790.1" y2="362.7" stroke="#9aabcb" stroke-width="11.5" stroke-linecap="round" opacity="0.92"/><line x1="790.1" y1="362.7" x2="799.1" y2="369.3" stroke="#9aabcb" stroke-width="10.2" stroke-linecap="round" opacity="0.92"/><line x1="799.1" y1="369.3" x2="807.4" y2="375.8" stroke="#9aabcb" stroke-width="9.0" stroke-linecap="round" opacity="0.92"/><line x1="807.4" y1="375.8" x2="815.1" y2="382.7" stroke="#9aabcb" stroke-width="7.8" stroke-linecap="round" opacity="0.92"/><line x1="815.1" y1="382.7" x2="822.1" y2="389.8" stroke="#9aabcb" stroke-width="6.6" stroke-linecap="round" opacity="0.92"/><line x1="822.1" y1="389.8" x2="827.9" y2="396.0" stroke="#9aabcb" stroke-width="5.4" stroke-linecap="round" opacity="0.92"/><line x1="827.9" y1="396.0" x2="832" y2="400.4" stroke="#9aabcb" stroke-width="4.2" stroke-linecap="round" opacity="0.92"/>
<polygon points="82.0,410.0 75.8,416.2 67.3,424.9 60.7,432.8 57.6,438.4 56.4,443.2 56.7,448.6 58.5,454.9 61.7,461.9 66.0,469.7 71.9,480.0 78.8,491.1 84.4,498.7 87.0,501.0 88.3,499.8 91.0,496.0 96.4,488.6 103.2,478.6 110.8,469.7 118.8,463.2 127.6,457.8 137.0,453.9 146.9,451.7 157.4,450.9 169.0,451.0 182.8,452.6 197.8,455.2 211.0,456.5 220.9,455.6 229.1,453.4 237.5,451.0 246.7,449.0 256.2,446.7 266.5,443.3 278.4,438.5 291.2,432.5 303.4,424.8 316.8,412.4 329.6,398.2 335.0,390.5 329.2,394.6 316.0,405.2 300.0,415.0 282.2,421.7 261.7,427.6 240.0,432.0 216.7,434.6 192.2,435.7 170.0,436.0 151.4,435.9 135.0,435.0 120.0,432.0 105.0,425.2 91.4,416.4 82.0,410.0" fill="#5f7fb0" opacity="0.75"/>
</g>
<g filter="url(#b1m)"><polyline points="534.9,273.1 532.5,288.0 527.6,302.6 521.0,316.5 513.0,330.3 503.2,344.3 491.5,358.3 479.0,371.9 466.6,384.5 454.2,396.3 441.5,407.7 428.6,418.1 415.7,427.5 401.9,435.8 387.3,443.0 374.5,448.8 365.5,452.9" fill="none" stroke="#dbe5f4" stroke-width="3.4" stroke-dasharray="2.2 3.2" opacity="0.9"/><polyline points="597.1,272.0 605.8,291.1 614.1,308.0 622.7,324.6 631.0,341.2 637.4,357.6 641.9,373.9 645.1,389.7 646.8,405.0 647.3,419.5 646.4,433.4 643.9,446.4 640.7,458.4 637.6,469.3 634.5,479.4 630.9,488.8 627.7,496.5 625.3,501.8" fill="none" stroke="#dbe5f4" stroke-width="3" stroke-dasharray="2.2 3.2" opacity="0.9"/><polyline points="568.2,430.4 566.3,444.9 563.2,459.6 558.4,474.5 552.3,488.8 545.9,502.4 539.7,515.0 533.7,527.4 527.4,539.4 521.7,550.0 516.9,558.5 513.3,564.2 510.5,567.8 508.7,569.9 507.2,571.4" fill="none" stroke="#dbe5f4" stroke-width="2.6" stroke-dasharray="2.2 3.2" opacity="0.7"/><polyline points="636.2,243.6 651.4,261.3 665.4,276.8 677.3,289.3 688.1,300.4 699.0,310.6 711.1,320.2 724.9,329.3 739.7,337.4 754.1,344.8 766.8,352.0 778.0,358.9 788.2,365.4 797.3,371.6 805.8,377.8 813.6,384.3 820.8,391.0 826.9,396.9 831.3,401.1" fill="none" stroke="#dbe5f4" stroke-width="3" stroke-dasharray="2.2 3.2" opacity="0.8"/><polyline points="666.8,309.2 681.4,321.7 695.5,331.4 709.5,339.0 723.8,346.1 740.2,353.3 758.1,359.8 774.0,365.0 785.1,368.5" fill="none" stroke="#dbe5f4" stroke-width="2.6" stroke-dasharray="2.2 3.2" opacity="0.7"/></g>
<g filter="url(#b3m)"><polygon points="428.0,45.0 420.5,45.9 409.4,47.3 396.0,50.0 379.9,54.3 361.4,59.9 343.0,66.0 324.8,72.5 306.6,79.6 290.0,87.0 275.7,94.5 263.0,102.3 251.0,111.0 239.7,120.8 229.2,131.4 219.0,142.5 208.8,154.5 199.0,167.0 190.0,179.0 182.4,189.7 175.7,199.9 169.0,211.0 161.8,224.0 154.6,237.8 148.0,251.0 142.1,263.4 136.8,275.2 132.0,285.0 128.1,291.1 124.8,295.2 121.0,301.0 116.3,310.4 111.1,321.4 105.5,332.5 99.3,343.4 92.8,354.3 87.0,364.0 81.9,371.7 77.6,378.2 75.0,385.0 75.2,393.2 77.1,401.7 79.0,409.0 79.5,414.0 79.9,417.7 82.0,422.0 86.2,428.1 92.0,434.7 100.0,440.0 111.1,443.0 124.3,444.7 137.0,446.0 147.7,446.9 157.8,447.3 169.0,448.0 182.8,449.4 197.8,451.1 211.0,452.0 220.9,451.7 229.1,450.6 237.5,449.0 246.7,447.0 256.2,444.5 266.5,441.0 278.4,436.9 291.2,431.8 303.4,424.8 314.9,414.9 325.8,403.0 335.0,390.5 341.9,377.1 347.1,363.2 351.0,351.0 352.8,341.2 353.3,333.2 355.0,327.0 358.2,324.2 362.6,323.2 369.4,319.3 379.5,309.8 392.1,297.4 406.0,285.0 421.9,273.9 439.1,262.8 454.0,251.0 465.1,237.4 473.8,223.1 481.0,211.0 485.9,203.3 489.2,197.7 494.0,190.0 502.1,178.1 511.7,164.0 520.0,150.0 526.4,136.5 531.7,123.0 535.0,110.0 536.5,97.3 536.1,85.0 533.0,74.0 526.1,64.6 516.6,56.5 507.0,50.0 498.4,45.1 489.7,41.8 481.0,39.6 472.0,38.6 463.0,38.8 454.0,39.6 444.3,41.2 434.7,43.4 428.0,45.0" fill="url(#mgm)"/></g>
<g clip-path="url(#mcm)">
<ellipse cx="430" cy="150" rx="75" ry="110" fill="#e4eaf0" opacity="0.85" filter="url(#b20m)" transform="rotate(35 430 150)"/>
<ellipse cx="250" cy="240" rx="50" ry="150" fill="#9dbbe0" opacity="0.7" filter="url(#b20m)" transform="rotate(40 250 240)"/>
<rect x="60" y="30" width="480" height="440" fill="url(#dotsm)"/>
<ellipse cx="245" cy="238" rx="12" ry="46" fill="#79e2c6" opacity="0.22" filter="url(#b3m)" transform="rotate(40 245 238)"/>
<ellipse cx="315" cy="290" rx="38" ry="22" fill="#f0c9c0" opacity="0.8" filter="url(#b8m)"/>
<ellipse cx="180" cy="400" rx="90" ry="25" fill="#c9b0a8" opacity="0.55" filter="url(#b8m)" transform="rotate(-12 180 400)"/>
<polygon points="75,421 152,410 234,394 294,367 337.6,339 354,316 372,330 350,395 300,440 206,462 80,436" fill="#0b1730" opacity="0.6" filter="url(#b8m)"/>
</g>
<g filter="url(#b3m)">
<ellipse cx="516" cy="80" rx="12" ry="21" fill="#262322" opacity="0.9" transform="rotate(-30 516 80)"/>
<ellipse cx="524" cy="120" rx="14" ry="18" fill="#4a2526" opacity="0.8"/>
<ellipse cx="490" cy="78" rx="14" ry="8" fill="#eef0f0" opacity="0.8" transform="rotate(35 490 78)"/>
</g>
<g filter="url(#b1m)"><path d="M78,372 l5,-8 l4,6 l-3,10 l4,8 l-6,6 Z" fill="#e8e2c8" opacity="0.85"/><path d="M82,422 C110,416 150,408 200,398 C230,392 250,390 262,392" fill="none" stroke="#d9c9b8" stroke-width="3" stroke-dasharray="5 3" opacity="0.7"/><path d="M56,448 C50,460 60,480 84,498" fill="none" stroke="#9fc0ee" stroke-width="1.6" opacity="0.8"/><path d="M697,186 L701,190 L694,236 L686,272" fill="none" stroke="#8fb6ee" stroke-width="1.6" opacity="0.9"/></g></svg></svg>
<div class="a" style="left:569px;top:546px;width:1px;height:1px;background:#b4b6b8;"></div>
<div class="a" style="left:569px;top:549px;width:1px;height:1px;background:#b4b6b8;"></div>
<div class="a" style="left:569px;top:552px;width:1px;height:1px;background:#b4b6b8;"></div>
<div class="a" style="left:569px;top:556px;width:1px;height:1px;background:#b4b6b8;"></div>
<div class="a" style="left:569px;top:559px;width:1px;height:1px;background:#b4b6b8;"></div>
<div class="a" style="left:569px;top:562px;width:1px;height:1px;background:#b4b6b8;"></div>
<div class="a" style="left:1430px;top:546px;width:1px;height:1px;background:#b4b6b8;"></div>
<div class="a" style="left:1430px;top:549px;width:1px;height:1px;background:#b4b6b8;"></div>
<div class="a" style="left:1430px;top:552px;width:1px;height:1px;background:#b4b6b8;"></div>
<div class="a" style="left:1430px;top:556px;width:1px;height:1px;background:#b4b6b8;"></div>
<div class="a" style="left:1430px;top:559px;width:1px;height:1px;background:#b4b6b8;"></div>
<div class="a" style="left:1430px;top:562px;width:1px;height:1px;background:#b4b6b8;"></div>
<div class="a" style="left:1432px;top:80px;width:461px;height:949px;background:#eff0f1;"></div>
<div class="a" style="left:1433px;top:104.5px;width:458px;height:858px;box-sizing:border-box;border-left:1px solid #fafafa;border-right:1px solid #9c9ea0;border-top:1px solid #c2c4c6;background:#eff0f1;"></div>
<div class="a" style="left:1432.5px;top:961.5px;width:2px;height:1px;background:#6f7275;"></div>
<div class="a" style="left:1889px;top:961.5px;width:2px;height:1px;background:#6f7275;"></div>
<div class="a" style="left:1432px;top:81px;width:98px;height:23.7px;box-sizing:border-box;border:1px solid #c0c2c4;border-bottom:none;border-radius:3px 3px 0 0;background:#e8e9ea;"></div>
<div class="a" style="left:1584px;top:81px;width:97.7px;height:23.7px;box-sizing:border-box;border:1px solid #c0c2c4;border-bottom:none;border-radius:3px 3px 0 0;background:#e8e9ea;"></div>
<div class="a" style="left:1530.3px;top:79.3px;width:53.5px;height:26.4px;box-sizing:border-box;border:1px solid #c0c2c4;border-bottom:none;border-radius:3px 3px 0 0;background:linear-gradient(#ffffff,#f6f6f7 60%,#eff0f1);"></div>
<div class="t" style="left:1444.70px;top:85.00px;font-size:13px;line-height:17.000px;letter-spacing:0.597px;color:#232629;"><u>D</u>escription</div>
<div class="t" style="left:1542.50px;top:84.00px;font-size:13px;line-height:17.000px;letter-spacing:0.083px;color:#232629;">Tags</div>
<div class="t" style="left:1596.70px;top:85.00px;font-size:13px;line-height:17.000px;letter-spacing:0.632px;color:#232629;">I<u>n</u>formation</div>
<div class="a" style="left:1443.3px;top:116.5px;width:436px;height:22.5px;border:1px solid #bcbec0;border-radius:3px;background:linear-gradient(#fdfdfd,#f4f5f5);box-shadow:0 1px 0 rgba(0,0,0,0.08);box-sizing:border-box;"></div>
<div class="t" style="left:1602.50px;top:119.00px;font-size:13px;line-height:17.000px;letter-spacing:0.452px;color:#232629;"><u>O</u>pen Tag Manager</div>
<div class="a" style="left:1443.3px;top:145.2px;width:436px;height:22.3px;box-sizing:border-box;border:1px solid #bcbec0;border-radius:3px;background:#ffffff;"></div>
<div class="t" style="left:1447.20px;top:148.00px;font-size:13px;line-height:17.000px;letter-spacing:0.533px;color:#8796a9;">Enter tag here.</div>
<div class="a" style="left:1443px;top:175.5px;width:436.5px;height:746.5px;box-sizing:border-box;border-left:1px solid #bcbec0;border-top:1px solid #d9dadb;background:#ffffff;"></div>
<div class="a" style="left:1444px;top:176.5px;width:435.5px;height:16.5px;background:linear-gradient(#ffffff,#f7f7f8);"></div>
<div class="a" style="left:1444px;top:193px;width:435.5px;height:1px;background:#b9bbbd;"></div>
<div class="t" style="left:1446.70px;top:177.00px;font-size:13px;line-height:17.000px;letter-spacing:0.008px;color:#232629;">Tags</div>
<svg class="a" style="left:1865px;top:181.5px;" width="10" height="6" viewBox="0 0 10 6"><path d="M0.4,5.4 L4.7,0.6 L9,5.4 Z" fill="#4d5256"/></svg>
<svg class="a" style="left:1451.7px;top:199px;" width="16" height="18" viewBox="0 0 16 18"><path d="M0.7,0.7 H9.8 L14.6,5.6 V8.6 M6,16.3 H0.7 V0.7" fill="none" stroke="#31363b" stroke-width="1.3"/><path d="M9.8,0.7 L14.6,5.6 H9.8 Z" fill="#31363b"/><path d="M6.6,10.6 H10 L11,11.8 H14.8 V16.4 H6.6 Z" fill="none" stroke="#31363b" stroke-width="1.2"/><path d="M6.6,10.4 H10 L11,12 H8 L6.6,13.6 Z" fill="#31363b"/></svg>
<div class="t" style="left:1477.00px;top:199.00px;font-size:13px;line-height:17.000px;letter-spacing:0.008px;color:#232629;">Tags</div>
<svg class="a" style="left:1450.3px;top:230.0px;" width="9" height="6" viewBox="0 0 9 6"><path d="M0.3,0.4 L8.3,0.4 L4.3,5 Z" fill="#7f8386"/></svg>
<div class="a" style="left:1468.7px;top:224.89999999999998px;width:14.3px;height:14.8px;box-sizing:border-box;border:1px solid #c3c6c7;background:#fcfcfc;border-radius:1px;"></div>
<svg class="a" style="left:1492.9px;top:224.0px;" width="17" height="17" viewBox="0 0 17 17"><path d="M0.3,2.5 L6.4,0.2 L16.8,5.6 L12.6,13.6 L1.7,8.5 Z M3.9,2.6 a1.3,1.3 0 1,0 0.01,0 Z" fill="#31363b" fill-rule="evenodd"/>
<path d="M0.4,3.4 L0.6,9.2 L8.4,16.7 L11,14.5 L1.3,9.6 Z" fill="#31363b"/>
<path d="M0.9,8.6 L12,14" stroke="#fcfcfc" stroke-width="0.8" fill="none"/></svg>
<div class="t" style="left:1519.50px;top:224.00px;font-size:13px;line-height:17.000px;letter-spacing:0.576px;color:#232629;">Binomial Nomenclature</div>
<div class="a" style="left:1489.8px;top:249.89999999999998px;width:14.3px;height:14.8px;box-sizing:border-box;border:1px solid #c3c6c7;background:#fcfcfc;border-radius:1px;"></div>
<svg class="a" style="left:1489.8px;top:250.2px;" width="14" height="14" viewBox="0 0 14 14"><path d="M2.6,6.9 L6,12.2 L10.6,3.2" stroke="#1b1e20" stroke-width="1.7" fill="none" stroke-linecap="butt" stroke-linejoin="miter"/></svg>
<svg class="a" style="left:1513.9px;top:249.0px;" width="17" height="17" viewBox="0 0 17 17"><path d="M0.3,2.5 L6.4,0.2 L16.8,5.6 L12.6,13.6 L1.7,8.5 Z M3.9,2.6 a1.3,1.3 0 1,0 0.01,0 Z" fill="#31363b" fill-rule="evenodd"/>
<path d="M0.4,3.4 L0.6,9.2 L8.4,16.7 L11,14.5 L1.3,9.6 Z" fill="#31363b"/>
<path d="M0.9,8.6 L12,14" stroke="#fcfcfc" stroke-width="0.8" fill="none"/></svg>
<div class="t" style="left:1540.55px;top:249.00px;font-size:13px;line-height:17.000px;letter-spacing:0.585px;color:#232629;">Doryteuthis opalescens</div>
<svg class="a" style="left:1450.3px;top:280.0px;" width="9" height="6" viewBox="0 0 9 6"><path d="M0.3,0.4 L8.3,0.4 L4.3,5 Z" fill="#7f8386"/></svg>
<div class="a" style="left:1468.7px;top:274.9px;width:14.3px;height:14.8px;box-sizing:border-box;border:1px solid #c3c6c7;background:#fcfcfc;border-radius:1px;"></div>
<svg class="a" style="left:1492.9px;top:274.0px;" width="17" height="17" viewBox="0 0 17 17"><path d="M0.3,2.5 L6.4,0.2 L16.8,5.6 L12.6,13.6 L1.7,8.5 Z M3.9,2.6 a1.3,1.3 0 1,0 0.01,0 Z" fill="#31363b" fill-rule="evenodd"/>
<path d="M0.4,3.4 L0.6,9.2 L8.4,16.7 L11,14.5 L1.3,9.6 Z" fill="#31363b"/>
<path d="M0.9,8.6 L12,14" stroke="#fcfcfc" stroke-width="0.8" fill="none"/></svg>
<div class="t" style="left:1519.50px;top:274.00px;font-size:13px;line-height:17.000px;letter-spacing:0.493px;color:#232629;">Classification</div>
<svg class="a" style="left:1471.3px;top:306.0px;" width="9" height="6" viewBox="0 0 9 6"><path d="M0.3,0.4 L8.3,0.4 L4.3,5 Z" fill="#7f8386"/></svg>
<div class="a" style="left:1489.8px;top:300.9px;width:14.3px;height:14.8px;box-sizing:border-box;border:1px solid #c3c6c7;background:#fcfcfc;border-radius:1px;"></div>
<svg class="a" style="left:1513.9px;top:300.0px;" width="17" height="17" viewBox="0 0 17 17"><path d="M0.3,2.5 L6.4,0.2 L16.8,5.6 L12.6,13.6 L1.7,8.5 Z M3.9,2.6 a1.3,1.3 0 1,0 0.01,0 Z" fill="#31363b" fill-rule="evenodd"/>
<path d="M0.4,3.4 L0.6,9.2 L8.4,16.7 L11,14.5 L1.3,9.6 Z" fill="#31363b"/>
<path d="M0.9,8.6 L12,14" stroke="#fcfcfc" stroke-width="0.8" fill="none"/></svg>
<div class="t" style="left:1540.55px;top:300.00px;font-size:13px;line-height:17.000px;letter-spacing:0.580px;color:#232629;">Animalia</div>
<svg class="a" style="left:1492.4px;top:331.0px;" width="9" height="6" viewBox="0 0 9 6"><path d="M0.3,0.4 L8.3,0.4 L4.3,5 Z" fill="#7f8386"/></svg>
<div class="a" style="left:1510.8px;top:325.9px;width:14.3px;height:14.8px;box-sizing:border-box;border:1px solid #c3c6c7;background:#fcfcfc;border-radius:1px;"></div>
<svg class="a" style="left:1535.0px;top:325.0px;" width="17" height="17" viewBox="0 0 17 17"><path d="M0.3,2.5 L6.4,0.2 L16.8,5.6 L12.6,13.6 L1.7,8.5 Z M3.9,2.6 a1.3,1.3 0 1,0 0.01,0 Z" fill="#31363b" fill-rule="evenodd"/>
<path d="M0.4,3.4 L0.6,9.2 L8.4,16.7 L11,14.5 L1.3,9.6 Z" fill="#31363b"/>
<path d="M0.9,8.6 L12,14" stroke="#fcfcfc" stroke-width="0.8" fill="none"/></svg>
<div class="t" style="left:1561.60px;top:325.00px;font-size:13px;line-height:17.000px;letter-spacing:0.400px;color:#232629;">Mollusca</div>
<svg class="a" style="left:1513.5px;top:356.0px;" width="9" height="6" viewBox="0 0 9 6"><path d="M0.3,0.4 L8.3,0.4 L4.3,5 Z" fill="#7f8386"/></svg>
<div class="a" style="left:1531.9px;top:350.9px;width:14.3px;height:14.8px;box-sizing:border-box;border:1px solid #c3c6c7;background:#fcfcfc;border-radius:1px;"></div>
<svg class="a" style="left:1556.0px;top:350.0px;" width="17" height="17" viewBox="0 0 17 17"><path d="M0.3,2.5 L6.4,0.2 L16.8,5.6 L12.6,13.6 L1.7,8.5 Z M3.9,2.6 a1.3,1.3 0 1,0 0.01,0 Z" fill="#31363b" fill-rule="evenodd"/>
<path d="M0.4,3.4 L0.6,9.2 L8.4,16.7 L11,14.5 L1.3,9.6 Z" fill="#31363b"/>
<path d="M0.9,8.6 L12,14" stroke="#fcfcfc" stroke-width="0.8" fill="none"/></svg>
<div class="t" style="left:1582.65px;top:350.00px;font-size:13px;line-height:17.000px;letter-spacing:0.467px;color:#232629;">Cephalopoda</div>
<svg class="a" style="left:1534.5px;top:381.0px;" width="9" height="6" viewBox="0 0 9 6"><path d="M0.3,0.4 L8.3,0.4 L4.3,5 Z" fill="#7f8386"/></svg>
<div class="a" style="left:1552.9px;top:375.9px;width:14.3px;height:14.8px;box-sizing:border-box;border:1px solid #c3c6c7;background:#fcfcfc;border-radius:1px;"></div>
<svg class="a" style="left:1577.1px;top:375.0px;" width="17" height="17" viewBox="0 0 17 17"><path d="M0.3,2.5 L6.4,0.2 L16.8,5.6 L12.6,13.6 L1.7,8.5 Z M3.9,2.6 a1.3,1.3 0 1,0 0.01,0 Z" fill="#31363b" fill-rule="evenodd"/>
<path d="M0.4,3.4 L0.6,9.2 L8.4,16.7 L11,14.5 L1.3,9.6 Z" fill="#31363b"/>
<path d="M0.9,8.6 L12,14" stroke="#fcfcfc" stroke-width="0.8" fill="none"/></svg>
<div class="t" style="left:1603.70px;top:375.00px;font-size:13px;line-height:17.000px;letter-spacing:0.384px;color:#232629;">Coleoidea</div>
<svg class="a" style="left:1555.5px;top:407.0px;" width="9" height="6" viewBox="0 0 9 6"><path d="M0.3,0.4 L8.3,0.4 L4.3,5 Z" fill="#7f8386"/></svg>
<div class="a" style="left:1574.0px;top:401.9px;width:14.3px;height:14.8px;box-sizing:border-box;border:1px solid #c3c6c7;background:#fcfcfc;border-radius:1px;"></div>
<svg class="a" style="left:1598.1px;top:401.0px;" width="17" height="17" viewBox="0 0 17 17"><path d="M0.3,2.5 L6.4,0.2 L16.8,5.6 L12.6,13.6 L1.7,8.5 Z M3.9,2.6 a1.3,1.3 0 1,0 0.01,0 Z" fill="#31363b" fill-rule="evenodd"/>
<path d="M0.4,3.4 L0.6,9.2 L8.4,16.7 L11,14.5 L1.3,9.6 Z" fill="#31363b"/>
<path d="M0.9,8.6 L12,14" stroke="#fcfcfc" stroke-width="0.8" fill="none"/></svg>
<div class="t" style="left:1624.75px;top:401.00px;font-size:13px;line-height:17.000px;letter-spacing:0.596px;color:#232629;">Decapodiformes</div>
<svg class="a" style="left:1576.6px;top:432.0px;" width="9" height="6" viewBox="0 0 9 6"><path d="M0.3,0.4 L8.3,0.4 L4.3,5 Z" fill="#7f8386"/></svg>
<div class="a" style="left:1595.0px;top:426.9px;width:14.3px;height:14.8px;box-sizing:border-box;border:1px solid #c3c6c7;background:#fcfcfc;border-radius:1px;"></div>
<svg class="a" style="left:1619.2px;top:426.0px;" width="17" height="17" viewBox="0 0 17 17"><path d="M0.3,2.5 L6.4,0.2 L16.8,5.6 L12.6,13.6 L1.7,8.5 Z M3.9,2.6 a1.3,1.3 0 1,0 0.01,0 Z" fill="#31363b" fill-rule="evenodd"/>
<path d="M0.4,3.4 L0.6,9.2 L8.4,16.7 L11,14.5 L1.3,9.6 Z" fill="#31363b"/>
<path d="M0.9,8.6 L12,14" stroke="#fcfcfc" stroke-width="0.8" fill="none"/></svg>
<div class="t" style="left:1645.80px;top:426.00px;font-size:13px;line-height:17.000px;letter-spacing:0.482px;color:#232629;">Myopsida</div>
<svg class="a" style="left:1597.6px;top:457.0px;" width="9" height="6" viewBox="0 0 9 6"><path d="M0.3,0.4 L8.3,0.4 L4.3,5 Z" fill="#7f8386"/></svg>
<div class="a" style="left:1616.0px;top:451.9px;width:14.3px;height:14.8px;box-sizing:border-box;border:1px solid #c3c6c7;background:#fcfcfc;border-radius:1px;"></div>
<svg class="a" style="left:1640.2px;top:451.0px;" width="17" height="17" viewBox="0 0 17 17"><path d="M0.3,2.5 L6.4,0.2 L16.8,5.6 L12.6,13.6 L1.7,8.5 Z M3.9,2.6 a1.3,1.3 0 1,0 0.01,0 Z" fill="#31363b" fill-rule="evenodd"/>
<path d="M0.4,3.4 L0.6,9.2 L8.4,16.7 L11,14.5 L1.3,9.6 Z" fill="#31363b"/>
<path d="M0.9,8.6 L12,14" stroke="#fcfcfc" stroke-width="0.8" fill="none"/></svg>
<div class="t" style="left:1666.85px;top:451.00px;font-size:13px;line-height:17.000px;letter-spacing:0.484px;color:#232629;">Loliginidae</div>
<svg class="a" style="left:1618.7px;top:482.0px;" width="9" height="6" viewBox="0 0 9 6"><path d="M0.3,0.4 L8.3,0.4 L4.3,5 Z" fill="#7f8386"/></svg>
<div class="a" style="left:1637.1px;top:476.9px;width:14.3px;height:14.8px;box-sizing:border-box;border:1px solid #c3c6c7;background:#fcfcfc;border-radius:1px;"></div>
<svg class="a" style="left:1661.3px;top:476.0px;" width="17" height="17" viewBox="0 0 17 17"><path d="M0.3,2.5 L6.4,0.2 L16.8,5.6 L12.6,13.6 L1.7,8.5 Z M3.9,2.6 a1.3,1.3 0 1,0 0.01,0 Z" fill="#31363b" fill-rule="evenodd"/>
<path d="M0.4,3.4 L0.6,9.2 L8.4,16.7 L11,14.5 L1.3,9.6 Z" fill="#31363b"/>
<path d="M0.9,8.6 L12,14" stroke="#fcfcfc" stroke-width="0.8" fill="none"/></svg>
<div class="t" style="left:1687.90px;top:476.00px;font-size:13px;line-height:17.000px;letter-spacing:0.705px;color:#232629;">Doryteuthis</div>
<div class="a" style="left:1658.2px;top:502.9px;width:14.3px;height:14.8px;box-sizing:border-box;border:1px solid #c3c6c7;background:#fcfcfc;border-radius:1px;"></div>
<svg class="a" style="left:1658.2px;top:503.2px;" width="14" height="14" viewBox="0 0 14 14"><path d="M2.6,6.9 L6,12.2 L10.6,3.2" stroke="#1b1e20" stroke-width="1.7" fill="none" stroke-linecap="butt" stroke-linejoin="miter"/></svg>
<svg class="a" style="left:1682.3px;top:502.0px;" width="17" height="17" viewBox="0 0 17 17"><path d="M0.3,2.5 L6.4,0.2 L16.8,5.6 L12.6,13.6 L1.7,8.5 Z M3.9,2.6 a1.3,1.3 0 1,0 0.01,0 Z" fill="#31363b" fill-rule="evenodd"/>
<path d="M0.4,3.4 L0.6,9.2 L8.4,16.7 L11,14.5 L1.3,9.6 Z" fill="#31363b"/>
<path d="M0.9,8.6 L12,14" stroke="#fcfcfc" stroke-width="0.8" fill="none"/></svg>
<div class="t" style="left:1708.95px;top:502.00px;font-size:13px;line-height:17.000px;letter-spacing:0.585px;color:#232629;">Doryteuthis opalescens</div>
<svg class="a" style="left:1450.3px;top:533.0px;" width="9" height="6" viewBox="0 0 9 6"><path d="M0.3,0.4 L8.3,0.4 L4.3,5 Z" fill="#7f8386"/></svg>
<div class="a" style="left:1468.7px;top:527.9000000000001px;width:14.3px;height:14.8px;box-sizing:border-box;border:1px solid #c3c6c7;background:#fcfcfc;border-radius:1px;"></div>
<svg class="a" style="left:1492.9px;top:527.0px;" width="17" height="17" viewBox="0 0 17 17"><path d="M0.3,2.5 L6.4,0.2 L16.8,5.6 L12.6,13.6 L1.7,8.5 Z M3.9,2.6 a1.3,1.3 0 1,0 0.01,0 Z" fill="#31363b" fill-rule="evenodd"/>
<path d="M0.4,3.4 L0.6,9.2 L8.4,16.7 L11,14.5 L1.3,9.6 Z" fill="#31363b"/>
<path d="M0.9,8.6 L12,14" stroke="#fcfcfc" stroke-width="0.8" fill="none"/></svg>
<div class="t" style="left:1519.50px;top:527.00px;font-size:13px;line-height:17.000px;letter-spacing:0.634px;color:#232629;">Common Name</div>
<div class="a" style="left:1489.8px;top:552.9000000000001px;width:14.3px;height:14.8px;box-sizing:border-box;border:1px solid #c3c6c7;background:#fcfcfc;border-radius:1px;"></div>
<svg class="a" style="left:1489.8px;top:553.2px;" width="14" height="14" viewBox="0 0 14 14"><path d="M2.6,6.9 L6,12.2 L10.6,3.2" stroke="#1b1e20" stroke-width="1.7" fill="none" stroke-linecap="butt" stroke-linejoin="miter"/></svg>
<svg class="a" style="left:1513.9px;top:552.0px;" width="17" height="17" viewBox="0 0 17 17"><path d="M0.3,2.5 L6.4,0.2 L16.8,5.6 L12.6,13.6 L1.7,8.5 Z M3.9,2.6 a1.3,1.3 0 1,0 0.01,0 Z" fill="#31363b" fill-rule="evenodd"/>
<path d="M0.4,3.4 L0.6,9.2 L8.4,16.7 L11,14.5 L1.3,9.6 Z" fill="#31363b"/>
<path d="M0.9,8.6 L12,14" stroke="#fcfcfc" stroke-width="0.8" fill="none"/></svg>
<div class="t" style="left:1540.55px;top:552.00px;font-size:13px;line-height:17.000px;letter-spacing:0.475px;color:#232629;">Opalescent Inshore Squid</div>
<svg class="a" style="left:1450.3px;top:583.0px;" width="9" height="6" viewBox="0 0 9 6"><path d="M0.3,0.4 L8.3,0.4 L4.3,5 Z" fill="#7f8386"/></svg>
<div class="a" style="left:1468.7px;top:577.9000000000001px;width:14.3px;height:14.8px;box-sizing:border-box;border:1px solid #c3c6c7;background:#fcfcfc;border-radius:1px;"></div>
<svg class="a" style="left:1492.9px;top:577.0px;" width="17" height="17" viewBox="0 0 17 17"><path d="M0.3,2.5 L6.4,0.2 L16.8,5.6 L12.6,13.6 L1.7,8.5 Z M3.9,2.6 a1.3,1.3 0 1,0 0.01,0 Z" fill="#31363b" fill-rule="evenodd"/>
<path d="M0.4,3.4 L0.6,9.2 L8.4,16.7 L11,14.5 L1.3,9.6 Z" fill="#31363b"/>
<path d="M0.9,8.6 L12,14" stroke="#fcfcfc" stroke-width="0.8" fill="none"/></svg>
<div class="t" style="left:1519.50px;top:577.00px;font-size:13px;line-height:17.000px;letter-spacing:0.456px;color:#232629;">Old: Locations</div>
<div class="a" style="left:1489.8px;top:603.9000000000001px;width:14.3px;height:14.8px;box-sizing:border-box;border:1px solid #c3c6c7;background:#fcfcfc;border-radius:1px;"></div>
<svg class="a" style="left:1489.8px;top:604.2px;" width="14" height="14" viewBox="0 0 14 14"><path d="M2.6,6.9 L6,12.2 L10.6,3.2" stroke="#1b1e20" stroke-width="1.7" fill="none" stroke-linecap="butt" stroke-linejoin="miter"/></svg>
<svg class="a" style="left:1513.9px;top:603.0px;" width="17" height="17" viewBox="0 0 17 17"><path d="M0.3,2.5 L6.4,0.2 L16.8,5.6 L12.6,13.6 L1.7,8.5 Z M3.9,2.6 a1.3,1.3 0 1,0 0.01,0 Z" fill="#31363b" fill-rule="evenodd"/>
<path d="M0.4,3.4 L0.6,9.2 L8.4,16.7 L11,14.5 L1.3,9.6 Z" fill="#31363b"/>
<path d="M0.9,8.6 L12,14" stroke="#fcfcfc" stroke-width="0.8" fill="none"/></svg>
<div class="t" style="left:1540.55px;top:603.00px;font-size:13px;line-height:17.000px;letter-spacing:0.616px;color:#232629;">location:Hoodsport</div>
<svg class="a" style="left:1450.3px;top:634.0px;" width="9" height="6" viewBox="0 0 9 6"><path d="M0.3,0.4 L8.3,0.4 L4.3,5 Z" fill="#7f8386"/></svg>
<div class="a" style="left:1468.7px;top:628.9000000000001px;width:14.3px;height:14.8px;box-sizing:border-box;border:1px solid #c3c6c7;background:#fcfcfc;border-radius:1px;"></div>
<svg class="a" style="left:1492.9px;top:628.0px;" width="17" height="17" viewBox="0 0 17 17"><path d="M0.3,2.5 L6.4,0.2 L16.8,5.6 L12.6,13.6 L1.7,8.5 Z M3.9,2.6 a1.3,1.3 0 1,0 0.01,0 Z" fill="#31363b" fill-rule="evenodd"/>
<path d="M0.4,3.4 L0.6,9.2 L8.4,16.7 L11,14.5 L1.3,9.6 Z" fill="#31363b"/>
<path d="M0.9,8.6 L12,14" stroke="#fcfcfc" stroke-width="0.8" fill="none"/></svg>
<div class="t" style="left:1519.50px;top:628.00px;font-size:13px;line-height:17.000px;letter-spacing:0.400px;color:#232629;">Old: Species</div>
<div class="a" style="left:1489.8px;top:653.9000000000001px;width:14.3px;height:14.8px;box-sizing:border-box;border:1px solid #c3c6c7;background:#fcfcfc;border-radius:1px;"></div>
<svg class="a" style="left:1489.8px;top:654.2px;" width="14" height="14" viewBox="0 0 14 14"><path d="M2.6,6.9 L6,12.2 L10.6,3.2" stroke="#1b1e20" stroke-width="1.7" fill="none" stroke-linecap="butt" stroke-linejoin="miter"/></svg>
<svg class="a" style="left:1513.9px;top:653.0px;" width="17" height="17" viewBox="0 0 17 17"><path d="M0.3,2.5 L6.4,0.2 L16.8,5.6 L12.6,13.6 L1.7,8.5 Z M3.9,2.6 a1.3,1.3 0 1,0 0.01,0 Z" fill="#31363b" fill-rule="evenodd"/>
<path d="M0.4,3.4 L0.6,9.2 L8.4,16.7 L11,14.5 L1.3,9.6 Z" fill="#31363b"/>
<path d="M0.9,8.6 L12,14" stroke="#fcfcfc" stroke-width="0.8" fill="none"/></svg>
<div class="t" style="left:1540.55px;top:653.00px;font-size:13px;line-height:17.000px;letter-spacing:0.556px;color:#232629;">species:Doryteuthis opalescens</div>
<svg class="a" style="left:1450.3px;top:684.0px;" width="9" height="6" viewBox="0 0 9 6"><path d="M0.3,0.4 L8.3,0.4 L4.3,5 Z" fill="#7f8386"/></svg>
<div class="a" style="left:1468.7px;top:678.9000000000001px;width:14.3px;height:14.8px;box-sizing:border-box;border:1px solid #c3c6c7;background:#fcfcfc;border-radius:1px;"></div>
<svg class="a" style="left:1492.9px;top:678.0px;" width="17" height="17" viewBox="0 0 17 17"><path d="M0.3,2.5 L6.4,0.2 L16.8,5.6 L12.6,13.6 L1.7,8.5 Z M3.9,2.6 a1.3,1.3 0 1,0 0.01,0 Z" fill="#31363b" fill-rule="evenodd"/>
<path d="M0.4,3.4 L0.6,9.2 L8.4,16.7 L11,14.5 L1.3,9.6 Z" fill="#31363b"/>
<path d="M0.9,8.6 L12,14" stroke="#fcfcfc" stroke-width="0.8" fill="none"/></svg>
<div class="t" style="left:1519.50px;top:678.00px;font-size:13px;line-height:17.000px;letter-spacing:0.321px;color:#232629;">Species</div>
<svg class="a" style="left:1471.3px;top:710.0px;" width="9" height="6" viewBox="0 0 9 6"><path d="M0.3,0.4 L8.3,0.4 L4.3,5 Z" fill="#7f8386"/></svg>
<div class="a" style="left:1489.8px;top:704.9000000000001px;width:14.3px;height:14.8px;box-sizing:border-box;border:1px solid #c3c6c7;background:#fcfcfc;border-radius:1px;"></div>
<svg class="a" style="left:1513.9px;top:704.0px;" width="17" height="17" viewBox="0 0 17 17"><path d="M0.3,2.5 L6.4,0.2 L16.8,5.6 L12.6,13.6 L1.7,8.5 Z M3.9,2.6 a1.3,1.3 0 1,0 0.01,0 Z" fill="#31363b" fill-rule="evenodd"/>
<path d="M0.4,3.4 L0.6,9.2 L8.4,16.7 L11,14.5 L1.3,9.6 Z" fill="#31363b"/>
<path d="M0.9,8.6 L12,14" stroke="#fcfcfc" stroke-width="0.8" fill="none"/></svg>
<div class="t" style="left:1540.55px;top:704.00px;font-size:13px;line-height:17.000px;letter-spacing:0.536px;color:#232629;">Animals</div>
<svg class="a" style="left:1492.4px;top:735.0px;" width="9" height="6" viewBox="0 0 9 6"><path d="M0.3,0.4 L8.3,0.4 L4.3,5 Z" fill="#7f8386"/></svg>
<div class="a" style="left:1510.8px;top:729.9000000000001px;width:14.3px;height:14.8px;box-sizing:border-box;border:1px solid #c3c6c7;background:#fcfcfc;border-radius:1px;"></div>
<svg class="a" style="left:1535.0px;top:729.0px;" width="17" height="17" viewBox="0 0 17 17"><path d="M0.3,2.5 L6.4,0.2 L16.8,5.6 L12.6,13.6 L1.7,8.5 Z M3.9,2.6 a1.3,1.3 0 1,0 0.01,0 Z" fill="#31363b" fill-rule="evenodd"/>
<path d="M0.4,3.4 L0.6,9.2 L8.4,16.7 L11,14.5 L1.3,9.6 Z" fill="#31363b"/>
<path d="M0.9,8.6 L12,14" stroke="#fcfcfc" stroke-width="0.8" fill="none"/></svg>
<div class="t" style="left:1561.60px;top:729.00px;font-size:13px;line-height:17.000px;letter-spacing:0.365px;color:#232629;">Molluscs</div>
<svg class="a" style="left:1513.5px;top:760.0px;" width="9" height="6" viewBox="0 0 9 6"><path d="M0.3,0.4 L8.3,0.4 L4.3,5 Z" fill="#7f8386"/></svg>
<div class="a" style="left:1531.9px;top:754.9000000000001px;width:14.3px;height:14.8px;box-sizing:border-box;border:1px solid #c3c6c7;background:#fcfcfc;border-radius:1px;"></div>
<svg class="a" style="left:1556.0px;top:754.0px;" width="17" height="17" viewBox="0 0 17 17"><path d="M0.3,2.5 L6.4,0.2 L16.8,5.6 L12.6,13.6 L1.7,8.5 Z M3.9,2.6 a1.3,1.3 0 1,0 0.01,0 Z" fill="#31363b" fill-rule="evenodd"/>
<path d="M0.4,3.4 L0.6,9.2 L8.4,16.7 L11,14.5 L1.3,9.6 Z" fill="#31363b"/>
<path d="M0.9,8.6 L12,14" stroke="#fcfcfc" stroke-width="0.8" fill="none"/></svg>
<div class="t" style="left:1582.65px;top:754.00px;font-size:13px;line-height:17.000px;letter-spacing:0.443px;color:#232629;">Cephalopods</div>
<svg class="a" style="left:1534.5px;top:785.0px;" width="9" height="6" viewBox="0 0 9 6"><path d="M0.3,0.4 L8.3,0.4 L4.3,5 Z" fill="#7f8386"/></svg>
<div class="a" style="left:1552.9px;top:779.9000000000001px;width:14.3px;height:14.8px;box-sizing:border-box;border:1px solid #c3c6c7;background:#fcfcfc;border-radius:1px;"></div>
<svg class="a" style="left:1577.1px;top:779.0px;" width="17" height="17" viewBox="0 0 17 17"><path d="M0.3,2.5 L6.4,0.2 L16.8,5.6 L12.6,13.6 L1.7,8.5 Z M3.9,2.6 a1.3,1.3 0 1,0 0.01,0 Z" fill="#31363b" fill-rule="evenodd"/>
<path d="M0.4,3.4 L0.6,9.2 L8.4,16.7 L11,14.5 L1.3,9.6 Z" fill="#31363b"/>
<path d="M0.9,8.6 L12,14" stroke="#fcfcfc" stroke-width="0.8" fill="none"/></svg>
<div class="t" style="left:1603.70px;top:779.00px;font-size:13px;line-height:17.000px;letter-spacing:0.412px;color:#232629;">Inshore Squids</div>
<svg class="a" style="left:1555.5px;top:811.0px;" width="9" height="6" viewBox="0 0 9 6"><path d="M0.3,0.4 L8.3,0.4 L4.3,5 Z" fill="#7f8386"/></svg>
<div class="a" style="left:1574.0px;top:805.9000000000001px;width:14.3px;height:14.8px;box-sizing:border-box;border:1px solid #c3c6c7;background:#fcfcfc;border-radius:1px;"></div>
<svg class="a" style="left:1598.1px;top:805.0px;" width="17" height="17" viewBox="0 0 17 17"><path d="M0.3,2.5 L6.4,0.2 L16.8,5.6 L12.6,13.6 L1.7,8.5 Z M3.9,2.6 a1.3,1.3 0 1,0 0.01,0 Z" fill="#31363b" fill-rule="evenodd"/>
<path d="M0.4,3.4 L0.6,9.2 L8.4,16.7 L11,14.5 L1.3,9.6 Z" fill="#31363b"/>
<path d="M0.9,8.6 L12,14" stroke="#fcfcfc" stroke-width="0.8" fill="none"/></svg>
<div class="t" style="left:1624.75px;top:805.00px;font-size:13px;line-height:17.000px;letter-spacing:0.286px;color:#232629;">Pencil Squids</div>
<div class="a" style="left:1595.0px;top:830.9000000000001px;width:14.3px;height:14.8px;box-sizing:border-box;border:1px solid #c3c6c7;background:#fcfcfc;border-radius:1px;"></div>
<svg class="a" style="left:1595.0px;top:831.2px;" width="14" height="14" viewBox="0 0 14 14"><path d="M2.6,6.9 L6,12.2 L10.6,3.2" stroke="#1b1e20" stroke-width="1.7" fill="none" stroke-linecap="butt" stroke-linejoin="miter"/></svg>
<svg class="a" style="left:1619.2px;top:830.0px;" width="17" height="17" viewBox="0 0 17 17"><path d="M0.3,2.5 L6.4,0.2 L16.8,5.6 L12.6,13.6 L1.7,8.5 Z M3.9,2.6 a1.3,1.3 0 1,0 0.01,0 Z" fill="#31363b" fill-rule="evenodd"/>
<path d="M0.4,3.4 L0.6,9.2 L8.4,16.7 L11,14.5 L1.3,9.6 Z" fill="#31363b"/>
<path d="M0.9,8.6 L12,14" stroke="#fcfcfc" stroke-width="0.8" fill="none"/></svg>
<div class="t" style="left:1645.80px;top:830.00px;font-size:13px;line-height:17.000px;letter-spacing:0.475px;color:#232629;">Opalescent Inshore Squid</div>
<svg class="a" style="left:1450.3px;top:861.0px;" width="9" height="6" viewBox="0 0 9 6"><path d="M0.3,0.4 L8.3,0.4 L4.3,5 Z" fill="#7f8386"/></svg>
<div class="a" style="left:1468.7px;top:855.9000000000001px;width:14.3px;height:14.8px;box-sizing:border-box;border:1px solid #c3c6c7;background:#fcfcfc;border-radius:1px;"></div>
<svg class="a" style="left:1492.9px;top:855.0px;" width="17" height="17" viewBox="0 0 17 17"><path d="M0.3,2.5 L6.4,0.2 L16.8,5.6 L12.6,13.6 L1.7,8.5 Z M3.9,2.6 a1.3,1.3 0 1,0 0.01,0 Z" fill="#31363b" fill-rule="evenodd"/>
<path d="M0.4,3.4 L0.6,9.2 L8.4,16.7 L11,14.5 L1.3,9.6 Z" fill="#31363b"/>
<path d="M0.9,8.6 L12,14" stroke="#fcfcfc" stroke-width="0.8" fill="none"/></svg>
<div class="t" style="left:1519.50px;top:855.00px;font-size:13px;line-height:17.000px;letter-spacing:0.279px;color:#232629;">TaxonId</div>
<div class="a" style="left:1489.8px;top:880.9000000000001px;width:14.3px;height:14.8px;box-sizing:border-box;border:1px solid #c3c6c7;background:#fcfcfc;border-radius:1px;"></div>
<svg class="a" style="left:1489.8px;top:881.2px;" width="14" height="14" viewBox="0 0 14 14"><path d="M2.6,6.9 L6,12.2 L10.6,3.2" stroke="#1b1e20" stroke-width="1.7" fill="none" stroke-linecap="butt" stroke-linejoin="miter"/></svg>
<svg class="a" style="left:1513.9px;top:880.0px;" width="17" height="17" viewBox="0 0 17 17"><path d="M0.3,2.5 L6.4,0.2 L16.8,5.6 L12.6,13.6 L1.7,8.5 Z M3.9,2.6 a1.3,1.3 0 1,0 0.01,0 Z" fill="#31363b" fill-rule="evenodd"/>
<path d="M0.4,3.4 L0.6,9.2 L8.4,16.7 L11,14.5 L1.3,9.6 Z" fill="#31363b"/>
<path d="M0.9,8.6 L12,14" stroke="#fcfcfc" stroke-width="0.8" fill="none"/></svg>
<div class="t" style="left:1540.55px;top:880.00px;font-size:13px;line-height:17.000px;letter-spacing:0.602px;color:#232629;">153981</div>
<div class="a" style="left:1443.6px;top:929.6px;width:373.4px;height:23.4px;box-sizing:border-box;border:1px solid #bcbec0;border-radius:3px;background:#ffffff;"></div>
<div class="t" style="left:1447.20px;top:933.00px;font-size:13px;line-height:17.000px;letter-spacing:0.274px;color:#8796a9;">Search...</div>
<div class="a" style="left:1823.3px;top:929.6px;width:24.5px;height:23.4px;border:1px solid #b3b5b7;border-radius:3px;background:linear-gradient(#e3e4e5,#e9eaeb);box-sizing:border-box;"></div>
<svg class="a" style="left:1827.5px;top:936px;" width="16" height="10" viewBox="0 0 16 10"><rect x="0.7" y="1.2" width="6.2" height="7.6" rx="1" fill="none" stroke="#31363b" stroke-width="1.3"/><rect x="9.1" y="1.2" width="6.2" height="7.6" rx="1" fill="none" stroke="#31363b" stroke-width="1.3"/><path d="M4.4,5 H11.6" stroke="#31363b" stroke-width="1.6"/></svg>
<div class="a" style="left:1855px;top:929.6px;width:24.8px;height:23.4px;border:1px solid #bcbec0;border-radius:3px;background:linear-gradient(#fdfdfd,#f4f5f5);box-shadow:0 1px 0 rgba(0,0,0,0.08);box-sizing:border-box;"></div>
<svg class="a" style="left:1860px;top:934px;" width="16" height="16" viewBox="0 0 16 16"><circle cx="6.6" cy="6.6" r="5.6" fill="none" stroke="#31363b" stroke-width="1.2"/><path d="M6.6,2.6 V6.8 H10.4" fill="none" stroke="#31363b" stroke-width="1.1"/><path d="M10.6,12 L15,12 L12.8,14.6 Z" fill="#5e6265"/></svg>
<div class="a" style="left:1432.2px;top:971.7px;width:459.4px;height:23.8px;box-sizing:border-box;border:1px solid #c6c8ca;border-radius:3px;background:linear-gradient(#f3f4f4,#ededee);"></div>
<svg class="a" style="left:1634px;top:977.5px;" width="14" height="11" viewBox="0 0 14 11"><path d="M0.8,6 L4.6,9.8 L13,1" fill="none" stroke="#a9acae" stroke-width="1.4"/></svg>
<div class="t" style="left:1652.00px;top:975.00px;font-size:13px;line-height:17.000px;letter-spacing:0.434px;color:#a9acae;">Appl<u>y</u></div>
<div class="a" style="left:1432.2px;top:1003.6px;width:24.6px;height:23.4px;box-sizing:border-box;border:1px solid #c6c8ca;border-radius:3px;background:linear-gradient(#f3f4f4,#ededee);"></div>
<svg class="a" style="left:1439px;top:1008.5px;" width="12" height="15" viewBox="0 0 12 15"><path d="M0.6,0.6 H7.4 L10.8,4 V7 M5,13.6 H0.6 V0.6" fill="none" stroke="#a9acae" stroke-width="1.1"/><path d="M7.4,0.6 V4 H10.8" fill="none" stroke="#a9acae" stroke-width="1"/><path d="M6,9 A3,3 0 1,1 6.6,12.4 M6,7 V9.4 H8.4" fill="none" stroke="#a9acae" stroke-width="1"/></svg>
<div class="a" style="left:1463px;top:1003.6px;width:211px;height:23.4px;box-sizing:border-box;border:1px solid #c6c8ca;border-radius:3px;background:linear-gradient(#f3f4f4,#ededee);"></div>
<svg class="a" style="left:1495.5px;top:1009.5px;" width="14" height="11" viewBox="0 0 14 11"><path d="M0.8,6 L4.6,9.8 L13,1" fill="none" stroke="#a9acae" stroke-width="1.4"/></svg>
<div class="t" style="left:1512.70px;top:1007.00px;font-size:13px;line-height:17.000px;letter-spacing:0.556px;color:#a9acae;">Apply t<u>o</u> all versions</div>
<div class="a" style="left:1681px;top:1004.4px;width:210px;height:22px;border:1px solid #bcbec0;border-radius:3px;background:linear-gradient(#fdfdfd,#f4f5f5);box-shadow:0 1px 0 rgba(0,0,0,0.08);box-sizing:border-box;"></div>
<div class="t" style="left:1764.50px;top:1007.00px;font-size:13px;line-height:17.000px;letter-spacing:0.344px;color:#232629;">Mo<u>r</u>e</div>
<svg class="a" style="left:1875px;top:1013px;" width="8" height="5" viewBox="0 0 8 5"><path d="M0.3,0.4 L7.3,0.4 L3.8,4.4 Z" fill="#5e6265"/></svg>
<div class="a" style="left:1892px;top:388.4px;width:25.5px;height:81.6px;box-sizing:border-box;border:1px solid #b9bbbd;border-radius:3px;background:#e3e4e5;"></div>
<div class="t" style="left:1911.77px;top:103.60px;transform-origin:0 0;transform:rotate(90deg);font-size:13px;line-height:14.937px;letter-spacing:0.315px;color:#232629">Properties</div>
<svg class="a" style="left:1897.8px;top:84.4px;" width="13" height="13" viewBox="0 0 13 13"><path d="M0,2.6 H13 M5.2,10.4 H13 M0,10.4 H1.6" stroke="#31363b" stroke-width="1.2"/><circle cx="8.6" cy="2.6" r="2" fill="#31363b"/><circle cx="3.4" cy="10.4" r="1.7" fill="none" stroke="#31363b" stroke-width="1.1"/></svg>
<div class="t" style="left:1911.77px;top:195.50px;transform-origin:0 0;transform:rotate(90deg);font-size:13px;line-height:14.937px;letter-spacing:0.537px;color:#232629">Metadata</div>
<svg class="a" style="left:1897.8px;top:177px;" width="13" height="13" viewBox="0 0 13 13"><path d="M3.8,2.6 L0.6,6.5 L3.8,10.4 M9.2,2.6 L12.4,6.5 L9.2,10.4 M7.8,1 L5.2,12" fill="none" stroke="#31363b" stroke-width="1.1"/></svg>
<div class="t" style="left:1911.77px;top:282.50px;transform-origin:0 0;transform:rotate(90deg);font-size:13px;line-height:14.937px;letter-spacing:0.329px;color:#232629">Colours</div>
<svg class="a" style="left:1897.8px;top:263.6px;" width="13" height="13" viewBox="0 0 13 13"><path d="M5.6,1.6 L10.6,6.6 L5.8,11.4 L0.8,6.4 Z" fill="none" stroke="#31363b" stroke-width="1.2"/><path d="M1.4,6.6 H10 L5.8,10.8 Z" fill="#31363b"/><path d="M5.6,1.6 L4,0" stroke="#31363b" stroke-width="1.1"/><path d="M11.6,8.6 C12.8,10.2 13,11.4 11.6,12.4 C10.2,11.4 10.4,10.2 11.6,8.6 Z" fill="#31363b"/></svg>
<div class="t" style="left:1911.77px;top:358.00px;transform-origin:0 0;transform:rotate(90deg);font-size:13px;line-height:14.937px;letter-spacing:0.101px;color:#232629">Map</div>
<svg class="a" style="left:1896.0px;top:337.5px;" width="16.6" height="16.6" viewBox="0 0 16.6 16.6"><g transform="translate(8.3,8.3) scale(0.7590361445783131)"><circle cx="0" cy="0" r="7.7" fill="none" stroke="#31363b" stroke-width="1.55"/>
<path d="M-5.2,-0.6 C-4.2,-1.4 -2.6,-0.6 -1.2,0.4 C0.4,1.2 0.6,2.2 -0.6,3.2 C-1.4,4.4 -1.6,6 -2.6,7 C-3.4,6.4 -3.4,4.8 -4,3.6 C-4.8,2.6 -5.6,1.2 -5.2,-0.6 Z" fill="#31363b"/>
<path d="M3,-5.6 C4.4,-5.8 5.4,-4.4 6.8,-2.6 C7.8,0.4 7.2,3.4 5.6,5.4 C5.8,3.6 5.6,2 4.6,1 C3.2,0.8 2,0 2,-1.2 C2.2,-2.4 3.4,-2.6 3.2,-3.6 C2.6,-4.4 2.4,-5 3,-5.6 Z" fill="#31363b"/>
<path d="M-5.8,-4.6 C-4.4,-6.4 -2.4,-7.4 -0.4,-7.4 L-1.2,-6 C-2.8,-5.6 -4.4,-4.6 -5.8,-3.4 Z" fill="#31363b"/></g></svg>
<div class="t" style="left:1911.77px;top:412.40px;transform-origin:0 0;transform:rotate(90deg);font-size:13px;line-height:14.937px;letter-spacing:0.411px;color:#232629">Captions</div>
<svg class="a" style="left:1897.8px;top:392.6px;" width="13" height="13" viewBox="0 0 13 13"><path d="M1.6,0.6 H8.6 L11.4,3.4 V12.4 H1.6 Z" fill="none" stroke="#31363b" stroke-width="1.1"/><path d="M3.6,5 H9.4 M3.6,7.4 H9.4 M3.6,9.8 H9.4" stroke="#31363b" stroke-width="1"/><path d="M0.4,0 L3,0 L0.4,2.6 Z" fill="#3daee9"/></svg>
<div class="t" style="left:1911.77px;top:495.50px;transform-origin:0 0;transform:rotate(90deg);font-size:13px;line-height:14.937px;letter-spacing:0.328px;color:#232629">Versions</div>
<svg class="a" style="left:1897.8px;top:476px;" width="13" height="13" viewBox="0 0 13 13"><rect x="0.6" y="0.6" width="11.8" height="11.8" fill="none" stroke="#31363b" stroke-width="1.1"/><path d="M0.6,4 H12.4 M6.5,0.6 V12.4 M0.6,8 H6.5" stroke="#31363b" stroke-width="1"/><path d="M7,12 L7,8 L12,12 Z" fill="#31363b"/></svg>
<div class="t" style="left:1911.77px;top:576.50px;transform-origin:0 0;transform:rotate(90deg);font-size:13px;line-height:14.937px;letter-spacing:0.387px;color:#232629">Filters</div>
<svg class="a" style="left:1897.8px;top:558.5px;" width="13" height="13" viewBox="0 0 13 13"><path d="M0.8,1 H12.2 L8,6.6 V11.8 L5.4,9.8 V6.6 Z" fill="none" stroke="#31363b" stroke-width="1.1" stroke-linejoin="round"/></svg>
<div class="t" style="left:1911.77px;top:641.60px;transform-origin:0 0;transform:rotate(90deg);font-size:13px;line-height:14.937px;letter-spacing:0.108px;color:#232629">Tools</div>
<svg class="a" style="left:1897.8px;top:623.6px;" width="13" height="13" viewBox="0 0 13 13"><path d="M1,9 L8,2 L11,5 L4,12 H1 Z" fill="none" stroke="#31363b" stroke-width="1.2"/><path d="M6.6,3.4 L9.6,6.4" stroke="#31363b" stroke-width="1.1"/><path d="M8,2 L9.6,0.4 L12.6,3.4 L11,5 Z" fill="#31363b"/></svg>
</div></body></html>
